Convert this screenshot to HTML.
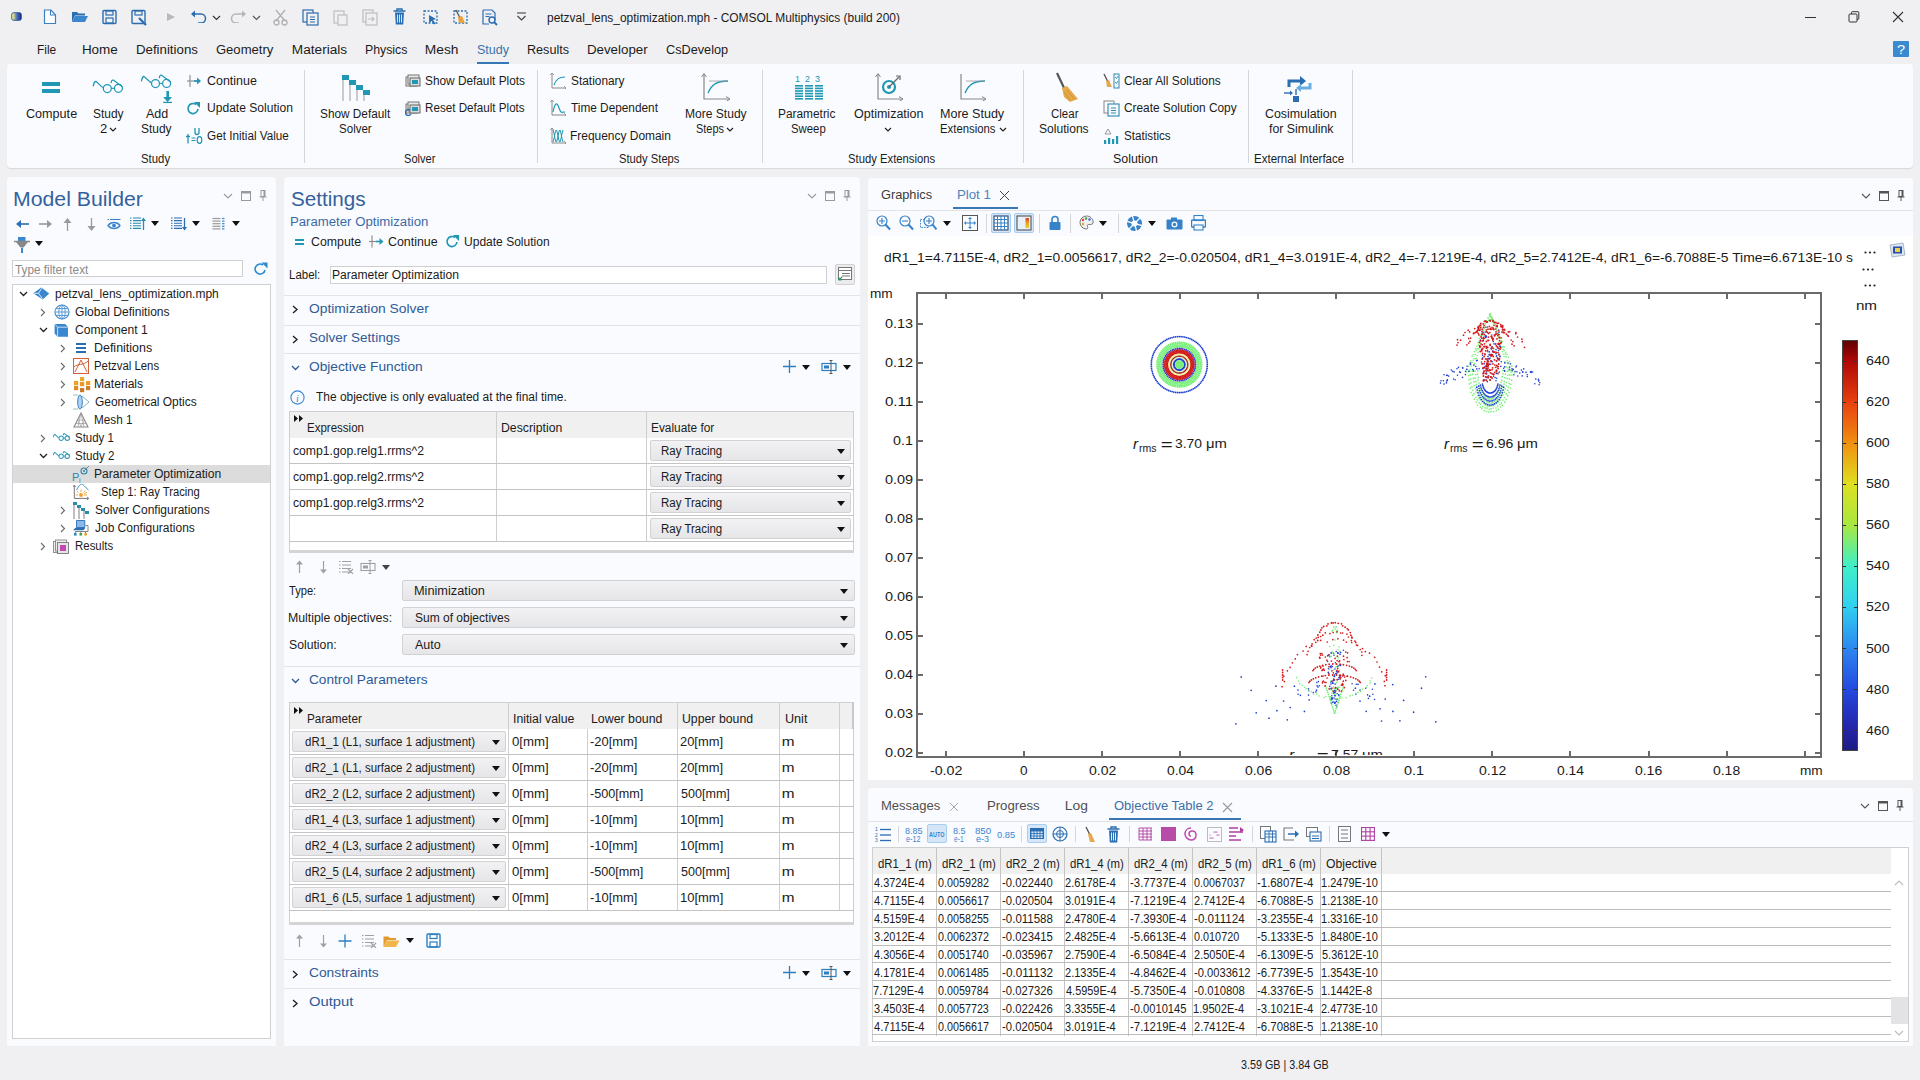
<!DOCTYPE html>
<html><head><meta charset="utf-8"><title>COMSOL</title>
<style>
html,body{margin:0;padding:0;width:1920px;height:1080px;overflow:hidden;background:#f0f0f2;font-family:"Liberation Sans",sans-serif;}
body>div,body>svg{position:absolute;}
.t{position:absolute;white-space:pre;}
</style></head><body>
<svg style="left:11px;top:12px;" width="11" height="9" viewBox="0 0 11 9"><defs><linearGradient id="appg" x1="0" y1="0" x2="1" y2="0"><stop offset="0.1" stop-color="#f4f080"/><stop offset="0.55" stop-color="#4a70c0"/><stop offset="1" stop-color="#142c80"/></linearGradient></defs><rect x="0.7" y="0.7" width="9.6" height="7.6" rx="1.8" fill="url(#appg)" stroke="#1c3a8a" stroke-width="0.8"/></svg>
<svg style="left:43px;top:9px;" width="14" height="16" viewBox="0 0 14 16"><path d="M1.5 1h6.5l4.5 5v8.5h-11z" fill="#fbfdff" stroke="#3a80c2" stroke-width="1.2"/><path d="M7.5 1v5h5" fill="none" stroke="#3a80c2" stroke-width="1.1"/></svg>
<svg style="left:71px;top:10px;" width="18" height="13" viewBox="0 0 18 13"><path d="M1 2h5l1.5 1.5H14v2H4L1 12z" fill="#2a6db0"/><path d="M4 6h13l-3 6H1z" fill="#3b86cc"/></svg>
<svg style="left:102px;top:9px;" width="15" height="16" viewBox="0 0 15 16"><rect x="1" y="1.5" width="13" height="13" rx="1" fill="none" stroke="#2a6db0" stroke-width="1.4"/><rect x="4" y="2" width="7" height="4" fill="none" stroke="#2a6db0" stroke-width="1.2"/><rect x="4" y="9" width="7" height="5" fill="none" stroke="#2a6db0" stroke-width="1.2"/></svg>
<svg style="left:131px;top:9px;" width="18" height="17" viewBox="0 0 18 17"><rect x="1" y="1.5" width="13" height="13" rx="1" fill="none" stroke="#2a6db0" stroke-width="1.4"/><rect x="4" y="2" width="7" height="4" fill="none" stroke="#2a6db0" stroke-width="1.2"/><path d="M8 9l7 7" stroke="#2a6db0" stroke-width="2.2"/></svg>
<svg style="left:166px;top:12px;" width="10" height="10" viewBox="0 0 10 10"><path d="M1 1l8 4-8 4z" fill="#b9b9b9"/></svg>
<svg style="left:190px;top:10px;" width="17" height="13" viewBox="0 0 17 13"><path d="M4 4h7a4.5 4.5 0 0 1 0 9H8" fill="none" stroke="#2a6db0" stroke-width="1.5"/><path d="M1 4l4-3.5v7z" fill="#2a6db0"/></svg>
<svg style="left:212px;top:15px;" width="9" height="6" viewBox="0 0 9 6"><path d="M1 1l3.5 3.5L8 1" fill="none" stroke="#333" stroke-width="1.2"/></svg>
<svg style="left:230px;top:10px;" width="17" height="13" viewBox="0 0 17 13"><path d="M13 4H6a4.5 4.5 0 0 0 0 9h3" fill="none" stroke="#b5b5b5" stroke-width="1.5"/><path d="M16 4l-4-3.5v7z" fill="#b5b5b5"/></svg>
<svg style="left:252px;top:15px;" width="9" height="6" viewBox="0 0 9 6"><path d="M1 1l3.5 3.5L8 1" fill="none" stroke="#555" stroke-width="1.2"/></svg>
<svg style="left:273px;top:9px;" width="15" height="17" viewBox="0 0 15 17"><path d="M3 1l9 11M12 1L3 12" stroke="#b0b0b0" stroke-width="1.3"/><circle cx="3.5" cy="13.5" r="2.5" fill="none" stroke="#b0b0b0" stroke-width="1.3"/><circle cx="11.5" cy="13.5" r="2.5" fill="none" stroke="#b0b0b0" stroke-width="1.3"/></svg>
<svg style="left:302px;top:9px;" width="17" height="17" viewBox="0 0 17 17"><rect x="1" y="1" width="10" height="12" fill="none" stroke="#2a6db0" stroke-width="1.2"/><rect x="5" y="4" width="11" height="12" fill="#f0f0f2" stroke="#2a6db0" stroke-width="1.2"/><path d="M8 8h5M8 10.5h5M8 13h5" stroke="#2a6db0" stroke-width="1"/></svg>
<svg style="left:333px;top:9px;" width="15" height="17" viewBox="0 0 15 17"><rect x="1" y="2" width="10" height="12" fill="none" stroke="#bdbdbd" stroke-width="1.2"/><rect x="5" y="6" width="9" height="10" fill="#f0f0f2" stroke="#bdbdbd" stroke-width="1.2"/></svg>
<svg style="left:362px;top:9px;" width="16" height="17" viewBox="0 0 16 17"><rect x="1" y="1" width="10" height="12" fill="none" stroke="#bdbdbd" stroke-width="1.2"/><rect x="4" y="4" width="11" height="12" fill="#f0f0f2" stroke="#bdbdbd" stroke-width="1.2"/><path d="M6 10h6M10 8l2 2-2 2" fill="none" stroke="#bdbdbd" stroke-width="1.1"/></svg>
<svg style="left:393px;top:8px;" width="13" height="18" viewBox="0 0 13 18"><path d="M0.5 3h12M4 3V1h5v2" fill="none" stroke="#2a6db0" stroke-width="1.4"/><path d="M2 4.5h9l-0.8 12H2.8z" fill="#2a6db0"/><path d="M4.5 6.5v8M6.5 6.5v8M8.5 6.5v8" stroke="#f0f0f2" stroke-width="0.9"/></svg>
<svg style="left:423px;top:10px;" width="15" height="15" viewBox="0 0 15 15"><rect x="1" y="1" width="13" height="12" fill="none" stroke="#2a6db0" stroke-width="1.3" stroke-dasharray="2 1.5"/><path d="M6 5l7 4-3 1 2.5 3.5-1.3 1-2.5-3.5-2.5 2z" fill="#2a6db0"/></svg>
<svg style="left:453px;top:9px;" width="15" height="16" viewBox="0 0 15 16"><rect x="1" y="2" width="13" height="12" fill="none" stroke="#2a6db0" stroke-width="1.3" stroke-dasharray="2 1.5"/><path d="M3 1l4 8" stroke="#555" stroke-width="1.2"/><path d="M5 8l4-1 3 7H6z" fill="#e6a23c"/></svg>
<svg style="left:482px;top:9px;" width="16" height="17" viewBox="0 0 16 17"><path d="M1 1h9l3 3v7" fill="none" stroke="#2a6db0" stroke-width="1.2"/><path d="M1 1v14h6" fill="none" stroke="#2a6db0" stroke-width="1.2"/><path d="M3.5 5h6M3.5 7.5h4" stroke="#2a6db0" stroke-width="1"/><circle cx="10" cy="11" r="3" fill="none" stroke="#2a6db0" stroke-width="1.4"/><path d="M12 13l3 3" stroke="#2a6db0" stroke-width="1.8"/></svg>
<svg style="left:516px;top:12px;" width="11" height="10" viewBox="0 0 11 10"><path d="M1 1h9" stroke="#444" stroke-width="1.1"/><path d="M1.5 4l4 4 4-4" fill="none" stroke="#444" stroke-width="1.2"/></svg>
<div class="t" style="left:547.28px;top:11.84px;font-size:12px;line-height:12px;color:#1b1b1b;transform:scaleX(0.9939);transform-origin:0.72px 0;">petzval_lens_optimization.mph - COMSOL Multiphysics (build 200)</div>
<div style="left:1805px;top:17px;width:11px;height:1px;background:#333"></div>
<svg style="left:1848px;top:11px;" width="12" height="12" viewBox="0 0 12 12"><rect x="1" y="3" width="8" height="8" rx="1" fill="none" stroke="#333" stroke-width="1"/><path d="M3.5 3V1.5a0.8 0.8 0 0 1 0.8-.8H10a0.8 0.8 0 0 1 .8.8V7.5a.8.8 0 0 1-.8.8H9" fill="none" stroke="#333" stroke-width="1"/></svg>
<svg style="left:1892px;top:11px;" width="12" height="12" viewBox="0 0 12 12"><path d="M1 1l10 10M11 1L1 11" stroke="#333" stroke-width="1.1"/></svg>
<div class="t" style="left:36.54px;top:43.84px;font-size:12px;line-height:12px;color:#1b1b1b;transform:scaleX(0.9955);transform-origin:0.96px 0;">File</div>
<div class="t" style="left:82.24px;top:43.84px;font-size:12px;line-height:12px;color:#1b1b1b;transform:scaleX(1.1231);transform-origin:0.96px 0;">Home</div>
<div class="t" style="left:136.04px;top:43.84px;font-size:12px;line-height:12px;color:#1b1b1b;transform:scaleX(1.1068);transform-origin:0.96px 0;">Definitions</div>
<div class="t" style="left:216.40px;top:43.84px;font-size:12px;line-height:12px;color:#1b1b1b;transform:scaleX(1.0887);transform-origin:0.60px 0;">Geometry</div>
<div class="t" style="left:292.04px;top:43.84px;font-size:12px;line-height:12px;color:#1b1b1b;transform:scaleX(1.1358);transform-origin:0.96px 0;">Materials</div>
<div class="t" style="left:364.84px;top:43.84px;font-size:12px;line-height:12px;color:#1b1b1b;transform:scaleX(1.0260);transform-origin:0.96px 0;">Physics</div>
<div class="t" style="left:424.84px;top:43.84px;font-size:12px;line-height:12px;color:#1b1b1b;transform:scaleX(1.1461);transform-origin:0.96px 0;">Mesh</div>
<div class="t" style="left:477.06px;top:43.84px;font-size:12px;line-height:12px;color:#3a72a8;transform:scaleX(1.0425);transform-origin:0.54px 0;">Study</div>
<div class="t" style="left:527.04px;top:43.84px;font-size:12px;line-height:12px;color:#1b1b1b;transform:scaleX(1.0533);transform-origin:0.96px 0;">Results</div>
<div class="t" style="left:587.04px;top:43.84px;font-size:12px;line-height:12px;color:#1b1b1b;transform:scaleX(1.1105);transform-origin:0.96px 0;">Developer</div>
<div class="t" style="left:666.40px;top:43.84px;font-size:12px;line-height:12px;color:#1b1b1b;transform:scaleX(1.0590);transform-origin:0.60px 0;">CsDevelop</div>
<div style="left:477px;top:62px;width:32px;height:2px;background:#3578b5"></div>
<div style="left:1893px;top:41px;width:16px;height:16px;background:#3a8ad0;border-radius:1px"></div>
<div class="t" style="left:1896.98px;top:43.00px;font-size:13px;line-height:13px;color:#fff;transform:scaleX(1.1218);transform-origin:0.52px 0;">?</div>
<div style="left:7px;top:64px;width:1906px;height:104px;background:#fafbfe;border-radius:4px;box-shadow:0 1px 1px rgba(0,0,0,0.10)"></div>
<div style="left:304px;top:70px;width:1px;height:93px;background:#d6d6d8"></div>
<div style="left:537px;top:70px;width:1px;height:93px;background:#d6d6d8"></div>
<div style="left:762px;top:70px;width:1px;height:93px;background:#d6d6d8"></div>
<div style="left:1023px;top:70px;width:1px;height:93px;background:#d6d6d8"></div>
<div style="left:1248px;top:70px;width:1px;height:93px;background:#d6d6d8"></div>
<div style="left:1352px;top:70px;width:1px;height:93px;background:#d6d6d8"></div>
<div class="t" style="left:140.96px;top:152.84px;font-size:12px;line-height:12px;color:#1b1b1b;transform:scaleX(0.9462);transform-origin:0.54px 0;">Study</div>
<div class="t" style="left:403.76px;top:152.84px;font-size:12px;line-height:12px;color:#1b1b1b;transform:scaleX(0.9219);transform-origin:0.54px 0;">Solver</div>
<div class="t" style="left:618.76px;top:152.84px;font-size:12px;line-height:12px;color:#1b1b1b;transform:scaleX(0.9338);transform-origin:0.54px 0;">Study Steps</div>
<div class="t" style="left:847.76px;top:152.84px;font-size:12px;line-height:12px;color:#1b1b1b;transform:scaleX(0.9396);transform-origin:0.54px 0;">Study Extensions</div>
<div class="t" style="left:1112.76px;top:152.84px;font-size:12px;line-height:12px;color:#1b1b1b;transform:scaleX(1.0328);transform-origin:0.54px 0;">Solution</div>
<div class="t" style="left:1254.04px;top:152.84px;font-size:12px;line-height:12px;color:#1b1b1b;transform:scaleX(0.9581);transform-origin:0.96px 0;">External Interface</div>
<div class="t" style="left:25.70px;top:107.84px;font-size:12px;line-height:12px;color:#1b1b1b;transform:scaleX(1.0509);transform-origin:0.60px 0;">Compute</div>
<div class="t" style="left:93.46px;top:107.84px;font-size:12px;line-height:12px;color:#1b1b1b;transform:scaleX(0.9960);transform-origin:0.54px 0;">Study</div>
<div class="t" style="left:146.00px;top:107.84px;font-size:12px;line-height:12px;color:#1b1b1b;transform:scaleX(1.0417);transform-origin:0.00px 0;">Add</div>
<div class="t" style="left:141.46px;top:122.84px;font-size:12px;line-height:12px;color:#1b1b1b;transform:scaleX(0.9960);transform-origin:0.54px 0;">Study</div>
<div class="t" style="left:320.46px;top:107.84px;font-size:12px;line-height:12px;color:#1b1b1b;transform:scaleX(0.9845);transform-origin:0.54px 0;">Show Default</div>
<div class="t" style="left:339.46px;top:122.84px;font-size:12px;line-height:12px;color:#1b1b1b;transform:scaleX(0.9610);transform-origin:0.54px 0;">Solver</div>
<div class="t" style="left:684.54px;top:107.84px;font-size:12px;line-height:12px;color:#1b1b1b;transform:scaleX(1.0046);transform-origin:0.96px 0;">More Study</div>
<div class="t" style="left:696.46px;top:122.84px;font-size:12px;line-height:12px;color:#1b1b1b;transform:scaleX(0.9091);transform-origin:0.54px 0;">Steps</div>
<div class="t" style="left:778.34px;top:107.84px;font-size:12px;line-height:12px;color:#1b1b1b;transform:scaleX(0.9901);transform-origin:0.96px 0;">Parametric</div>
<div class="t" style="left:790.76px;top:122.84px;font-size:12px;line-height:12px;color:#1b1b1b;transform:scaleX(0.9456);transform-origin:0.54px 0;">Sweep</div>
<div class="t" style="left:853.76px;top:107.84px;font-size:12px;line-height:12px;color:#1b1b1b;transform:scaleX(1.0428);transform-origin:0.54px 0;">Optimization</div>
<div class="t" style="left:940.04px;top:107.84px;font-size:12px;line-height:12px;color:#1b1b1b;transform:scaleX(1.0460);transform-origin:0.96px 0;">More Study</div>
<div class="t" style="left:939.54px;top:122.84px;font-size:12px;line-height:12px;color:#1b1b1b;transform:scaleX(0.9424);transform-origin:0.96px 0;">Extensions</div>
<div class="t" style="left:1050.70px;top:107.84px;font-size:12px;line-height:12px;color:#1b1b1b;transform:scaleX(0.9570);transform-origin:0.60px 0;">Clear</div>
<div class="t" style="left:1039.46px;top:122.84px;font-size:12px;line-height:12px;color:#1b1b1b;transform:scaleX(1.0058);transform-origin:0.54px 0;">Solutions</div>
<div class="t" style="left:1264.90px;top:107.84px;font-size:12px;line-height:12px;color:#1b1b1b;transform:scaleX(1.0317);transform-origin:0.60px 0;">Cosimulation</div>
<div class="t" style="left:1268.68px;top:122.84px;font-size:12px;line-height:12px;color:#1b1b1b;transform:scaleX(1.0297);transform-origin:0.12px 0;">for Simulink</div>
<div class="t" style="left:100.20px;top:122.84px;font-size:12px;line-height:12px;color:#1b1b1b;transform:scaleX(1.0870);transform-origin:0.60px 0;">2</div>
<svg style="left:109px;top:127px;" width="8" height="6" viewBox="0 0 8 6"><path d="M1 1l3 3 3-3" fill="none" stroke="#222" stroke-width="1.2"/></svg>
<svg style="left:726px;top:127px;" width="8" height="6" viewBox="0 0 8 6"><path d="M1 1l3 3 3-3" fill="none" stroke="#222" stroke-width="1.2"/></svg>
<svg style="left:884px;top:127px;" width="8" height="6" viewBox="0 0 8 6"><path d="M1 1l3 3 3-3" fill="none" stroke="#222" stroke-width="1.2"/></svg>
<svg style="left:999px;top:127px;" width="8" height="6" viewBox="0 0 8 6"><path d="M1 1l3 3 3-3" fill="none" stroke="#222" stroke-width="1.2"/></svg>
<div class="t" style="left:206.90px;top:74.84px;font-size:12px;line-height:12px;color:#1b1b1b;transform:scaleX(1.0379);transform-origin:0.60px 0;">Continue</div>
<div class="t" style="left:206.60px;top:102.34px;font-size:12px;line-height:12px;color:#1b1b1b;transform:scaleX(1.0064);transform-origin:0.90px 0;">Update Solution</div>
<div class="t" style="left:206.90px;top:130.34px;font-size:12px;line-height:12px;color:#1b1b1b;transform:scaleX(0.9766);transform-origin:0.60px 0;">Get Initial Value</div>
<div class="t" style="left:425.46px;top:74.84px;font-size:12px;line-height:12px;color:#1b1b1b;transform:scaleX(0.9857);transform-origin:0.54px 0;">Show Default Plots</div>
<div class="t" style="left:425.04px;top:102.34px;font-size:12px;line-height:12px;color:#1b1b1b;transform:scaleX(0.9700);transform-origin:0.96px 0;">Reset Default Plots</div>
<div class="t" style="left:570.76px;top:74.84px;font-size:12px;line-height:12px;color:#1b1b1b;transform:scaleX(0.9903);transform-origin:0.54px 0;">Stationary</div>
<div class="t" style="left:571.06px;top:102.34px;font-size:12px;line-height:12px;color:#1b1b1b;transform:scaleX(0.9850);transform-origin:0.24px 0;">Time Dependent</div>
<div class="t" style="left:570.34px;top:130.34px;font-size:12px;line-height:12px;color:#1b1b1b;transform:scaleX(0.9954);transform-origin:0.96px 0;">Frequency Domain</div>
<div class="t" style="left:1123.70px;top:74.84px;font-size:12px;line-height:12px;color:#1b1b1b;transform:scaleX(0.9932);transform-origin:0.60px 0;">Clear All Solutions</div>
<div class="t" style="left:1123.70px;top:102.34px;font-size:12px;line-height:12px;color:#1b1b1b;transform:scaleX(0.9871);transform-origin:0.60px 0;">Create Solution Copy</div>
<div class="t" style="left:1123.76px;top:130.34px;font-size:12px;line-height:12px;color:#1b1b1b;transform:scaleX(0.9715);transform-origin:0.54px 0;">Statistics</div>
<div style="left:42px;top:82px;width:18px;height:4px;background:#2098b4"></div>
<div style="left:42px;top:89px;width:18px;height:4px;background:#2098b4"></div>
<svg style="left:85px;top:68px;" width="95" height="40" viewBox="0 0 95 40"><path d="M8.2 18.3c0.5-3 2-5 2.7-4.9L17.799999999999997 19.6" fill="none" stroke="#2098b4" stroke-width="1.25"/><circle cx="22.299999999999997" cy="20.5" r="4" fill="none" stroke="#2098b4" stroke-width="1.25"/><path d="M26.3 20.3h3" stroke="#2098b4" stroke-width="1.1"/><circle cx="33.4" cy="20.3" r="4" fill="none" stroke="#2098b4" stroke-width="1.25"/><path d="M37.4 18.8L28.4 12.100000000000001c-1.2-0.4-2.2 0.6-2.2 3" fill="none" stroke="#2098b4" stroke-width="1.25"/><path d="M56.4 13.4c0.5-3 2-5 2.7-4.9L66.0 14.700000000000001" fill="none" stroke="#2098b4" stroke-width="1.25"/><circle cx="70.5" cy="15.600000000000001" r="4" fill="none" stroke="#2098b4" stroke-width="1.25"/><path d="M74.5 15.4h3" stroke="#2098b4" stroke-width="1.1"/><circle cx="81.6" cy="15.4" r="4" fill="none" stroke="#2098b4" stroke-width="1.25"/><path d="M85.6 13.9L76.6 7.2c-1.2-0.4-2.2 0.6-2.2 3" fill="none" stroke="#2098b4" stroke-width="1.25"/><path d="M82.7 23v6" stroke="#2098b4" stroke-width="2.6"/><path d="M78.2 29h8.8l-4.4 5z" fill="#2098b4"/><path d="M78.2 34.4h8.8" stroke="#2098b4" stroke-width="1.3"/></svg>
<svg style="left:186px;top:74px;" width="17" height="14" viewBox="0 0 17 14"><path d="M4 1v12" stroke="#888" stroke-width="1.1"/><path d="M1 7h11" stroke="#888" stroke-width="1.1"/><path d="M8 7h6" stroke="#2098b4" stroke-width="1.6"/><path d="M11 3.5l4 3.5-4 3.5z" fill="#2098b4"/></svg>
<svg style="left:186px;top:101px;" width="15" height="15" viewBox="0 0 15 15"><path d="M12 8a5 5 0 1 1-2-4.5" fill="none" stroke="#2098b4" stroke-width="1.7"/><path d="M8 1h6v6z" fill="#2098b4"/></svg>
<svg style="left:185px;top:127px;" width="18" height="18" viewBox="0 0 18 18"><path d="M10 1v4.5a2 2 0 0 0 4 0V1" fill="none" stroke="#2098b4" stroke-width="1.3"/><path d="M3 7v9.5M1 9.5h4" stroke="#2098b4" stroke-width="1.3"/><path d="M6.5 11h4M6.5 13.5h4" stroke="#2098b4" stroke-width="1.1"/><ellipse cx="14.5" cy="13" rx="2.3" ry="3.3" fill="none" stroke="#2098b4" stroke-width="1.2"/></svg>
<svg style="left:341px;top:74px;" width="30" height="27" viewBox="0 0 30 27"><path d="M2 3v24M9 8v19M16 13v14M23 18v9" stroke="#999" stroke-width="1"/><rect x="1" y="1" width="7" height="5" fill="#2098b4"/><rect x="8" y="6" width="7" height="5" fill="#2098b4"/><rect x="15" y="11" width="7" height="5" fill="#2098b4"/><rect x="22" y="16" width="7" height="5" fill="#2098b4"/></svg>
<svg style="left:405px;top:73px;" width="17" height="15" viewBox="0 0 17 15"><rect x="1" y="4" width="11" height="9" fill="#e8e8e8" stroke="#777" stroke-width="1"/><rect x="3" y="2" width="11" height="9" fill="#e8e8e8" stroke="#777" stroke-width="1"/><rect x="5" y="5" width="10" height="8" fill="#dcdcdc" stroke="#666" stroke-width="1"/><rect x="7" y="7" width="6" height="4" fill="#2098b4"/></svg>
<svg style="left:405px;top:100px;" width="17" height="16" viewBox="0 0 17 16"><rect x="1" y="4" width="11" height="9" fill="#e8e8e8" stroke="#777" stroke-width="1"/><rect x="3" y="2" width="11" height="9" fill="#e8e8e8" stroke="#777" stroke-width="1"/><rect x="5" y="5" width="10" height="8" fill="#dcdcdc" stroke="#666" stroke-width="1"/><rect x="7" y="7" width="6" height="4" fill="#2098b4"/><path d="M6 14a3 3 0 1 1-1-4" fill="none" stroke="#2a6db0" stroke-width="1.4"/></svg>
<svg style="left:550px;top:73px;" width="17" height="16" viewBox="0 0 17 16"><path d="M2 0v15h14" fill="none" stroke="#888" stroke-width="1"/><path d="M0 2l2-2 2 2M14 13l2 2-2 2" fill="none" stroke="#888" stroke-width="0.8"/><path d="M4 12c2-6 5-8 11-8" fill="none" stroke="#2098b4" stroke-width="1.2"/></svg>
<svg style="left:550px;top:100px;" width="17" height="16" viewBox="0 0 17 16"><path d="M2 0v15h14" fill="none" stroke="#888" stroke-width="1"/><path d="M0 2l2-2 2 2M14 13l2 2-2 2" fill="none" stroke="#888" stroke-width="0.8"/><path d="M3 12c2-10 4-10 6-4s3 4 6 4" fill="none" stroke="#2098b4" stroke-width="1.2"/></svg>
<svg style="left:550px;top:128px;" width="17" height="16" viewBox="0 0 17 16"><path d="M2 0v15h14" fill="none" stroke="#888" stroke-width="1"/><path d="M0 2l2-2 2 2M14 13l2 2-2 2" fill="none" stroke="#888" stroke-width="0.8"/><path d="M3.0 2c1.5 4 1.5 8 3 12M3.0 14c1.5-4 1.5-8 3-12" fill="none" stroke="#2098b4" stroke-width="1"/><path d="M6.5 2c1.5 4 1.5 8 3 12M6.5 14c1.5-4 1.5-8 3-12" fill="none" stroke="#2098b4" stroke-width="1"/><path d="M10.0 2c1.5 4 1.5 8 3 12M10.0 14c1.5-4 1.5-8 3-12" fill="none" stroke="#2098b4" stroke-width="1"/></svg>
<svg style="left:701px;top:73px;" width="30" height="28" viewBox="0 0 30 28"><path d="M3 1v25h26" fill="none" stroke="#888" stroke-width="1.2"/><path d="M0.5 4L3 0.5 5.5 4M25 23.5l4 2.5-4 2.5" fill="none" stroke="#888" stroke-width="1"/><path d="M7 20c4-9 9-12 20-12" fill="none" stroke="#2098b4" stroke-width="1.4"/><path d="M8 8h19" stroke="#999" stroke-width="0.8"/></svg>
<svg style="left:795px;top:74px;" width="29" height="27" viewBox="0 0 29 27"><text x="0" y="8" font-size="9" fill="#2098b4" font-family="Liberation Sans">1</text><text x="10" y="8" font-size="9" fill="#2098b4" font-family="Liberation Sans">2</text><text x="20" y="8" font-size="9" fill="#2098b4" font-family="Liberation Sans">3</text><rect x="0" y="11.0" width="8" height="1.6" fill="#2098b4"/><rect x="0" y="13.6" width="8" height="1.6" fill="#2098b4"/><rect x="0" y="16.2" width="8" height="1.6" fill="#2098b4"/><rect x="0" y="18.8" width="8" height="1.6" fill="#2098b4"/><rect x="0" y="21.4" width="8" height="1.6" fill="#2098b4"/><rect x="0" y="24.0" width="8" height="1.6" fill="#2098b4"/><rect x="10" y="11.0" width="8" height="1.6" fill="#2098b4"/><rect x="10" y="13.6" width="8" height="1.6" fill="#2098b4"/><rect x="10" y="16.2" width="8" height="1.6" fill="#2098b4"/><rect x="10" y="18.8" width="8" height="1.6" fill="#2098b4"/><rect x="10" y="21.4" width="8" height="1.6" fill="#2098b4"/><rect x="10" y="24.0" width="8" height="1.6" fill="#2098b4"/><rect x="20" y="11.0" width="8" height="1.6" fill="#2098b4"/><rect x="20" y="13.6" width="8" height="1.6" fill="#2098b4"/><rect x="20" y="16.2" width="8" height="1.6" fill="#2098b4"/><rect x="20" y="18.8" width="8" height="1.6" fill="#2098b4"/><rect x="20" y="21.4" width="8" height="1.6" fill="#2098b4"/><rect x="20" y="24.0" width="8" height="1.6" fill="#2098b4"/></svg>
<svg style="left:875px;top:73px;" width="29" height="28" viewBox="0 0 29 28"><path d="M3 1v25h25" fill="none" stroke="#888" stroke-width="1.2"/><path d="M0.5 4L3 0.5 5.5 4M24 23.5l4 2.5-4 2.5" fill="none" stroke="#888" stroke-width="1"/><circle cx="14" cy="14" r="6" fill="none" stroke="#2098b4" stroke-width="2.2"/><circle cx="14" cy="14" r="2" fill="#2098b4"/><path d="M14 14l10-10" stroke="#666" stroke-width="1.2"/><path d="M21 3l4 0 0 4" fill="none" stroke="#666" stroke-width="1.2"/></svg>
<svg style="left:959px;top:73px;" width="29" height="28" viewBox="0 0 29 28"><path d="M2 1v25h25" fill="none" stroke="#888" stroke-width="1.2"/><path d="M23 23.5l4 2.5-4 2.5" fill="none" stroke="#888" stroke-width="1"/><path d="M6 20c4-9 9-12 20-12" fill="none" stroke="#2098b4" stroke-width="1.4"/><path d="M7 8h19" stroke="#999" stroke-width="0.8"/></svg>
<svg style="left:1055px;top:72px;" width="24" height="31" viewBox="0 0 24 31"><path d="M2 1l8 17" stroke="#555" stroke-width="2.2"/><path d="M7 16l5-2 11 13-8 3-6-5z" fill="#e6a84a"/><path d="M9 20l6 8M12 18l7 9" stroke="#c88a2a" stroke-width="0.8"/></svg>
<svg style="left:1103px;top:73px;" width="17" height="16" viewBox="0 0 17 16"><path d="M1 1l4 8" stroke="#555" stroke-width="1.4"/><path d="M3 8l3-1 3 7H4z" fill="#e6a84a"/><rect x="11" y="1" width="5" height="14" fill="none" stroke="#2a8ab0" stroke-width="1"/><path d="M12 4l1.5 1.5L15 3M12 9l1.5 1.5L15 8" fill="none" stroke="#2a8ab0" stroke-width="0.9"/></svg>
<svg style="left:1103px;top:100px;" width="17" height="17" viewBox="0 0 17 17"><rect x="1" y="1" width="10" height="12" fill="none" stroke="#888" stroke-width="1"/><rect x="5" y="4" width="11" height="12" fill="#f9fafd" stroke="#2a8ab0" stroke-width="1.1"/><path d="M8 8h5M8 10.5h5M8 13h5" stroke="#2a8ab0" stroke-width="1"/></svg>
<svg style="left:1103px;top:128px;" width="17" height="17" viewBox="0 0 17 17"><path d="M5 1l3 5H2z" fill="none" stroke="#999" stroke-width="1"/><rect x="1" y="12" width="2.2" height="4" fill="#2098b4"/><rect x="5" y="10" width="2.2" height="6" fill="#2098b4"/><rect x="9" y="11" width="2.2" height="5" fill="#2098b4"/><rect x="13" y="8" width="2.2" height="8" fill="#2098b4"/></svg>
<svg style="left:1283px;top:75px;" width="30" height="28" viewBox="0 0 30 28"><path d="M6 12V6h12" fill="none" stroke="#2a6db0" stroke-width="3"/><path d="M17 1l6 5-6 5z" fill="#2a6db0"/><path d="M27 8v5H17" fill="none" stroke="#6aaee0" stroke-width="3"/><path d="M18 9l-5 4 5 4z" fill="#6aaee0"/><path d="M1 18h8" stroke="#2a6db0" stroke-width="1.4"/><path d="M7 15.5l3 2.5-3 2.5z" fill="#2a6db0"/><path d="M13 14v6" stroke="#2a6db0" stroke-width="1.4"/><rect x="10" y="21" width="6" height="6" fill="#2a6db0"/></svg>
<div style="left:7px;top:177px;width:269px;height:869px;background:#fafbfe;border-radius:4px 4px 0 0"></div>
<div class="t" style="left:13.36px;top:188.65px;font-size:20.5px;line-height:20.5px;color:#34619c;transform:scaleX(1.0372);transform-origin:1.64px 0;">Model Builder</div>
<svg style="left:223px;top:193px;" width="10" height="6" viewBox="0 0 10 6"><path d="M1 1l4 4 4-4" fill="none" stroke="#9a9a9a" stroke-width="1.1"/></svg>
<svg style="left:241px;top:191px;" width="10" height="10" viewBox="0 0 10 10"><rect x="0.5" y="0.5" width="9" height="9" fill="none" stroke="#9a9a9a" stroke-width="1"/><rect x="0.5" y="0.5" width="9" height="2" fill="#9a9a9a"/></svg>
<svg style="left:259px;top:190px;" width="8" height="11" viewBox="0 0 8 11"><rect x="2" y="0.5" width="4" height="6" fill="none" stroke="#9a9a9a" stroke-width="1"/><rect x="4.5" y="0.5" width="1.5" height="6" fill="#9a9a9a"/><path d="M0.5 7h7M4 7v4" stroke="#9a9a9a" stroke-width="1"/></svg>
<svg style="left:15px;top:218px;" width="15" height="12" viewBox="0 0 15 12"><path d="M14 6H3" stroke="#2a6db0" stroke-width="1.6"/><path d="M1 6l5-4v8z" fill="#2a6db0"/></svg>
<svg style="left:38px;top:218px;" width="15" height="12" viewBox="0 0 15 12"><path d="M1 6h11" stroke="#9a9a9a" stroke-width="1.6"/><path d="M14 6l-5-4v8z" fill="#9a9a9a"/></svg>
<svg style="left:63px;top:217px;" width="9" height="15" viewBox="0 0 9 15"><path d="M4.5 14V3" stroke="#9a9a9a" stroke-width="1.3"/><path d="M4.5 1l-4 5h8z" fill="#9a9a9a"/></svg>
<svg style="left:87px;top:217px;" width="9" height="15" viewBox="0 0 9 15"><path d="M4.5 1v11" stroke="#9a9a9a" stroke-width="1.3"/><path d="M4.5 14l-4-5h8z" fill="#9a9a9a"/></svg>
<svg style="left:107px;top:218px;" width="14" height="12" viewBox="0 0 14 12"><path d="M0.5 1.5h1.5M3 1.5h10.5" stroke="#3a7fc0" stroke-width="1.2"/><path d="M1 7.5c3-4 9-4 12 0-3 4-9 4-12 0z" fill="none" stroke="#3a86cf" stroke-width="1.3"/><ellipse cx="7" cy="7.5" rx="2" ry="1.8" fill="#3a86cf"/></svg>
<svg style="left:129px;top:217px;" width="17" height="14" viewBox="0 0 17 14"><path d="M1 1.0h1.5M4 1.0h8" stroke="#2a8ab0" stroke-width="1.1"/><path d="M1 3.6h1.5M4 3.6h8" stroke="#2a8ab0" stroke-width="1.1"/><path d="M1 6.2h1.5M4 6.2h8" stroke="#2a8ab0" stroke-width="1.1"/><path d="M1 8.8h1.5M4 8.8h8" stroke="#2a8ab0" stroke-width="1.1"/><path d="M1 11.4h1.5M4 11.4h8" stroke="#2a8ab0" stroke-width="1.1"/><path d="M14.5 13V3" stroke="#2a8ab0" stroke-width="1.3"/><path d="M14.5 0.5l-2.5 3.5h5z" fill="#2a8ab0"/></svg>
<svg style="left:151px;top:221px;" width="8" height="5" viewBox="0 0 8 5"><path d="M0 0h8l-4 5z" fill="#111"/></svg>
<svg style="left:170px;top:217px;" width="17" height="14" viewBox="0 0 17 14"><path d="M1 1.0h1.5M4 1.0h8" stroke="#2a6db0" stroke-width="1.1"/><path d="M1 3.6h1.5M4 3.6h8" stroke="#2a6db0" stroke-width="1.1"/><path d="M1 6.2h1.5M4 6.2h8" stroke="#2a6db0" stroke-width="1.1"/><path d="M1 8.8h1.5M4 8.8h8" stroke="#2a6db0" stroke-width="1.1"/><path d="M1 11.4h1.5M4 11.4h8" stroke="#2a6db0" stroke-width="1.1"/><path d="M14.5 1v10" stroke="#2a6db0" stroke-width="1.3"/><path d="M14.5 13.5l-2.5-3.5h5z" fill="#2a6db0"/></svg>
<svg style="left:192px;top:221px;" width="8" height="5" viewBox="0 0 8 5"><path d="M0 0h8l-4 5z" fill="#111"/></svg>
<svg style="left:212px;top:217px;" width="13" height="14" viewBox="0 0 13 14"><path d="M0.5 1.5h8" stroke="#999" stroke-width="1.2"/><path d="M10 1.5h2.5" stroke="#3a86cf" stroke-width="1.2"/><path d="M0.5 4.1h8" stroke="#999" stroke-width="1.2"/><path d="M10 4.1h2.5" stroke="#3a86cf" stroke-width="1.2"/><path d="M0.5 6.7h8" stroke="#999" stroke-width="1.2"/><path d="M10 6.7h2.5" stroke="#3a86cf" stroke-width="1.2"/><path d="M0.5 9.3h8" stroke="#999" stroke-width="1.2"/><path d="M10 9.3h2.5" stroke="#3a86cf" stroke-width="1.2"/><path d="M0.5 11.9h8" stroke="#999" stroke-width="1.2"/><path d="M10 11.9h2.5" stroke="#3a86cf" stroke-width="1.2"/></svg>
<svg style="left:232px;top:221px;" width="8" height="5" viewBox="0 0 8 5"><path d="M0 0h8l-4 5z" fill="#111"/></svg>
<svg style="left:13px;top:236px;" width="18" height="18" viewBox="0 0 18 18"><rect x="5" y="1" width="7.5" height="4.5" fill="#3a86cf"/><path d="M1 5.5h16" stroke="#888" stroke-width="1.5"/><path d="M3 6h12l-4.5 5.5h-3z" fill="#888"/><rect x="8" y="12" width="2" height="5" fill="#3a86cf"/></svg>
<svg style="left:35px;top:241px;" width="8" height="5" viewBox="0 0 8 5"><path d="M0 0h8l-4 5z" fill="#111"/></svg>
<div style="left:12px;top:260px;width:231px;height:17px;background:#fff;border:1px solid #cfcfcf;box-sizing:border-box"></div>
<div class="t" style="left:14.76px;top:263.84px;font-size:12px;line-height:12px;color:#8a8a8a;transform:scaleX(0.9812);transform-origin:0.24px 0;">Type filter text</div>
<svg style="left:253px;top:262px;" width="15" height="14" viewBox="0 0 15 14"><path d="M12 8a5 5 0 1 1-2-5" fill="none" stroke="#2a8ad0" stroke-width="1.6"/><path d="M8.5 0.5h6v6z" fill="#2a8ad0"/></svg>
<div style="left:12px;top:284px;width:259px;height:755px;background:#fff;border:1px solid #d0d0d0;box-sizing:border-box"></div>
<div style="left:13px;top:465px;width:257px;height:18px;background:#dcdcdc"></div>
<svg style="left:19px;top:290.8px;" width="9" height="6" viewBox="0 0 9 6"><path d="M1 1l3.5 3.5L8 1" fill="none" stroke="#222" stroke-width="1.3"/></svg>
<svg style="left:33px;top:286px;" width="18" height="16" viewBox="0 0 18 16"><path d="M0.2 7.3L8.2 1.6L16.2 7.4L9.8 13.6z" fill="#3a86cf"/><path d="M1.0 7.3H5.6L8.6 2.3M5.6 7.3L9.6 13.0" fill="none" stroke="#e8f2fb" stroke-width="0.9"/></svg>
<div class="t" style="left:54.78px;top:287.64px;font-size:12px;line-height:12px;color:#1b1b1b;transform:scaleX(0.9978);transform-origin:0.72px 0;">petzval_lens_optimization.mph</div>
<svg style="left:40px;top:307.8px;" width="6" height="9" viewBox="0 0 6 9"><path d="M1 1l3.5 3.5L1 8" fill="none" stroke="#6a6a6a" stroke-width="1.1"/></svg>
<svg style="left:54px;top:304px;" width="16" height="16" viewBox="0 0 16 16"><circle cx="8" cy="8" r="7" fill="none" stroke="#4a8fd2" stroke-width="1.2"/><ellipse cx="8" cy="8" rx="3.2" ry="7" fill="none" stroke="#4a8fd2" stroke-width="0.9"/><path d="M1.5 8h13M2.3 4.6h11.4M2.3 11.4h11.4M8 1v14" stroke="#4a8fd2" stroke-width="0.9"/></svg>
<div class="t" style="left:74.80px;top:305.64px;font-size:12px;line-height:12px;color:#1b1b1b;transform:scaleX(1.0058);transform-origin:0.60px 0;">Global Definitions</div>
<svg style="left:39px;top:326.8px;" width="9" height="6" viewBox="0 0 9 6"><path d="M1 1l3.5 3.5L8 1" fill="none" stroke="#222" stroke-width="1.3"/></svg>
<svg style="left:54px;top:322px;" width="16" height="16" viewBox="0 0 16 16"><path d="M0.6 2.0L11.2 2.0L14.0 5.0L14.0 14.8L3.6 14.8L0.6 11.6z" fill="#3a86cf"/><path d="M0.9 2.3L3.6 5.2L13.8 5.2M3.6 5.2L3.6 14.6" fill="none" stroke="#d8e8f8" stroke-width="0.9"/></svg>
<div class="t" style="left:74.80px;top:323.64px;font-size:12px;line-height:12px;color:#1b1b1b;transform:scaleX(1.0096);transform-origin:0.60px 0;">Component 1</div>
<svg style="left:60px;top:343.8px;" width="6" height="9" viewBox="0 0 6 9"><path d="M1 1l3.5 3.5L1 8" fill="none" stroke="#6a6a6a" stroke-width="1.1"/></svg>
<svg style="left:76px;top:342px;" width="11" height="11" viewBox="0 0 11 11"><rect x="0" y="1" width="10" height="2" fill="#2a6db0"/><rect x="0" y="5" width="10" height="2" fill="#2a6db0"/><rect x="0" y="9" width="10" height="2" fill="#2a6db0"/></svg>
<div class="t" style="left:94.04px;top:341.64px;font-size:12px;line-height:12px;color:#1b1b1b;transform:scaleX(1.0392);transform-origin:0.96px 0;">Definitions</div>
<svg style="left:60px;top:361.8px;" width="6" height="9" viewBox="0 0 6 9"><path d="M1 1l3.5 3.5L1 8" fill="none" stroke="#6a6a6a" stroke-width="1.1"/></svg>
<svg style="left:73px;top:358px;" width="16" height="16" viewBox="0 0 16 16"><rect x="0.5" y="0.5" width="15" height="15" fill="none" stroke="#d2623a" stroke-width="1.1"/><path d="M2 14L8 2l6 12M1 9c4-4 9-1 14-6" fill="none" stroke="#d2623a" stroke-width="1"/></svg>
<div class="t" style="left:94.34px;top:359.64px;font-size:12px;line-height:12px;color:#1b1b1b;transform:scaleX(0.9462);transform-origin:0.96px 0;">Petzval Lens</div>
<svg style="left:60px;top:379.8px;" width="6" height="9" viewBox="0 0 6 9"><path d="M1 1l3.5 3.5L1 8" fill="none" stroke="#6a6a6a" stroke-width="1.1"/></svg>
<svg style="left:74px;top:376px;" width="17" height="17" viewBox="0 0 17 17"><rect x="6" y="1" width="4.2" height="4.2" fill="#e8a830"/><rect x="0" y="5" width="4.2" height="4.2" fill="#f0a020"/><rect x="6" y="6" width="4.2" height="4.2" fill="#e89828"/><rect x="12" y="5" width="4.2" height="4.2" fill="#f09a20"/><rect x="0" y="10" width="4.2" height="4.2" fill="#e08a28"/><rect x="12" y="10" width="4.2" height="4.2" fill="#d08028"/><rect x="6" y="12" width="4.2" height="4.2" fill="#c87a28"/></svg>
<div class="t" style="left:94.34px;top:377.64px;font-size:12px;line-height:12px;color:#1b1b1b;transform:scaleX(1.0089);transform-origin:0.96px 0;">Materials</div>
<svg style="left:60px;top:397.8px;" width="6" height="9" viewBox="0 0 6 9"><path d="M1 1l3.5 3.5L1 8" fill="none" stroke="#6a6a6a" stroke-width="1.1"/></svg>
<svg style="left:73px;top:394px;" width="17" height="16" viewBox="0 0 17 16"><path d="M0 1h5M0 15h5" stroke="#8aa" stroke-width="0.8"/><ellipse cx="7" cy="8" rx="2.3" ry="7" fill="#b0d4f2" stroke="#3a7fc0" stroke-width="1"/><path d="M9 2l7 6-7 6" fill="none" stroke="#7ab" stroke-width="0.9"/></svg>
<div class="t" style="left:94.70px;top:395.64px;font-size:12px;line-height:12px;color:#1b1b1b;transform:scaleX(0.9966);transform-origin:0.60px 0;">Geometrical Optics</div>
<svg style="left:73px;top:412px;" width="16" height="16" viewBox="0 0 16 16"><path d="M8 1L1 15h14z" fill="none" stroke="#888" stroke-width="1.1"/><path d="M4.5 8h7M3 11.5h10M8 1l-3 14M8 1l3 14M4.5 8l4 7M11.5 8l-4 7" stroke="#999" stroke-width="0.7"/></svg>
<div class="t" style="left:94.34px;top:413.64px;font-size:12px;line-height:12px;color:#1b1b1b;transform:scaleX(0.9773);transform-origin:0.96px 0;">Mesh 1</div>
<svg style="left:40px;top:433.8px;" width="6" height="9" viewBox="0 0 6 9"><path d="M1 1l3.5 3.5L1 8" fill="none" stroke="#6a6a6a" stroke-width="1.1"/></svg>
<svg style="left:53px;top:433px;" width="18" height="10" viewBox="0 0 18 10"><g transform="translate(0.4 0.6) scale(0.55)"><path d="M0 6.3c0.5-3 2-5 2.7-4.9L9.6 7.6" fill="none" stroke="#2a9ab8" stroke-width="1.9"/><circle cx="14.1" cy="8.5" r="4" fill="none" stroke="#2a9ab8" stroke-width="1.9"/><path d="M18.1 8.3h3" stroke="#2a9ab8" stroke-width="1.6"/><circle cx="25.2" cy="8.3" r="4" fill="none" stroke="#2a9ab8" stroke-width="1.9"/><path d="M29.2 6.8L20.2 0.1c-1.2-0.4-2.2 0.6-2.2 3" fill="none" stroke="#2a9ab8" stroke-width="1.9"/></g></svg>
<div class="t" style="left:74.96px;top:431.64px;font-size:12px;line-height:12px;color:#1b1b1b;transform:scaleX(0.9520);transform-origin:0.54px 0;">Study 1</div>
<svg style="left:39px;top:452.8px;" width="9" height="6" viewBox="0 0 9 6"><path d="M1 1l3.5 3.5L8 1" fill="none" stroke="#222" stroke-width="1.3"/></svg>
<svg style="left:53px;top:451px;" width="18" height="10" viewBox="0 0 18 10"><g transform="translate(0.4 0.6) scale(0.55)"><path d="M0 6.3c0.5-3 2-5 2.7-4.9L9.6 7.6" fill="none" stroke="#2a9ab8" stroke-width="1.9"/><circle cx="14.1" cy="8.5" r="4" fill="none" stroke="#2a9ab8" stroke-width="1.9"/><path d="M18.1 8.3h3" stroke="#2a9ab8" stroke-width="1.6"/><circle cx="25.2" cy="8.3" r="4" fill="none" stroke="#2a9ab8" stroke-width="1.9"/><path d="M29.2 6.8L20.2 0.1c-1.2-0.4-2.2 0.6-2.2 3" fill="none" stroke="#2a9ab8" stroke-width="1.9"/></g></svg>
<div class="t" style="left:74.96px;top:449.64px;font-size:12px;line-height:12px;color:#1b1b1b;transform:scaleX(0.9672);transform-origin:0.54px 0;">Study 2</div>
<svg style="left:72px;top:466px;" width="18" height="17" viewBox="0 0 18 17"><text x="0" y="15" font-size="11" fill="#2a8ab0" font-family="Liberation Sans">P</text><text x="7" y="17" font-size="7" fill="#2a8ab0" font-family="Liberation Sans">i</text><circle cx="12" cy="5" r="3" fill="none" stroke="#2a8ab0" stroke-width="1.1"/><circle cx="12" cy="5" r="1" fill="#2a8ab0"/><path d="M12 5l5-5" stroke="#777" stroke-width="0.9"/></svg>
<div class="t" style="left:94.34px;top:467.64px;font-size:12px;line-height:12px;color:#1b1b1b;transform:scaleX(1.0090);transform-origin:0.96px 0;">Parameter Optimization</div>
<svg style="left:73px;top:484px;" width="18" height="18" viewBox="0 0 18 18"><path d="M1.3 1.5L1.3 14.4L15.5 14.4" fill="none" stroke="#777" stroke-width="1"/><path d="M-0.2 3.0L1.3 1.0L2.8 3.0M14.0 12.9L15.8 14.4L14.0 15.9" fill="none" stroke="#777" stroke-width="0.9"/><path d="M3.5 6.0C6.0 2.0 7.0 0.0 8.5 0.0S12.0 3.0 15.5 6.0" fill="none" stroke="#2a8ab8" stroke-width="1"/><circle cx="8" cy="11" r="1.9" fill="#f0a030"/><path d="M8.0 8.0L8.0 5.5M5.5 8.5L3.8 6.8M10.5 8.5L12.2 6.8M5.0 11.0L2.8 11.0M11.0 11.0L14.0 11.0M11.0 9.5L14.0 8.5" stroke="#f0a030" stroke-width="0.9"/></svg>
<div class="t" style="left:100.66px;top:485.64px;font-size:12px;line-height:12px;color:#1b1b1b;transform:scaleX(0.9376);transform-origin:0.54px 0;">Step 1: Ray Tracing</div>
<svg style="left:60px;top:505.79999999999995px;" width="6" height="9" viewBox="0 0 6 9"><path d="M1 1l3.5 3.5L1 8" fill="none" stroke="#6a6a6a" stroke-width="1.1"/></svg>
<svg style="left:73px;top:502px;" width="17" height="17" viewBox="0 0 17 17"><path d="M1 2v15M6 5v12M11 8v9" stroke="#808080" stroke-width="1"/><rect x="0" y="0" width="4" height="3" fill="#2a8ab0"/><rect x="4" y="3" width="4" height="3" fill="#2a8ab0"/><rect x="8" y="6" width="4" height="3" fill="#2a8ab0"/><rect x="12" y="9" width="4" height="3" fill="#2a8ab0"/></svg>
<div class="t" style="left:94.76px;top:503.64px;font-size:12px;line-height:12px;color:#1b1b1b;transform:scaleX(0.9995);transform-origin:0.54px 0;">Solver Configurations</div>
<svg style="left:60px;top:523.8px;" width="6" height="9" viewBox="0 0 6 9"><path d="M1 1l3.5 3.5L1 8" fill="none" stroke="#6a6a6a" stroke-width="1.1"/></svg>
<svg style="left:73px;top:520px;" width="18" height="18" viewBox="0 0 18 18"><path d="M3.5 0.5L11.8 0.5L11.8 7.5L3.5 7.5z" fill="#8ab8ea" stroke="#2a6db0" stroke-width="0.9"/><path d="M2.5 7.8L12.5 7.8L10.5 10.3L0.0 10.3z" fill="#2a6db0"/><path d="M12.5 5.5L15.0 5.5L15.0 11.5L2.3 11.5L2.3 13.0M7.8 11.5L7.8 13.0M12.5 11.5L12.5 13.0" fill="none" stroke="#777" stroke-width="0.9"/><rect x="1" y="13" width="2.6" height="2.6" fill="#2a8ab8"/><rect x="6.5" y="13" width="2.6" height="2.6" fill="#4aa04a"/><rect x="11.299999999999997" y="13" width="2.6" height="2.6" fill="#f0a030"/></svg>
<div class="t" style="left:95.12px;top:521.64px;font-size:12px;line-height:12px;color:#1b1b1b;transform:scaleX(0.9972);transform-origin:0.18px 0;">Job Configurations</div>
<svg style="left:40px;top:541.8px;" width="6" height="9" viewBox="0 0 6 9"><path d="M1 1l3.5 3.5L1 8" fill="none" stroke="#6a6a6a" stroke-width="1.1"/></svg>
<svg style="left:53px;top:538px;" width="16" height="16" viewBox="0 0 16 16"><rect x="0.5" y="3.5" width="11" height="11" fill="#eee" stroke="#888" stroke-width="0.9"/><rect x="2.5" y="2" width="11" height="11" fill="#eee" stroke="#888" stroke-width="0.9"/><rect x="4.5" y="4.5" width="11" height="11" fill="#e6e6e6" stroke="#777" stroke-width="0.9"/><rect x="7" y="7" width="6" height="6" fill="#c04ab0"/></svg>
<div class="t" style="left:74.54px;top:539.64px;font-size:12px;line-height:12px;color:#1b1b1b;transform:scaleX(0.9524);transform-origin:0.96px 0;">Results</div>
<div style="left:284px;top:177px;width:576px;height:869px;background:#fafbfe;border-radius:4px 4px 0 0"></div>
<div class="t" style="left:290.60px;top:188.57px;font-size:20px;line-height:20px;color:#34619c;transform:scaleX(1.0325);transform-origin:0.90px 0;">Settings</div>
<svg style="left:807px;top:193px;" width="10" height="6" viewBox="0 0 10 6"><path d="M1 1l4 4 4-4" fill="none" stroke="#9a9a9a" stroke-width="1.1"/></svg>
<svg style="left:825px;top:191px;" width="10" height="10" viewBox="0 0 10 10"><rect x="0.5" y="0.5" width="9" height="9" fill="none" stroke="#9a9a9a" stroke-width="1"/><rect x="0.5" y="0.5" width="9" height="2" fill="#9a9a9a"/></svg>
<svg style="left:843px;top:190px;" width="8" height="11" viewBox="0 0 8 11"><rect x="2" y="0.5" width="4" height="6" fill="none" stroke="#9a9a9a" stroke-width="1"/><rect x="4.5" y="0.5" width="1.5" height="6" fill="#9a9a9a"/><path d="M0.5 7h7M4 7v4" stroke="#9a9a9a" stroke-width="1"/></svg>
<div class="t" style="left:289.84px;top:215.54px;font-size:12px;line-height:12px;color:#3a6aa6;transform:scaleX(1.0991);transform-origin:0.96px 0;">Parameter Optimization</div>
<div style="left:295px;top:238.5px;width:9px;height:2.5px;background:#2098b4"></div>
<div style="left:295px;top:242.5px;width:9px;height:2.5px;background:#2098b4"></div>
<div class="t" style="left:311.10px;top:235.54px;font-size:12px;line-height:12px;color:#1b1b1b;transform:scaleX(1.0298);transform-origin:0.60px 0;">Compute</div>
<svg style="left:368px;top:235px;" width="17" height="13" viewBox="0 0 17 13"><path d="M4 0.5v12" stroke="#888" stroke-width="1.1"/><path d="M1 6.5h11" stroke="#888" stroke-width="1.1"/><path d="M8 6.5h5" stroke="#2098b4" stroke-width="1.6"/><path d="M11.5 3l4 3.5-4 3.5z" fill="#2098b4"/></svg>
<div class="t" style="left:387.90px;top:235.54px;font-size:12px;line-height:12px;color:#1b1b1b;transform:scaleX(1.0337);transform-origin:0.60px 0;">Continue</div>
<svg style="left:445px;top:234px;" width="15" height="15" viewBox="0 0 15 15"><path d="M12 8a5 5 0 1 1-2-4.5" fill="none" stroke="#2098b4" stroke-width="1.7"/><path d="M8 1h6v6z" fill="#2098b4"/></svg>
<div class="t" style="left:463.50px;top:235.54px;font-size:12px;line-height:12px;color:#1b1b1b;transform:scaleX(1.0029);transform-origin:0.90px 0;">Update Solution</div>
<div class="t" style="left:289.24px;top:268.74px;font-size:12px;line-height:12px;color:#1b1b1b;transform:scaleX(0.9556);transform-origin:0.96px 0;">Label:</div>
<div style="left:330px;top:266px;width:497px;height:18px;background:#fff;border:1px solid #d0d0d0;box-sizing:border-box"></div>
<div class="t" style="left:332.04px;top:268.74px;font-size:12px;line-height:12px;color:#1b1b1b;transform:scaleX(1.0066);transform-origin:0.96px 0;">Parameter Optimization</div>
<div style="left:835px;top:264px;width:20px;height:21px;background:#ececee;border:1px solid #d2d2d2;border-radius:2px;box-sizing:border-box"></div>
<svg style="left:838px;top:267px;" width="15" height="15" viewBox="0 0 15 15"><rect x="0.5" y="0.5" width="13" height="12" fill="#fff" stroke="#777" stroke-width="1"/><path d="M0.5 3.5h13M4 6.5h8M4 9h8" stroke="#777" stroke-width="1"/><path d="M1 13l3-3M1 10.5V13h2.5" fill="none" stroke="#2a9a6a" stroke-width="1.2"/></svg>
<div style="left:284px;top:295px;width:576px;height:1px;background:#e3e4e8"></div>
<svg style="left:292px;top:305px;" width="7" height="9" viewBox="0 0 7 9"><path d="M1 1l4 3.5L1 8" fill="none" stroke="#222" stroke-width="1.4"/></svg>
<div class="t" style="left:309.42px;top:303.06px;font-size:12.8px;line-height:12.8px;color:#2d5a96;transform:scaleX(1.0798);transform-origin:0.58px 0;">Optimization Solver</div>
<div style="left:284px;top:325px;width:576px;height:1px;background:#e3e4e8"></div>
<svg style="left:292px;top:334.5px;" width="7" height="9" viewBox="0 0 7 9"><path d="M1 1l4 3.5L1 8" fill="none" stroke="#222" stroke-width="1.4"/></svg>
<div class="t" style="left:309.42px;top:332.26px;font-size:12.8px;line-height:12.8px;color:#2d5a96;transform:scaleX(1.0570);transform-origin:0.58px 0;">Solver Settings</div>
<div style="left:284px;top:353px;width:576px;height:1px;background:#e3e4e8"></div>
<svg style="left:291px;top:364.5px;" width="9" height="6" viewBox="0 0 9 6"><path d="M1 1l3.5 3.5L8 1" fill="none" stroke="#2d5a96" stroke-width="1.3"/></svg>
<div class="t" style="left:309.42px;top:361.16px;font-size:12.8px;line-height:12.8px;color:#2d5a96;transform:scaleX(1.0732);transform-origin:0.58px 0;">Objective Function</div>
<svg style="left:783px;top:360px;" width="13" height="13" viewBox="0 0 13 13"><path d="M6.5 0v13M0 6.5h13" stroke="#2a7fc0" stroke-width="1.3"/></svg>
<svg style="left:802px;top:365px;" width="8" height="5" viewBox="0 0 8 5"><path d="M0 0h8l-4 5z" fill="#111"/></svg>
<svg style="left:821px;top:360px;" width="17" height="14" viewBox="0 0 17 14"><rect x="1" y="3.5" width="14" height="7" fill="none" stroke="#2a7fc0" stroke-width="1.2"/><rect x="3" y="5.5" width="5" height="3" fill="#2a7fc0"/><path d="M10 0.5v13M8.5 0.5h3M8.5 13.5h3" stroke="#555" stroke-width="1"/></svg>
<svg style="left:843px;top:365px;" width="8" height="5" viewBox="0 0 8 5"><path d="M0 0h8l-4 5z" fill="#111"/></svg>
<svg style="left:290px;top:390px;" width="15" height="15" viewBox="0 0 15 15"><circle cx="7.5" cy="7.5" r="6.6" fill="none" stroke="#3a86cf" stroke-width="1.1"/><text x="6" y="12" font-size="10" font-style="italic" fill="#3a86cf" font-family="Liberation Serif">i</text></svg>
<div class="t" style="left:316.06px;top:391.34px;font-size:12px;line-height:12px;color:#1b1b1b;transform:scaleX(0.9946);transform-origin:0.24px 0;">The objective is only evaluated at the final time.</div>
<div style="left:289px;top:411px;width:565px;height:140px;background:#fff;border:1px solid #cfcfcf;box-sizing:border-box"></div>
<div style="left:290px;top:412px;width:563px;height:26px;background:#f0f0f0"></div>
<svg style="left:294px;top:415px;" width="10" height="7" viewBox="0 0 10 7"><path d="M0 0l4 3.5L0 7zM5 0l4 3.5L5 7z" fill="#111"/></svg>
<div class="t" style="left:307.34px;top:421.84px;font-size:12px;line-height:12px;color:#1b1b1b;transform:scaleX(0.9591);transform-origin:0.96px 0;">Expression</div>
<div class="t" style="left:501.24px;top:421.84px;font-size:12px;line-height:12px;color:#1b1b1b;transform:scaleX(1.0219);transform-origin:0.96px 0;">Description</div>
<div class="t" style="left:650.84px;top:421.84px;font-size:12px;line-height:12px;color:#1b1b1b;transform:scaleX(0.9882);transform-origin:0.96px 0;">Evaluate for</div>
<div style="left:496px;top:412px;width:1px;height:129px;background:#cfcfcf"></div>
<div style="left:646px;top:412px;width:1px;height:129px;background:#cfcfcf"></div>
<div style="left:289px;top:463px;width:565px;height:1px;background:#c4c4c4"></div>
<div style="left:289px;top:489px;width:565px;height:1px;background:#c4c4c4"></div>
<div style="left:289px;top:515px;width:565px;height:1px;background:#c4c4c4"></div>
<div style="left:289px;top:541px;width:565px;height:1px;background:#c4c4c4"></div>
<div class="t" style="left:293.32px;top:444.64px;font-size:12px;line-height:12px;color:#1b1b1b;transform:scaleX(1.0158);transform-origin:0.48px 0;">comp1.gop.relg1.rrms^2</div>
<div style="left:650px;top:440px;width:201px;height:21px;background:linear-gradient(#f2f1f4,#ebebed 55%,#e6e6e8);border:1px solid #d2d2d4;border-radius:2px;box-sizing:border-box"></div>
<div class="t" style="left:661.04px;top:444.64px;font-size:12px;line-height:12px;color:#1b1b1b;transform:scaleX(0.9560);transform-origin:0.96px 0;">Ray Tracing</div>
<svg style="left:837px;top:448.8px;" width="8" height="5" viewBox="0 0 8 5"><path d="M0 0h8l-4 5z" fill="#111"/></svg>
<div class="t" style="left:293.32px;top:470.64px;font-size:12px;line-height:12px;color:#1b1b1b;transform:scaleX(1.0158);transform-origin:0.48px 0;">comp1.gop.relg2.rrms^2</div>
<div style="left:650px;top:466px;width:201px;height:21px;background:linear-gradient(#f2f1f4,#ebebed 55%,#e6e6e8);border:1px solid #d2d2d4;border-radius:2px;box-sizing:border-box"></div>
<div class="t" style="left:661.04px;top:470.64px;font-size:12px;line-height:12px;color:#1b1b1b;transform:scaleX(0.9560);transform-origin:0.96px 0;">Ray Tracing</div>
<svg style="left:837px;top:474.8px;" width="8" height="5" viewBox="0 0 8 5"><path d="M0 0h8l-4 5z" fill="#111"/></svg>
<div class="t" style="left:293.32px;top:496.64px;font-size:12px;line-height:12px;color:#1b1b1b;transform:scaleX(1.0158);transform-origin:0.48px 0;">comp1.gop.relg3.rrms^2</div>
<div style="left:650px;top:492px;width:201px;height:21px;background:linear-gradient(#f2f1f4,#ebebed 55%,#e6e6e8);border:1px solid #d2d2d4;border-radius:2px;box-sizing:border-box"></div>
<div class="t" style="left:661.04px;top:496.64px;font-size:12px;line-height:12px;color:#1b1b1b;transform:scaleX(0.9560);transform-origin:0.96px 0;">Ray Tracing</div>
<svg style="left:837px;top:500.8px;" width="8" height="5" viewBox="0 0 8 5"><path d="M0 0h8l-4 5z" fill="#111"/></svg>
<div style="left:650px;top:518px;width:201px;height:21px;background:linear-gradient(#f2f1f4,#ebebed 55%,#e6e6e8);border:1px solid #d2d2d4;border-radius:2px;box-sizing:border-box"></div>
<div class="t" style="left:661.04px;top:522.64px;font-size:12px;line-height:12px;color:#1b1b1b;transform:scaleX(0.9560);transform-origin:0.96px 0;">Ray Tracing</div>
<svg style="left:837px;top:526.8px;" width="8" height="5" viewBox="0 0 8 5"><path d="M0 0h8l-4 5z" fill="#111"/></svg>
<div style="left:289px;top:550px;width:565px;height:3px;background:#d4d4d6"></div>
<svg style="left:295px;top:560px;" width="9" height="14" viewBox="0 0 9 14"><path d="M4.5 13V3" stroke="#a0a0a0" stroke-width="1.2"/><path d="M4.5 0.5l-3.5 4h7z" fill="#a0a0a0"/></svg>
<svg style="left:319px;top:560px;" width="9" height="14" viewBox="0 0 9 14"><path d="M4.5 1v10" stroke="#a0a0a0" stroke-width="1.2"/><path d="M4.5 13.5l-3.5-4h7z" fill="#a0a0a0"/></svg>
<svg style="left:338px;top:560px;" width="16" height="14" viewBox="0 0 16 14"><path d="M1 1.5h1.5M4 1.5h9" stroke="#a0a0a0" stroke-width="1.1"/><path d="M1 5.0h1.5M4 5.0h9" stroke="#a0a0a0" stroke-width="1.1"/><path d="M1 8.5h1.5M4 8.5h9" stroke="#a0a0a0" stroke-width="1.1"/><path d="M1 12.0h1.5M4 12.0h9" stroke="#a0a0a0" stroke-width="1.1"/><path d="M10 9l5 5M15 9l-5 5" stroke="#a0a0a0" stroke-width="1.1"/></svg>
<svg style="left:360px;top:560px;" width="17" height="14" viewBox="0 0 17 14"><rect x="1" y="3.5" width="14" height="7" fill="none" stroke="#a0a0a0" stroke-width="1.1"/><rect x="3" y="5.5" width="5" height="3" fill="#a0a0a0"/><path d="M10 0.5v13M8.5 0.5h3M8.5 13.5h3" stroke="#a0a0a0" stroke-width="1"/></svg>
<svg style="left:382px;top:565px;" width="8" height="5" viewBox="0 0 8 5"><path d="M0 0h8l-4 5z" fill="#444"/></svg>
<div class="t" style="left:288.96px;top:584.84px;font-size:12px;line-height:12px;color:#1b1b1b;transform:scaleX(0.9259);transform-origin:0.24px 0;">Type:</div>
<div style="left:402px;top:580px;width:453px;height:21px;background:linear-gradient(#f2f1f4,#ebebed 55%,#e6e6e8);border:1px solid #d2d2d4;border-radius:2px;box-sizing:border-box"></div>
<div class="t" style="left:414.24px;top:584.84px;font-size:12px;line-height:12px;color:#1b1b1b;transform:scaleX(1.0649);transform-origin:0.96px 0;">Minimization</div>
<svg style="left:840px;top:589px;" width="8" height="5" viewBox="0 0 8 5"><path d="M0 0h8l-4 5z" fill="#111"/></svg>
<div class="t" style="left:288.24px;top:611.84px;font-size:12px;line-height:12px;color:#1b1b1b;transform:scaleX(1.0266);transform-origin:0.96px 0;">Multiple objectives:</div>
<div style="left:402px;top:607px;width:453px;height:21px;background:linear-gradient(#f2f1f4,#ebebed 55%,#e6e6e8);border:1px solid #d2d2d4;border-radius:2px;box-sizing:border-box"></div>
<div class="t" style="left:414.66px;top:611.84px;font-size:12px;line-height:12px;color:#1b1b1b;transform:scaleX(1.0002);transform-origin:0.54px 0;">Sum of objectives</div>
<svg style="left:840px;top:616px;" width="8" height="5" viewBox="0 0 8 5"><path d="M0 0h8l-4 5z" fill="#111"/></svg>
<div class="t" style="left:288.66px;top:638.84px;font-size:12px;line-height:12px;color:#1b1b1b;transform:scaleX(1.0195);transform-origin:0.54px 0;">Solution:</div>
<div style="left:402px;top:634px;width:453px;height:21px;background:linear-gradient(#f2f1f4,#ebebed 55%,#e6e6e8);border:1px solid #d2d2d4;border-radius:2px;box-sizing:border-box"></div>
<div class="t" style="left:415.20px;top:638.84px;font-size:12px;line-height:12px;color:#1b1b1b;transform:scaleX(1.0422);transform-origin:0.00px 0;">Auto</div>
<svg style="left:840px;top:643px;" width="8" height="5" viewBox="0 0 8 5"><path d="M0 0h8l-4 5z" fill="#111"/></svg>
<div style="left:284px;top:666px;width:576px;height:1px;background:#e3e4e8"></div>
<svg style="left:291px;top:677.5px;" width="9" height="6" viewBox="0 0 9 6"><path d="M1 1l3.5 3.5L8 1" fill="none" stroke="#2d5a96" stroke-width="1.3"/></svg>
<div class="t" style="left:309.36px;top:674.46px;font-size:12.8px;line-height:12.8px;color:#2d5a96;transform:scaleX(1.0693);transform-origin:0.64px 0;">Control Parameters</div>
<div style="left:289px;top:702px;width:565px;height:223px;background:#fff;border:1px solid #cfcfcf;box-sizing:border-box"></div>
<div style="left:290px;top:703px;width:549px;height:26px;background:#f0f0f0"></div>
<div style="left:840px;top:703px;width:13px;height:26px;background:#f0f0f0"></div>
<svg style="left:294px;top:707px;" width="10" height="7" viewBox="0 0 10 7"><path d="M0 0l4 3.5L0 7zM5 0l4 3.5L5 7z" fill="#111"/></svg>
<div class="t" style="left:307.34px;top:712.54px;font-size:12px;line-height:12px;color:#1b1b1b;transform:scaleX(0.9781);transform-origin:0.96px 0;">Parameter</div>
<div class="t" style="left:513.12px;top:712.54px;font-size:12px;line-height:12px;color:#1b1b1b;transform:scaleX(1.0233);transform-origin:1.08px 0;">Initial value</div>
<div class="t" style="left:591.04px;top:712.54px;font-size:12px;line-height:12px;color:#1b1b1b;transform:scaleX(1.0298);transform-origin:0.96px 0;">Lower bound</div>
<div class="t" style="left:682.30px;top:712.54px;font-size:12px;line-height:12px;color:#1b1b1b;transform:scaleX(1.0245);transform-origin:0.90px 0;">Upper bound</div>
<div class="t" style="left:784.60px;top:712.54px;font-size:12px;line-height:12px;color:#1b1b1b;transform:scaleX(1.0539);transform-origin:0.90px 0;">Unit</div>
<div style="left:508px;top:703px;width:1px;height:207px;background:#cfcfcf"></div>
<div style="left:677px;top:703px;width:1px;height:207px;background:#cfcfcf"></div>
<div style="left:779px;top:703px;width:1px;height:207px;background:#cfcfcf"></div>
<div style="left:839px;top:703px;width:1px;height:207px;background:#cfcfcf"></div>
<div style="left:587px;top:729px;width:1px;height:181px;background:#cfcfcf"></div>
<div style="left:852px;top:703px;width:2px;height:26px;background:#c8c8c8"></div>
<div style="left:289px;top:754px;width:565px;height:1px;background:#c4c4c4"></div>
<div style="left:292px;top:731px;width:214px;height:21px;background:linear-gradient(#f2f1f4,#ebebed 55%,#e6e6e8);border:1px solid #d2d2d4;border-radius:2px;box-sizing:border-box"></div>
<div class="t" style="left:305.02px;top:735.54px;font-size:12px;line-height:12px;color:#1b1b1b;transform:scaleX(0.9551);transform-origin:0.48px 0;">dR1_1 (L1, surface 1 adjustment)</div>
<svg style="left:492px;top:739.7px;" width="8" height="5" viewBox="0 0 8 5"><path d="M0 0h8l-4 5z" fill="#111"/></svg>
<div class="t" style="left:511.58px;top:735.54px;font-size:12px;line-height:12px;color:#1b1b1b;transform:scaleX(1.1028);transform-origin:0.42px 0;">0[mm]</div>
<div class="t" style="left:589.92px;top:735.54px;font-size:12px;line-height:12px;color:#1b1b1b;transform:scaleX(1.0768);transform-origin:0.48px 0;">-20[mm]</div>
<div class="t" style="left:680.40px;top:735.54px;font-size:12px;line-height:12px;color:#1b1b1b;transform:scaleX(1.0757);transform-origin:0.60px 0;">20[mm]</div>
<div class="t" style="left:782.22px;top:735.54px;font-size:12px;line-height:12px;color:#1b1b1b;transform:scaleX(1.2766);transform-origin:0.78px 0;">m</div>
<div style="left:289px;top:780px;width:565px;height:1px;background:#c4c4c4"></div>
<div style="left:292px;top:757px;width:214px;height:21px;background:linear-gradient(#f2f1f4,#ebebed 55%,#e6e6e8);border:1px solid #d2d2d4;border-radius:2px;box-sizing:border-box"></div>
<div class="t" style="left:305.02px;top:761.54px;font-size:12px;line-height:12px;color:#1b1b1b;transform:scaleX(0.9551);transform-origin:0.48px 0;">dR2_1 (L1, surface 2 adjustment)</div>
<svg style="left:492px;top:765.7px;" width="8" height="5" viewBox="0 0 8 5"><path d="M0 0h8l-4 5z" fill="#111"/></svg>
<div class="t" style="left:511.58px;top:761.54px;font-size:12px;line-height:12px;color:#1b1b1b;transform:scaleX(1.1028);transform-origin:0.42px 0;">0[mm]</div>
<div class="t" style="left:589.92px;top:761.54px;font-size:12px;line-height:12px;color:#1b1b1b;transform:scaleX(1.0768);transform-origin:0.48px 0;">-20[mm]</div>
<div class="t" style="left:680.40px;top:761.54px;font-size:12px;line-height:12px;color:#1b1b1b;transform:scaleX(1.0757);transform-origin:0.60px 0;">20[mm]</div>
<div class="t" style="left:782.22px;top:761.54px;font-size:12px;line-height:12px;color:#1b1b1b;transform:scaleX(1.2766);transform-origin:0.78px 0;">m</div>
<div style="left:289px;top:806px;width:565px;height:1px;background:#c4c4c4"></div>
<div style="left:292px;top:783px;width:214px;height:21px;background:linear-gradient(#f2f1f4,#ebebed 55%,#e6e6e8);border:1px solid #d2d2d4;border-radius:2px;box-sizing:border-box"></div>
<div class="t" style="left:305.02px;top:787.54px;font-size:12px;line-height:12px;color:#1b1b1b;transform:scaleX(0.9551);transform-origin:0.48px 0;">dR2_2 (L2, surface 2 adjustment)</div>
<svg style="left:492px;top:791.7px;" width="8" height="5" viewBox="0 0 8 5"><path d="M0 0h8l-4 5z" fill="#111"/></svg>
<div class="t" style="left:511.58px;top:787.54px;font-size:12px;line-height:12px;color:#1b1b1b;transform:scaleX(1.1028);transform-origin:0.42px 0;">0[mm]</div>
<div class="t" style="left:589.92px;top:787.54px;font-size:12px;line-height:12px;color:#1b1b1b;transform:scaleX(1.0531);transform-origin:0.48px 0;">-500[mm]</div>
<div class="t" style="left:680.52px;top:787.54px;font-size:12px;line-height:12px;color:#1b1b1b;transform:scaleX(1.0472);transform-origin:0.48px 0;">500[mm]</div>
<div class="t" style="left:782.22px;top:787.54px;font-size:12px;line-height:12px;color:#1b1b1b;transform:scaleX(1.2766);transform-origin:0.78px 0;">m</div>
<div style="left:289px;top:832px;width:565px;height:1px;background:#c4c4c4"></div>
<div style="left:292px;top:809px;width:214px;height:21px;background:linear-gradient(#f2f1f4,#ebebed 55%,#e6e6e8);border:1px solid #d2d2d4;border-radius:2px;box-sizing:border-box"></div>
<div class="t" style="left:305.02px;top:813.54px;font-size:12px;line-height:12px;color:#1b1b1b;transform:scaleX(0.9551);transform-origin:0.48px 0;">dR1_4 (L3, surface 1 adjustment)</div>
<svg style="left:492px;top:817.7px;" width="8" height="5" viewBox="0 0 8 5"><path d="M0 0h8l-4 5z" fill="#111"/></svg>
<div class="t" style="left:511.58px;top:813.54px;font-size:12px;line-height:12px;color:#1b1b1b;transform:scaleX(1.1028);transform-origin:0.42px 0;">0[mm]</div>
<div class="t" style="left:589.92px;top:813.54px;font-size:12px;line-height:12px;color:#1b1b1b;transform:scaleX(1.0768);transform-origin:0.48px 0;">-10[mm]</div>
<div class="t" style="left:680.10px;top:813.54px;font-size:12px;line-height:12px;color:#1b1b1b;transform:scaleX(1.0841);transform-origin:0.90px 0;">10[mm]</div>
<div class="t" style="left:782.22px;top:813.54px;font-size:12px;line-height:12px;color:#1b1b1b;transform:scaleX(1.2766);transform-origin:0.78px 0;">m</div>
<div style="left:289px;top:858px;width:565px;height:1px;background:#c4c4c4"></div>
<div style="left:292px;top:835px;width:214px;height:21px;background:linear-gradient(#f2f1f4,#ebebed 55%,#e6e6e8);border:1px solid #d2d2d4;border-radius:2px;box-sizing:border-box"></div>
<div class="t" style="left:305.02px;top:839.54px;font-size:12px;line-height:12px;color:#1b1b1b;transform:scaleX(0.9551);transform-origin:0.48px 0;">dR2_4 (L3, surface 2 adjustment)</div>
<svg style="left:492px;top:843.7px;" width="8" height="5" viewBox="0 0 8 5"><path d="M0 0h8l-4 5z" fill="#111"/></svg>
<div class="t" style="left:511.58px;top:839.54px;font-size:12px;line-height:12px;color:#1b1b1b;transform:scaleX(1.1028);transform-origin:0.42px 0;">0[mm]</div>
<div class="t" style="left:589.92px;top:839.54px;font-size:12px;line-height:12px;color:#1b1b1b;transform:scaleX(1.0768);transform-origin:0.48px 0;">-10[mm]</div>
<div class="t" style="left:680.10px;top:839.54px;font-size:12px;line-height:12px;color:#1b1b1b;transform:scaleX(1.0841);transform-origin:0.90px 0;">10[mm]</div>
<div class="t" style="left:782.22px;top:839.54px;font-size:12px;line-height:12px;color:#1b1b1b;transform:scaleX(1.2766);transform-origin:0.78px 0;">m</div>
<div style="left:289px;top:884px;width:565px;height:1px;background:#c4c4c4"></div>
<div style="left:292px;top:861px;width:214px;height:21px;background:linear-gradient(#f2f1f4,#ebebed 55%,#e6e6e8);border:1px solid #d2d2d4;border-radius:2px;box-sizing:border-box"></div>
<div class="t" style="left:305.02px;top:865.54px;font-size:12px;line-height:12px;color:#1b1b1b;transform:scaleX(0.9551);transform-origin:0.48px 0;">dR2_5 (L4, surface 2 adjustment)</div>
<svg style="left:492px;top:869.7px;" width="8" height="5" viewBox="0 0 8 5"><path d="M0 0h8l-4 5z" fill="#111"/></svg>
<div class="t" style="left:511.58px;top:865.54px;font-size:12px;line-height:12px;color:#1b1b1b;transform:scaleX(1.1028);transform-origin:0.42px 0;">0[mm]</div>
<div class="t" style="left:589.92px;top:865.54px;font-size:12px;line-height:12px;color:#1b1b1b;transform:scaleX(1.0531);transform-origin:0.48px 0;">-500[mm]</div>
<div class="t" style="left:680.52px;top:865.54px;font-size:12px;line-height:12px;color:#1b1b1b;transform:scaleX(1.0472);transform-origin:0.48px 0;">500[mm]</div>
<div class="t" style="left:782.22px;top:865.54px;font-size:12px;line-height:12px;color:#1b1b1b;transform:scaleX(1.2766);transform-origin:0.78px 0;">m</div>
<div style="left:289px;top:910px;width:565px;height:1px;background:#c4c4c4"></div>
<div style="left:292px;top:887px;width:214px;height:21px;background:linear-gradient(#f2f1f4,#ebebed 55%,#e6e6e8);border:1px solid #d2d2d4;border-radius:2px;box-sizing:border-box"></div>
<div class="t" style="left:305.02px;top:891.54px;font-size:12px;line-height:12px;color:#1b1b1b;transform:scaleX(0.9551);transform-origin:0.48px 0;">dR1_6 (L5, surface 1 adjustment)</div>
<svg style="left:492px;top:895.7px;" width="8" height="5" viewBox="0 0 8 5"><path d="M0 0h8l-4 5z" fill="#111"/></svg>
<div class="t" style="left:511.58px;top:891.54px;font-size:12px;line-height:12px;color:#1b1b1b;transform:scaleX(1.1028);transform-origin:0.42px 0;">0[mm]</div>
<div class="t" style="left:589.92px;top:891.54px;font-size:12px;line-height:12px;color:#1b1b1b;transform:scaleX(1.0768);transform-origin:0.48px 0;">-10[mm]</div>
<div class="t" style="left:680.10px;top:891.54px;font-size:12px;line-height:12px;color:#1b1b1b;transform:scaleX(1.0841);transform-origin:0.90px 0;">10[mm]</div>
<div class="t" style="left:782.22px;top:891.54px;font-size:12px;line-height:12px;color:#1b1b1b;transform:scaleX(1.2766);transform-origin:0.78px 0;">m</div>
<div style="left:289px;top:922px;width:565px;height:3px;background:#d4d4d6"></div>
<svg style="left:295px;top:934px;" width="9" height="14" viewBox="0 0 9 14"><path d="M4.5 13V3" stroke="#a0a0a0" stroke-width="1.2"/><path d="M4.5 0.5l-3.5 4h7z" fill="#a0a0a0"/></svg>
<svg style="left:319px;top:934px;" width="9" height="14" viewBox="0 0 9 14"><path d="M4.5 1v10" stroke="#a0a0a0" stroke-width="1.2"/><path d="M4.5 13.5l-3.5-4h7z" fill="#a0a0a0"/></svg>
<svg style="left:338px;top:934px;" width="15" height="14" viewBox="0 0 15 14"><path d="M7 0.5v13M0.5 7h13" stroke="#2a7fc0" stroke-width="1.3"/></svg>
<svg style="left:361px;top:934px;" width="16" height="14" viewBox="0 0 16 14"><path d="M1 1.5h1.5M4 1.5h9" stroke="#a0a0a0" stroke-width="1.1"/><path d="M1 5.0h1.5M4 5.0h9" stroke="#a0a0a0" stroke-width="1.1"/><path d="M1 8.5h1.5M4 8.5h9" stroke="#a0a0a0" stroke-width="1.1"/><path d="M1 12.0h1.5M4 12.0h9" stroke="#a0a0a0" stroke-width="1.1"/><path d="M10 9l5 5M15 9l-5 5" stroke="#a0a0a0" stroke-width="1.1"/></svg>
<svg style="left:383px;top:935px;" width="17" height="13" viewBox="0 0 17 13"><path d="M0.5 1.5h5l1.5 1.5h6v2H4L0.5 12z" fill="#e09a30"/><path d="M4 5.5h12.5L13 12H0.5z" fill="#f2b54a"/></svg>
<svg style="left:406px;top:938px;" width="8" height="5" viewBox="0 0 8 5"><path d="M0 0h8l-4 5z" fill="#111"/></svg>
<svg style="left:426px;top:933px;" width="15" height="15" viewBox="0 0 15 15"><rect x="1" y="1" width="13" height="13" rx="1" fill="none" stroke="#2a7fc0" stroke-width="1.4"/><rect x="4" y="1.5" width="7" height="4" fill="none" stroke="#2a7fc0" stroke-width="1.2"/><rect x="4" y="9" width="7" height="5" fill="none" stroke="#2a7fc0" stroke-width="1.2"/></svg>
<div style="left:284px;top:959px;width:576px;height:1px;background:#e3e4e8"></div>
<svg style="left:292px;top:969.5px;" width="7" height="9" viewBox="0 0 7 9"><path d="M1 1l4 3.5L1 8" fill="none" stroke="#222" stroke-width="1.4"/></svg>
<div class="t" style="left:309.36px;top:967.16px;font-size:12.8px;line-height:12.8px;color:#2d5a96;transform:scaleX(1.0788);transform-origin:0.64px 0;">Constraints</div>
<svg style="left:783px;top:966px;" width="13" height="13" viewBox="0 0 13 13"><path d="M6.5 0v13M0 6.5h13" stroke="#2a7fc0" stroke-width="1.3"/></svg>
<svg style="left:802px;top:971px;" width="8" height="5" viewBox="0 0 8 5"><path d="M0 0h8l-4 5z" fill="#111"/></svg>
<svg style="left:821px;top:966px;" width="17" height="14" viewBox="0 0 17 14"><rect x="1" y="3.5" width="14" height="7" fill="none" stroke="#2a7fc0" stroke-width="1.2"/><rect x="3" y="5.5" width="5" height="3" fill="#2a7fc0"/><path d="M10 0.5v13M8.5 0.5h3M8.5 13.5h3" stroke="#555" stroke-width="1"/></svg>
<svg style="left:843px;top:971px;" width="8" height="5" viewBox="0 0 8 5"><path d="M0 0h8l-4 5z" fill="#111"/></svg>
<div style="left:284px;top:988px;width:576px;height:1px;background:#e3e4e8"></div>
<svg style="left:292px;top:998.5px;" width="7" height="9" viewBox="0 0 7 9"><path d="M1 1l4 3.5L1 8" fill="none" stroke="#222" stroke-width="1.4"/></svg>
<div class="t" style="left:309.42px;top:996.16px;font-size:12.8px;line-height:12.8px;color:#2d5a96;transform:scaleX(1.1554);transform-origin:0.58px 0;">Output</div>
<div style="left:868px;top:178px;width:1045px;height:602px;background:#fafbfe;border-radius:4px 4px 0 0"></div>
<div style="left:868px;top:236px;width:1045px;height:544px;background:#fff"></div>
<div style="left:868px;top:210px;width:1045px;height:1px;background:#e3e4e8"></div>
<div class="t" style="left:881.10px;top:188.64px;font-size:12px;line-height:12px;color:#3a3a3a;transform:scaleX(1.0643);transform-origin:0.60px 0;">Graphics</div>
<div class="t" style="left:956.94px;top:188.64px;font-size:12px;line-height:12px;color:#4a84c0;transform:scaleX(1.1077);transform-origin:0.96px 0;">Plot 1</div>
<svg style="left:999px;top:190px;" width="11" height="11" viewBox="0 0 11 11"><path d="M1 1l9 9M10 1L1 10" stroke="#444" stroke-width="1"/></svg>
<div style="left:953px;top:207px;width:65px;height:2.4px;background:#3a78b4"></div>
<svg style="left:1861px;top:193px;" width="10" height="6" viewBox="0 0 10 6"><path d="M1 1l4 4 4-4" fill="none" stroke="#555" stroke-width="1.1"/></svg>
<svg style="left:1879px;top:191px;" width="10" height="10" viewBox="0 0 10 10"><rect x="0.5" y="0.5" width="9" height="9" fill="none" stroke="#555" stroke-width="1"/><rect x="0.5" y="0.5" width="9" height="2" fill="#555"/></svg>
<svg style="left:1897px;top:190px;" width="8" height="11" viewBox="0 0 8 11"><rect x="2" y="0.5" width="4" height="6" fill="none" stroke="#555" stroke-width="1"/><rect x="4.5" y="0.5" width="1.5" height="6" fill="#555"/><path d="M0.5 7h7M4 7v4" stroke="#555" stroke-width="1"/></svg>
<svg style="left:876px;top:215px;" width="15" height="16" viewBox="0 0 15 16"><circle cx="6" cy="6" r="5" fill="none" stroke="#3582c8" stroke-width="1.2"/><path d="M3 6h6M6 3v6" stroke="#3582c8" stroke-width="1.1"/><path d="M9.5 9.5l4.5 5" stroke="#3582c8" stroke-width="2"/></svg>
<svg style="left:899px;top:215px;" width="15" height="16" viewBox="0 0 15 16"><circle cx="6" cy="6" r="5" fill="none" stroke="#3582c8" stroke-width="1.2"/><path d="M3 6h6" stroke="#3582c8" stroke-width="1.1"/><path d="M9.5 9.5l4.5 5" stroke="#3582c8" stroke-width="2"/></svg>
<svg style="left:920px;top:215px;" width="17" height="17" viewBox="0 0 17 17"><rect x="0.5" y="4.5" width="8" height="8" fill="none" stroke="#3582c8" stroke-width="1" stroke-dasharray="1.5 1.2"/><circle cx="9" cy="6" r="5" fill="#f9fafd" stroke="#3582c8" stroke-width="1.2"/><path d="M6 6h6M9 3v6" stroke="#3582c8" stroke-width="1.1"/><path d="M12.5 9.5l4 5" stroke="#3582c8" stroke-width="2"/></svg>
<svg style="left:943px;top:221px;" width="8" height="5" viewBox="0 0 8 5"><path d="M0 0h8l-4 5z" fill="#111"/></svg>
<svg style="left:962px;top:215px;" width="16" height="16" viewBox="0 0 16 16"><rect x="0.5" y="0.5" width="15" height="15" fill="none" stroke="#555" stroke-width="1"/><path d="M8 3v10M3 8h10" stroke="#3582c8" stroke-width="1"/><path d="M8 2l-2 2h4zM8 14l-2-2h4zM2 8l2-2v4zM14 8l-2-2v4z" fill="#3582c8"/></svg>
<div style="left:986px;top:214px;width:1px;height:19px;background:#d6d6d8"></div>
<div style="left:991px;top:213px;width:20px;height:20px;background:#d4e6f7;border:1px solid #a8cdee;border-radius:2px;box-sizing:border-box"></div>
<svg style="left:993px;top:215px;" width="16" height="16" viewBox="0 0 16 16"><rect x="1" y="1" width="14" height="14" fill="#fff" stroke="#3a4f7a" stroke-width="1.2"/><path d="M4.5 1v14M1 4.5h14" stroke="#3582c8" stroke-width="1"/><path d="M8.0 1v14M1 8.0h14" stroke="#3582c8" stroke-width="1"/><path d="M11.5 1v14M1 11.5h14" stroke="#3582c8" stroke-width="1"/></svg>
<div style="left:1014px;top:213px;width:20px;height:20px;background:#d4e6f7;border:1px solid #a8cdee;border-radius:2px;box-sizing:border-box"></div>
<svg style="left:1016px;top:215px;" width="16" height="16" viewBox="0 0 16 16"><defs><linearGradient id="cbi" x1="0" y1="0" x2="0" y2="1"><stop offset="0" stop-color="#d04020"/><stop offset="0.5" stop-color="#f0a020"/><stop offset="1" stop-color="#e0d040"/></linearGradient></defs><rect x="1" y="1" width="14" height="14" fill="#e8f0fa" stroke="#555" stroke-width="1.1"/><rect x="9.5" y="3" width="3.5" height="10" fill="url(#cbi)"/></svg>
<div style="left:1039px;top:214px;width:1px;height:19px;background:#d6d6d8"></div>
<svg style="left:1049px;top:215px;" width="12" height="16" viewBox="0 0 12 16"><path d="M3 7V4.5a3 3 0 0 1 6 0V7" fill="none" stroke="#3582c8" stroke-width="1.6"/><rect x="0.5" y="7" width="11" height="8" rx="1" fill="#3582c8"/></svg>
<div style="left:1070px;top:214px;width:1px;height:19px;background:#d6d6d8"></div>
<svg style="left:1079px;top:215px;" width="15" height="16" viewBox="0 0 15 16"><path d="M7.5 1a6.5 6.5 0 1 0 0 13c1.5 0 1.5-1.5 1-2.5-.6-1 0-2 1.2-2h2a2.5 2.5 0 0 0 2.5-2.5C14 3.5 11 1 7.5 1z" fill="#f0f0f0" stroke="#777" stroke-width="1"/><circle cx="4" cy="5" r="1.2" fill="#e04040"/><circle cx="7" cy="3.5" r="1.2" fill="#40a040"/><circle cx="10.5" cy="4.5" r="1.2" fill="#4060e0"/><circle cx="4" cy="9" r="1.2" fill="#e0a030"/></svg>
<svg style="left:1099px;top:221px;" width="8" height="5" viewBox="0 0 8 5"><path d="M0 0h8l-4 5z" fill="#111"/></svg>
<div style="left:1118px;top:214px;width:1px;height:19px;background:#d6d6d8"></div>
<svg style="left:1126px;top:215px;" width="17" height="17" viewBox="0 0 17 17"><circle cx="8.5" cy="8.5" r="7.5" fill="#3582c8"/><circle cx="8.5" cy="8.5" r="3" fill="#fafbfe"/><path d="M8.5 8.5L16.2 10.6" stroke="#fafbfe" stroke-width="1.3"/><path d="M8.5 8.5L10.6 16.2" stroke="#fafbfe" stroke-width="1.3"/><path d="M8.5 8.5L2.8 14.2" stroke="#fafbfe" stroke-width="1.3"/><path d="M8.5 8.5L0.8 6.4" stroke="#fafbfe" stroke-width="1.3"/><path d="M8.5 8.5L6.4 0.8" stroke="#fafbfe" stroke-width="1.3"/><path d="M8.5 8.5L14.2 2.8" stroke="#fafbfe" stroke-width="1.3"/></svg>
<svg style="left:1148px;top:221px;" width="8" height="5" viewBox="0 0 8 5"><path d="M0 0h8l-4 5z" fill="#111"/></svg>
<svg style="left:1166px;top:217px;" width="17" height="13" viewBox="0 0 17 13"><rect x="0.5" y="2.5" width="16" height="10" rx="1" fill="#3582c8"/><rect x="5" y="0.5" width="6" height="3" fill="#3582c8"/><circle cx="8.5" cy="7.5" r="3" fill="#f9fafd"/><circle cx="8.5" cy="7.5" r="1.7" fill="#3582c8"/></svg>
<svg style="left:1191px;top:215px;" width="15" height="16" viewBox="0 0 15 16"><rect x="3" y="0.5" width="9" height="5" fill="none" stroke="#3582c8" stroke-width="1.1"/><rect x="0.5" y="5" width="14" height="7" rx="1" fill="none" stroke="#3582c8" stroke-width="1.4"/><rect x="3" y="10" width="9" height="5" fill="#f9fafd" stroke="#3582c8" stroke-width="1.1"/></svg>
<div class="t" style="left:883.96px;top:251.17px;font-size:13.5px;line-height:13.5px;color:#1a1a1a;transform:scaleX(1.0265);transform-origin:0.54px 0;">dR1_1=4.7115E-4, dR2_1=0.0056617, dR2_2=-0.020504, dR1_4=3.0191E-4, dR2_4=-7.1219E-4, dR2_5=2.7412E-4, dR1_6=-6.7088E-5 Time=6.6713E-10 s</div>
<svg style="left:1864px;top:251px;" width="12" height="3" viewBox="0 0 12 3"><circle cx="1.5" cy="1.5" r="1.1" fill="#222"/><circle cx="6" cy="1.5" r="1.1" fill="#222"/><circle cx="10.5" cy="1.5" r="1.1" fill="#222"/></svg>
<svg style="left:1862px;top:267.5px;" width="12" height="3" viewBox="0 0 12 3"><circle cx="1.5" cy="1.5" r="1.1" fill="#222"/><circle cx="6" cy="1.5" r="1.1" fill="#222"/><circle cx="10.5" cy="1.5" r="1.1" fill="#222"/></svg>
<svg style="left:1864px;top:283.5px;" width="12" height="3" viewBox="0 0 12 3"><circle cx="1.5" cy="1.5" r="1.1" fill="#222"/><circle cx="6" cy="1.5" r="1.1" fill="#222"/><circle cx="10.5" cy="1.5" r="1.1" fill="#222"/></svg>
<svg style="left:1889px;top:242px;" width="17" height="16" viewBox="0 0 17 16"><path d="M1 3l13-2 2 12-13 2z" fill="#dde6f5" stroke="#9ab" stroke-width="0.8"/><rect x="4" y="4.5" width="9" height="7" fill="#2a4fa8"/><rect x="6" y="6" width="5" height="4" fill="#e8d24a"/></svg>
<div style="left:916px;top:292px;width:906px;height:2px;background:#6a6a6a"></div>
<div style="left:916px;top:756px;width:906px;height:2px;background:#6a6a6a"></div>
<div style="left:916px;top:292px;width:2px;height:466px;background:#6a6a6a"></div>
<div style="left:1820px;top:292px;width:2px;height:466px;background:#6a6a6a"></div>
<div style="left:945px;top:293px;width:2px;height:6px;background:#6a6a6a"></div>
<div style="left:945px;top:751px;width:2px;height:6px;background:#6a6a6a"></div>
<div style="left:1023px;top:293px;width:2px;height:6px;background:#6a6a6a"></div>
<div style="left:1023px;top:751px;width:2px;height:6px;background:#6a6a6a"></div>
<div style="left:1101px;top:293px;width:2px;height:6px;background:#6a6a6a"></div>
<div style="left:1101px;top:751px;width:2px;height:6px;background:#6a6a6a"></div>
<div style="left:1179px;top:293px;width:2px;height:6px;background:#6a6a6a"></div>
<div style="left:1179px;top:751px;width:2px;height:6px;background:#6a6a6a"></div>
<div style="left:1257px;top:293px;width:2px;height:6px;background:#6a6a6a"></div>
<div style="left:1257px;top:751px;width:2px;height:6px;background:#6a6a6a"></div>
<div style="left:1335px;top:293px;width:2px;height:6px;background:#6a6a6a"></div>
<div style="left:1335px;top:751px;width:2px;height:6px;background:#6a6a6a"></div>
<div style="left:1413px;top:293px;width:2px;height:6px;background:#6a6a6a"></div>
<div style="left:1413px;top:751px;width:2px;height:6px;background:#6a6a6a"></div>
<div style="left:1491px;top:293px;width:2px;height:6px;background:#6a6a6a"></div>
<div style="left:1491px;top:751px;width:2px;height:6px;background:#6a6a6a"></div>
<div style="left:1569px;top:293px;width:2px;height:6px;background:#6a6a6a"></div>
<div style="left:1569px;top:751px;width:2px;height:6px;background:#6a6a6a"></div>
<div style="left:1648px;top:293px;width:2px;height:6px;background:#6a6a6a"></div>
<div style="left:1648px;top:751px;width:2px;height:6px;background:#6a6a6a"></div>
<div style="left:1726px;top:293px;width:2px;height:6px;background:#6a6a6a"></div>
<div style="left:1726px;top:751px;width:2px;height:6px;background:#6a6a6a"></div>
<div style="left:1804px;top:293px;width:2px;height:6px;background:#6a6a6a"></div>
<div style="left:1804px;top:751px;width:2px;height:6px;background:#6a6a6a"></div>
<div style="left:917px;top:323px;width:6px;height:2px;background:#6a6a6a"></div>
<div style="left:1815px;top:323px;width:6px;height:2px;background:#6a6a6a"></div>
<div style="left:917px;top:362px;width:6px;height:2px;background:#6a6a6a"></div>
<div style="left:1815px;top:362px;width:6px;height:2px;background:#6a6a6a"></div>
<div style="left:917px;top:401px;width:6px;height:2px;background:#6a6a6a"></div>
<div style="left:1815px;top:401px;width:6px;height:2px;background:#6a6a6a"></div>
<div style="left:917px;top:440px;width:6px;height:2px;background:#6a6a6a"></div>
<div style="left:1815px;top:440px;width:6px;height:2px;background:#6a6a6a"></div>
<div style="left:917px;top:479px;width:6px;height:2px;background:#6a6a6a"></div>
<div style="left:1815px;top:479px;width:6px;height:2px;background:#6a6a6a"></div>
<div style="left:917px;top:518px;width:6px;height:2px;background:#6a6a6a"></div>
<div style="left:1815px;top:518px;width:6px;height:2px;background:#6a6a6a"></div>
<div style="left:917px;top:557px;width:6px;height:2px;background:#6a6a6a"></div>
<div style="left:1815px;top:557px;width:6px;height:2px;background:#6a6a6a"></div>
<div style="left:917px;top:596px;width:6px;height:2px;background:#6a6a6a"></div>
<div style="left:1815px;top:596px;width:6px;height:2px;background:#6a6a6a"></div>
<div style="left:917px;top:635px;width:6px;height:2px;background:#6a6a6a"></div>
<div style="left:1815px;top:635px;width:6px;height:2px;background:#6a6a6a"></div>
<div style="left:917px;top:674px;width:6px;height:2px;background:#6a6a6a"></div>
<div style="left:1815px;top:674px;width:6px;height:2px;background:#6a6a6a"></div>
<div style="left:917px;top:713px;width:6px;height:2px;background:#6a6a6a"></div>
<div style="left:1815px;top:713px;width:6px;height:2px;background:#6a6a6a"></div>
<div style="left:917px;top:752px;width:6px;height:2px;background:#6a6a6a"></div>
<div style="left:1815px;top:752px;width:6px;height:2px;background:#6a6a6a"></div>
<div class="t" style="left:884.73px;top:316.87px;font-size:13.5px;line-height:13.5px;color:#1a1a1a;transform:scaleX(1.0695);transform-origin:0.47px 0;">0.13</div>
<div class="t" style="left:884.73px;top:355.90px;font-size:13.5px;line-height:13.5px;color:#1a1a1a;transform:scaleX(1.0724);transform-origin:0.47px 0;">0.12</div>
<div class="t" style="left:884.73px;top:394.93px;font-size:13.5px;line-height:13.5px;color:#1a1a1a;transform:scaleX(1.1173);transform-origin:0.47px 0;">0.11</div>
<div class="t" style="left:893.03px;top:433.96px;font-size:13.5px;line-height:13.5px;color:#1a1a1a;transform:scaleX(1.0574);transform-origin:0.47px 0;">0.1</div>
<div class="t" style="left:884.73px;top:472.99px;font-size:13.5px;line-height:13.5px;color:#1a1a1a;transform:scaleX(1.0724);transform-origin:0.47px 0;">0.09</div>
<div class="t" style="left:884.73px;top:512.02px;font-size:13.5px;line-height:13.5px;color:#1a1a1a;transform:scaleX(1.0695);transform-origin:0.47px 0;">0.08</div>
<div class="t" style="left:884.73px;top:551.05px;font-size:13.5px;line-height:13.5px;color:#1a1a1a;transform:scaleX(1.0724);transform-origin:0.47px 0;">0.07</div>
<div class="t" style="left:884.73px;top:590.08px;font-size:13.5px;line-height:13.5px;color:#1a1a1a;transform:scaleX(1.0695);transform-origin:0.47px 0;">0.06</div>
<div class="t" style="left:884.73px;top:629.11px;font-size:13.5px;line-height:13.5px;color:#1a1a1a;transform:scaleX(1.0695);transform-origin:0.47px 0;">0.05</div>
<div class="t" style="left:884.73px;top:668.14px;font-size:13.5px;line-height:13.5px;color:#1a1a1a;transform:scaleX(1.0610);transform-origin:0.47px 0;">0.04</div>
<div class="t" style="left:884.73px;top:707.17px;font-size:13.5px;line-height:13.5px;color:#1a1a1a;transform:scaleX(1.0695);transform-origin:0.47px 0;">0.03</div>
<div class="t" style="left:884.73px;top:746.20px;font-size:13.5px;line-height:13.5px;color:#1a1a1a;transform:scaleX(1.0724);transform-origin:0.47px 0;">0.02</div>
<div class="t" style="left:869.52px;top:286.57px;font-size:13.5px;line-height:13.5px;color:#1a1a1a;transform:scaleX(1.0101);transform-origin:0.88px 0;">mm</div>
<div class="t" style="left:929.76px;top:763.57px;font-size:13.5px;line-height:13.5px;color:#1a1a1a;transform:scaleX(1.0529);transform-origin:0.54px 0;">-0.02</div>
<div class="t" style="left:1020.20px;top:763.57px;font-size:13.5px;line-height:13.5px;color:#1a1a1a;transform:scaleX(1.0080);transform-origin:0.47px 0;">0</div>
<div class="t" style="left:1088.52px;top:763.57px;font-size:13.5px;line-height:13.5px;color:#1a1a1a;transform:scaleX(1.0366);transform-origin:0.47px 0;">0.02</div>
<div class="t" style="left:1166.59px;top:763.57px;font-size:13.5px;line-height:13.5px;color:#1a1a1a;transform:scaleX(1.0256);transform-origin:0.47px 0;">0.04</div>
<div class="t" style="left:1244.66px;top:763.57px;font-size:13.5px;line-height:13.5px;color:#1a1a1a;transform:scaleX(1.0339);transform-origin:0.47px 0;">0.06</div>
<div class="t" style="left:1322.73px;top:763.57px;font-size:13.5px;line-height:13.5px;color:#1a1a1a;transform:scaleX(1.0339);transform-origin:0.47px 0;">0.08</div>
<div class="t" style="left:1404.40px;top:763.57px;font-size:13.5px;line-height:13.5px;color:#1a1a1a;transform:scaleX(1.0687);transform-origin:0.47px 0;">0.1</div>
<div class="t" style="left:1478.87px;top:763.57px;font-size:13.5px;line-height:13.5px;color:#1a1a1a;transform:scaleX(1.0366);transform-origin:0.47px 0;">0.12</div>
<div class="t" style="left:1556.94px;top:763.57px;font-size:13.5px;line-height:13.5px;color:#1a1a1a;transform:scaleX(1.0256);transform-origin:0.47px 0;">0.14</div>
<div class="t" style="left:1635.01px;top:763.57px;font-size:13.5px;line-height:13.5px;color:#1a1a1a;transform:scaleX(1.0339);transform-origin:0.47px 0;">0.16</div>
<div class="t" style="left:1713.08px;top:763.57px;font-size:13.5px;line-height:13.5px;color:#1a1a1a;transform:scaleX(1.0339);transform-origin:0.47px 0;">0.18</div>
<div class="t" style="left:1800.12px;top:763.57px;font-size:13.5px;line-height:13.5px;color:#1a1a1a;transform:scaleX(1.0101);transform-origin:0.88px 0;">mm</div>
<svg style="left:1842px;top:340px;" width="16" height="411" viewBox="0 0 16 411"><defs><linearGradient id="cb" x1="0" y1="0" x2="0" y2="1"><stop offset="0.000" stop-color="#600000"/><stop offset="0.025" stop-color="#880404"/><stop offset="0.050" stop-color="#b00808"/><stop offset="0.075" stop-color="#bd1509"/><stop offset="0.100" stop-color="#cb230b"/><stop offset="0.125" stop-color="#d9310d"/><stop offset="0.150" stop-color="#e84010"/><stop offset="0.175" stop-color="#ea5410"/><stop offset="0.200" stop-color="#ec6710"/><stop offset="0.225" stop-color="#ee7b10"/><stop offset="0.250" stop-color="#f09010"/><stop offset="0.275" stop-color="#eca414"/><stop offset="0.300" stop-color="#e8b818"/><stop offset="0.325" stop-color="#e4cb1b"/><stop offset="0.350" stop-color="#e0e020"/><stop offset="0.375" stop-color="#d1e228"/><stop offset="0.400" stop-color="#c3e430"/><stop offset="0.425" stop-color="#b5e638"/><stop offset="0.450" stop-color="#a8e840"/><stop offset="0.475" stop-color="#8eea62"/><stop offset="0.500" stop-color="#73ec84"/><stop offset="0.525" stop-color="#59eea6"/><stop offset="0.550" stop-color="#3fefc8"/><stop offset="0.575" stop-color="#3ce8d1"/><stop offset="0.600" stop-color="#38e0dc"/><stop offset="0.625" stop-color="#34d8e6"/><stop offset="0.650" stop-color="#30d0f0"/><stop offset="0.675" stop-color="#2fbdf0"/><stop offset="0.700" stop-color="#2eacf0"/><stop offset="0.725" stop-color="#2d9af0"/><stop offset="0.750" stop-color="#2c88f0"/><stop offset="0.775" stop-color="#2a77ec"/><stop offset="0.800" stop-color="#2867e8"/><stop offset="0.825" stop-color="#2658e4"/><stop offset="0.850" stop-color="#2448e0"/><stop offset="0.875" stop-color="#243fd2"/><stop offset="0.900" stop-color="#2435c4"/><stop offset="0.925" stop-color="#242cb5"/><stop offset="0.950" stop-color="#2424a8"/><stop offset="0.975" stop-color="#202094"/><stop offset="1.000" stop-color="#1c1c80"/></linearGradient></defs><rect x="0.5" y="0.5" width="15" height="410" fill="url(#cb)" stroke="#444" stroke-width="1"/></svg>
<div class="t" style="left:1856.32px;top:298.57px;font-size:13.5px;line-height:13.5px;color:#1a1a1a;transform:scaleX(1.1287);transform-origin:0.88px 0;">nm</div>
<div style="left:1842px;top:361px;width:4px;height:1px;background:#333"></div>
<div style="left:1854px;top:361px;width:4px;height:1px;background:#333"></div>
<div class="t" style="left:1865.83px;top:353.97px;font-size:13.5px;line-height:13.5px;color:#1a1a1a;transform:scaleX(1.0549);transform-origin:0.68px 0;">640</div>
<div style="left:1842px;top:402px;width:4px;height:1px;background:#333"></div>
<div style="left:1854px;top:402px;width:4px;height:1px;background:#333"></div>
<div class="t" style="left:1865.83px;top:395.05px;font-size:13.5px;line-height:13.5px;color:#1a1a1a;transform:scaleX(1.0549);transform-origin:0.68px 0;">620</div>
<div style="left:1842px;top:443px;width:4px;height:1px;background:#333"></div>
<div style="left:1854px;top:443px;width:4px;height:1px;background:#333"></div>
<div class="t" style="left:1865.83px;top:436.13px;font-size:13.5px;line-height:13.5px;color:#1a1a1a;transform:scaleX(1.0549);transform-origin:0.68px 0;">600</div>
<div style="left:1842px;top:484px;width:4px;height:1px;background:#333"></div>
<div style="left:1854px;top:484px;width:4px;height:1px;background:#333"></div>
<div class="t" style="left:1865.96px;top:477.21px;font-size:13.5px;line-height:13.5px;color:#1a1a1a;transform:scaleX(1.0482);transform-origin:0.54px 0;">580</div>
<div style="left:1842px;top:525px;width:4px;height:1px;background:#333"></div>
<div style="left:1854px;top:525px;width:4px;height:1px;background:#333"></div>
<div class="t" style="left:1865.96px;top:518.29px;font-size:13.5px;line-height:13.5px;color:#1a1a1a;transform:scaleX(1.0482);transform-origin:0.54px 0;">560</div>
<div style="left:1842px;top:566px;width:4px;height:1px;background:#333"></div>
<div style="left:1854px;top:566px;width:4px;height:1px;background:#333"></div>
<div class="t" style="left:1865.96px;top:559.37px;font-size:13.5px;line-height:13.5px;color:#1a1a1a;transform:scaleX(1.0482);transform-origin:0.54px 0;">540</div>
<div style="left:1842px;top:607px;width:4px;height:1px;background:#333"></div>
<div style="left:1854px;top:607px;width:4px;height:1px;background:#333"></div>
<div class="t" style="left:1865.96px;top:600.45px;font-size:13.5px;line-height:13.5px;color:#1a1a1a;transform:scaleX(1.0482);transform-origin:0.54px 0;">520</div>
<div style="left:1842px;top:648px;width:4px;height:1px;background:#333"></div>
<div style="left:1854px;top:648px;width:4px;height:1px;background:#333"></div>
<div class="t" style="left:1865.96px;top:641.53px;font-size:13.5px;line-height:13.5px;color:#1a1a1a;transform:scaleX(1.0482);transform-origin:0.54px 0;">500</div>
<div style="left:1842px;top:689px;width:4px;height:1px;background:#333"></div>
<div style="left:1854px;top:689px;width:4px;height:1px;background:#333"></div>
<div class="t" style="left:1866.23px;top:682.61px;font-size:13.5px;line-height:13.5px;color:#1a1a1a;transform:scaleX(1.0352);transform-origin:0.27px 0;">480</div>
<div style="left:1842px;top:730px;width:4px;height:1px;background:#333"></div>
<div style="left:1854px;top:730px;width:4px;height:1px;background:#333"></div>
<div class="t" style="left:1866.23px;top:723.69px;font-size:13.5px;line-height:13.5px;color:#1a1a1a;transform:scaleX(1.0352);transform-origin:0.27px 0;">460</div>
<div class="t" style="left:1132.79px;top:436.75px;font-size:14px;line-height:14px;color:#1a1a1a;font-style:italic;transform:scaleX(1.0865);transform-origin:0.21px 0;">r</div>
<div class="t" style="left:1139.05px;top:443.94px;font-size:10px;line-height:10px;color:#1a1a1a;transform:scaleX(1.0543);transform-origin:0.65px 0;">rms</div>
<div class="t" style="left:1161.27px;top:437.55px;font-size:14px;line-height:14px;color:#1a1a1a;transform:scaleX(1.4577);transform-origin:0.63px 0;">=</div>
<div class="t" style="left:1175.43px;top:437.17px;font-size:13.5px;line-height:13.5px;color:#1a1a1a;transform:scaleX(1.0272);transform-origin:0.47px 0;">3.70</div>
<div class="t" style="left:1206.32px;top:437.17px;font-size:13.5px;line-height:13.5px;color:#1a1a1a;transform:scaleX(1.0995);transform-origin:0.88px 0;">μm</div>
<div class="t" style="left:1443.79px;top:436.75px;font-size:14px;line-height:14px;color:#1a1a1a;font-style:italic;transform:scaleX(1.0865);transform-origin:0.21px 0;">r</div>
<div class="t" style="left:1450.05px;top:443.94px;font-size:10px;line-height:10px;color:#1a1a1a;transform:scaleX(1.0543);transform-origin:0.65px 0;">rms</div>
<div class="t" style="left:1472.27px;top:437.55px;font-size:14px;line-height:14px;color:#1a1a1a;transform:scaleX(1.4577);transform-origin:0.63px 0;">=</div>
<div class="t" style="left:1486.23px;top:437.17px;font-size:13.5px;line-height:13.5px;color:#1a1a1a;transform:scaleX(1.0382);transform-origin:0.68px 0;">6.96</div>
<div class="t" style="left:1517.32px;top:437.17px;font-size:13.5px;line-height:13.5px;color:#1a1a1a;transform:scaleX(1.0995);transform-origin:0.88px 0;">μm</div>
<div style="left:1270px;top:700px;width:130px;height:55px;overflow:hidden">
<div style="position:absolute;left:-1270px;top:-700px;width:1920px;height:1080px">
<div class="t" style="left:1288.54px;top:747.95px;font-size:14px;line-height:14px;color:#1a1a1a;font-style:italic;transform:scaleX(1.0865);transform-origin:0.21px 0;">r</div>
<div class="t" style="left:1294.80px;top:755.13px;font-size:10px;line-height:10px;color:#1a1a1a;transform:scaleX(1.0543);transform-origin:0.65px 0;">rms</div>
<div class="t" style="left:1317.02px;top:748.75px;font-size:14px;line-height:14px;color:#1a1a1a;transform:scaleX(1.4577);transform-origin:0.63px 0;">=</div>
<div class="t" style="left:1330.98px;top:748.37px;font-size:13.5px;line-height:13.5px;color:#1a1a1a;transform:scaleX(1.0410);transform-origin:0.68px 0;">7.57</div>
<div class="t" style="left:1362.07px;top:748.37px;font-size:13.5px;line-height:13.5px;color:#1a1a1a;transform:scaleX(1.0995);transform-origin:0.88px 0;">μm</div>
</div></div>
<svg style="left:0px;top:0px;pointer-events:none" width="1920" height="1080" viewBox="0 0 1920 1080"><circle cx="1207.3" cy="364.6" r="0.9" fill="#2040d0"/><circle cx="1207.2" cy="366.4" r="0.9" fill="#2040d0"/><circle cx="1207.1" cy="368.3" r="0.9" fill="#2040d0"/><circle cx="1206.8" cy="370.1" r="0.9" fill="#2040d0"/><circle cx="1206.3" cy="371.8" r="0.9" fill="#2040d0"/><circle cx="1205.8" cy="373.6" r="0.9" fill="#2040d0"/><circle cx="1205.2" cy="375.3" r="0.9" fill="#2040d0"/><circle cx="1204.4" cy="377.0" r="0.9" fill="#2040d0"/><circle cx="1203.5" cy="378.6" r="0.9" fill="#2040d0"/><circle cx="1202.6" cy="380.2" r="0.9" fill="#2040d0"/><circle cx="1201.5" cy="381.6" r="0.9" fill="#2040d0"/><circle cx="1200.4" cy="383.1" r="0.9" fill="#2040d0"/><circle cx="1199.1" cy="384.4" r="0.9" fill="#2040d0"/><circle cx="1197.8" cy="385.7" r="0.9" fill="#2040d0"/><circle cx="1196.3" cy="386.8" r="0.9" fill="#2040d0"/><circle cx="1194.9" cy="387.9" r="0.9" fill="#2040d0"/><circle cx="1193.3" cy="388.8" r="0.9" fill="#2040d0"/><circle cx="1191.7" cy="389.7" r="0.9" fill="#2040d0"/><circle cx="1190.0" cy="390.5" r="0.9" fill="#2040d0"/><circle cx="1188.3" cy="391.1" r="0.9" fill="#2040d0"/><circle cx="1186.5" cy="391.6" r="0.9" fill="#2040d0"/><circle cx="1184.8" cy="392.1" r="0.9" fill="#2040d0"/><circle cx="1183.0" cy="392.4" r="0.9" fill="#2040d0"/><circle cx="1181.1" cy="392.5" r="0.9" fill="#2040d0"/><circle cx="1179.3" cy="392.6" r="0.9" fill="#2040d0"/><circle cx="1177.5" cy="392.5" r="0.9" fill="#2040d0"/><circle cx="1175.6" cy="392.4" r="0.9" fill="#2040d0"/><circle cx="1173.8" cy="392.1" r="0.9" fill="#2040d0"/><circle cx="1172.1" cy="391.6" r="0.9" fill="#2040d0"/><circle cx="1170.3" cy="391.1" r="0.9" fill="#2040d0"/><circle cx="1168.6" cy="390.5" r="0.9" fill="#2040d0"/><circle cx="1166.9" cy="389.7" r="0.9" fill="#2040d0"/><circle cx="1165.3" cy="388.8" r="0.9" fill="#2040d0"/><circle cx="1163.7" cy="387.9" r="0.9" fill="#2040d0"/><circle cx="1162.3" cy="386.8" r="0.9" fill="#2040d0"/><circle cx="1160.8" cy="385.7" r="0.9" fill="#2040d0"/><circle cx="1159.5" cy="384.4" r="0.9" fill="#2040d0"/><circle cx="1158.2" cy="383.1" r="0.9" fill="#2040d0"/><circle cx="1157.1" cy="381.6" r="0.9" fill="#2040d0"/><circle cx="1156.0" cy="380.2" r="0.9" fill="#2040d0"/><circle cx="1155.1" cy="378.6" r="0.9" fill="#2040d0"/><circle cx="1154.2" cy="377.0" r="0.9" fill="#2040d0"/><circle cx="1153.4" cy="375.3" r="0.9" fill="#2040d0"/><circle cx="1152.8" cy="373.6" r="0.9" fill="#2040d0"/><circle cx="1152.3" cy="371.8" r="0.9" fill="#2040d0"/><circle cx="1151.8" cy="370.1" r="0.9" fill="#2040d0"/><circle cx="1151.5" cy="368.3" r="0.9" fill="#2040d0"/><circle cx="1151.4" cy="366.4" r="0.9" fill="#2040d0"/><circle cx="1151.3" cy="364.6" r="0.9" fill="#2040d0"/><circle cx="1151.4" cy="362.8" r="0.9" fill="#2040d0"/><circle cx="1151.5" cy="360.9" r="0.9" fill="#2040d0"/><circle cx="1151.8" cy="359.1" r="0.9" fill="#2040d0"/><circle cx="1152.3" cy="357.4" r="0.9" fill="#2040d0"/><circle cx="1152.8" cy="355.6" r="0.9" fill="#2040d0"/><circle cx="1153.4" cy="353.9" r="0.9" fill="#2040d0"/><circle cx="1154.2" cy="352.2" r="0.9" fill="#2040d0"/><circle cx="1155.1" cy="350.6" r="0.9" fill="#2040d0"/><circle cx="1156.0" cy="349.0" r="0.9" fill="#2040d0"/><circle cx="1157.1" cy="347.6" r="0.9" fill="#2040d0"/><circle cx="1158.2" cy="346.1" r="0.9" fill="#2040d0"/><circle cx="1159.5" cy="344.8" r="0.9" fill="#2040d0"/><circle cx="1160.8" cy="343.5" r="0.9" fill="#2040d0"/><circle cx="1162.3" cy="342.4" r="0.9" fill="#2040d0"/><circle cx="1163.7" cy="341.3" r="0.9" fill="#2040d0"/><circle cx="1165.3" cy="340.4" r="0.9" fill="#2040d0"/><circle cx="1166.9" cy="339.5" r="0.9" fill="#2040d0"/><circle cx="1168.6" cy="338.7" r="0.9" fill="#2040d0"/><circle cx="1170.3" cy="338.1" r="0.9" fill="#2040d0"/><circle cx="1172.1" cy="337.6" r="0.9" fill="#2040d0"/><circle cx="1173.8" cy="337.1" r="0.9" fill="#2040d0"/><circle cx="1175.6" cy="336.8" r="0.9" fill="#2040d0"/><circle cx="1177.5" cy="336.7" r="0.9" fill="#2040d0"/><circle cx="1179.3" cy="336.6" r="0.9" fill="#2040d0"/><circle cx="1181.1" cy="336.7" r="0.9" fill="#2040d0"/><circle cx="1183.0" cy="336.8" r="0.9" fill="#2040d0"/><circle cx="1184.8" cy="337.1" r="0.9" fill="#2040d0"/><circle cx="1186.5" cy="337.6" r="0.9" fill="#2040d0"/><circle cx="1188.3" cy="338.1" r="0.9" fill="#2040d0"/><circle cx="1190.0" cy="338.7" r="0.9" fill="#2040d0"/><circle cx="1191.7" cy="339.5" r="0.9" fill="#2040d0"/><circle cx="1193.3" cy="340.4" r="0.9" fill="#2040d0"/><circle cx="1194.9" cy="341.3" r="0.9" fill="#2040d0"/><circle cx="1196.3" cy="342.4" r="0.9" fill="#2040d0"/><circle cx="1197.8" cy="343.5" r="0.9" fill="#2040d0"/><circle cx="1199.1" cy="344.8" r="0.9" fill="#2040d0"/><circle cx="1200.4" cy="346.1" r="0.9" fill="#2040d0"/><circle cx="1201.5" cy="347.6" r="0.9" fill="#2040d0"/><circle cx="1202.6" cy="349.0" r="0.9" fill="#2040d0"/><circle cx="1203.5" cy="350.6" r="0.9" fill="#2040d0"/><circle cx="1204.4" cy="352.2" r="0.9" fill="#2040d0"/><circle cx="1205.2" cy="353.9" r="0.9" fill="#2040d0"/><circle cx="1205.8" cy="355.6" r="0.9" fill="#2040d0"/><circle cx="1206.3" cy="357.4" r="0.9" fill="#2040d0"/><circle cx="1206.8" cy="359.1" r="0.9" fill="#2040d0"/><circle cx="1207.1" cy="360.9" r="0.9" fill="#2040d0"/><circle cx="1207.2" cy="362.8" r="0.9" fill="#2040d0"/><circle cx="1197.3" cy="364.6" r="0.95" fill="#78f078"/><circle cx="1197.2" cy="366.1" r="0.95" fill="#78f078"/><circle cx="1197.1" cy="367.6" r="0.95" fill="#78f078"/><circle cx="1196.7" cy="369.0" r="0.95" fill="#78f078"/><circle cx="1196.3" cy="370.4" r="0.95" fill="#78f078"/><circle cx="1195.8" cy="371.8" r="0.95" fill="#78f078"/><circle cx="1195.1" cy="373.2" r="0.95" fill="#78f078"/><circle cx="1194.4" cy="374.4" r="0.95" fill="#78f078"/><circle cx="1193.5" cy="375.7" r="0.95" fill="#78f078"/><circle cx="1192.5" cy="376.8" r="0.95" fill="#78f078"/><circle cx="1191.5" cy="377.8" r="0.95" fill="#78f078"/><circle cx="1190.4" cy="378.8" r="0.95" fill="#78f078"/><circle cx="1189.1" cy="379.7" r="0.95" fill="#78f078"/><circle cx="1187.9" cy="380.4" r="0.95" fill="#78f078"/><circle cx="1186.5" cy="381.1" r="0.95" fill="#78f078"/><circle cx="1185.1" cy="381.6" r="0.95" fill="#78f078"/><circle cx="1183.7" cy="382.0" r="0.95" fill="#78f078"/><circle cx="1182.3" cy="382.4" r="0.95" fill="#78f078"/><circle cx="1180.8" cy="382.5" r="0.95" fill="#78f078"/><circle cx="1179.3" cy="382.6" r="0.95" fill="#78f078"/><circle cx="1177.8" cy="382.5" r="0.95" fill="#78f078"/><circle cx="1176.3" cy="382.4" r="0.95" fill="#78f078"/><circle cx="1174.9" cy="382.0" r="0.95" fill="#78f078"/><circle cx="1173.5" cy="381.6" r="0.95" fill="#78f078"/><circle cx="1172.1" cy="381.1" r="0.95" fill="#78f078"/><circle cx="1170.7" cy="380.4" r="0.95" fill="#78f078"/><circle cx="1169.5" cy="379.7" r="0.95" fill="#78f078"/><circle cx="1168.2" cy="378.8" r="0.95" fill="#78f078"/><circle cx="1167.1" cy="377.8" r="0.95" fill="#78f078"/><circle cx="1166.1" cy="376.8" r="0.95" fill="#78f078"/><circle cx="1165.1" cy="375.7" r="0.95" fill="#78f078"/><circle cx="1164.2" cy="374.4" r="0.95" fill="#78f078"/><circle cx="1163.5" cy="373.2" r="0.95" fill="#78f078"/><circle cx="1162.8" cy="371.8" r="0.95" fill="#78f078"/><circle cx="1162.3" cy="370.4" r="0.95" fill="#78f078"/><circle cx="1161.9" cy="369.0" r="0.95" fill="#78f078"/><circle cx="1161.5" cy="367.6" r="0.95" fill="#78f078"/><circle cx="1161.4" cy="366.1" r="0.95" fill="#78f078"/><circle cx="1161.3" cy="364.6" r="0.95" fill="#78f078"/><circle cx="1161.4" cy="363.1" r="0.95" fill="#78f078"/><circle cx="1161.5" cy="361.6" r="0.95" fill="#78f078"/><circle cx="1161.9" cy="360.2" r="0.95" fill="#78f078"/><circle cx="1162.3" cy="358.8" r="0.95" fill="#78f078"/><circle cx="1162.8" cy="357.4" r="0.95" fill="#78f078"/><circle cx="1163.5" cy="356.0" r="0.95" fill="#78f078"/><circle cx="1164.2" cy="354.8" r="0.95" fill="#78f078"/><circle cx="1165.1" cy="353.5" r="0.95" fill="#78f078"/><circle cx="1166.1" cy="352.4" r="0.95" fill="#78f078"/><circle cx="1167.1" cy="351.4" r="0.95" fill="#78f078"/><circle cx="1168.2" cy="350.4" r="0.95" fill="#78f078"/><circle cx="1169.5" cy="349.5" r="0.95" fill="#78f078"/><circle cx="1170.7" cy="348.8" r="0.95" fill="#78f078"/><circle cx="1172.1" cy="348.1" r="0.95" fill="#78f078"/><circle cx="1173.5" cy="347.6" r="0.95" fill="#78f078"/><circle cx="1174.9" cy="347.2" r="0.95" fill="#78f078"/><circle cx="1176.3" cy="346.8" r="0.95" fill="#78f078"/><circle cx="1177.8" cy="346.7" r="0.95" fill="#78f078"/><circle cx="1179.3" cy="346.6" r="0.95" fill="#78f078"/><circle cx="1180.8" cy="346.7" r="0.95" fill="#78f078"/><circle cx="1182.3" cy="346.8" r="0.95" fill="#78f078"/><circle cx="1183.7" cy="347.2" r="0.95" fill="#78f078"/><circle cx="1185.1" cy="347.6" r="0.95" fill="#78f078"/><circle cx="1186.5" cy="348.1" r="0.95" fill="#78f078"/><circle cx="1187.9" cy="348.8" r="0.95" fill="#78f078"/><circle cx="1189.1" cy="349.5" r="0.95" fill="#78f078"/><circle cx="1190.4" cy="350.4" r="0.95" fill="#78f078"/><circle cx="1191.5" cy="351.4" r="0.95" fill="#78f078"/><circle cx="1192.5" cy="352.4" r="0.95" fill="#78f078"/><circle cx="1193.5" cy="353.5" r="0.95" fill="#78f078"/><circle cx="1194.4" cy="354.8" r="0.95" fill="#78f078"/><circle cx="1195.1" cy="356.0" r="0.95" fill="#78f078"/><circle cx="1195.8" cy="357.4" r="0.95" fill="#78f078"/><circle cx="1196.3" cy="358.8" r="0.95" fill="#78f078"/><circle cx="1196.7" cy="360.2" r="0.95" fill="#78f078"/><circle cx="1197.1" cy="361.6" r="0.95" fill="#78f078"/><circle cx="1197.2" cy="363.1" r="0.95" fill="#78f078"/><circle cx="1198.8" cy="364.6" r="0.95" fill="#78f078"/><circle cx="1198.7" cy="366.2" r="0.95" fill="#78f078"/><circle cx="1198.5" cy="367.8" r="0.95" fill="#78f078"/><circle cx="1198.2" cy="369.4" r="0.95" fill="#78f078"/><circle cx="1197.7" cy="370.9" r="0.95" fill="#78f078"/><circle cx="1197.2" cy="372.4" r="0.95" fill="#78f078"/><circle cx="1196.4" cy="373.9" r="0.95" fill="#78f078"/><circle cx="1195.6" cy="375.3" r="0.95" fill="#78f078"/><circle cx="1194.7" cy="376.6" r="0.95" fill="#78f078"/><circle cx="1193.6" cy="377.8" r="0.95" fill="#78f078"/><circle cx="1192.5" cy="378.9" r="0.95" fill="#78f078"/><circle cx="1191.3" cy="380.0" r="0.95" fill="#78f078"/><circle cx="1190.0" cy="380.9" r="0.95" fill="#78f078"/><circle cx="1188.6" cy="381.7" r="0.95" fill="#78f078"/><circle cx="1187.1" cy="382.5" r="0.95" fill="#78f078"/><circle cx="1185.6" cy="383.0" r="0.95" fill="#78f078"/><circle cx="1184.1" cy="383.5" r="0.95" fill="#78f078"/><circle cx="1182.5" cy="383.8" r="0.95" fill="#78f078"/><circle cx="1180.9" cy="384.0" r="0.95" fill="#78f078"/><circle cx="1179.3" cy="384.1" r="0.95" fill="#78f078"/><circle cx="1177.7" cy="384.0" r="0.95" fill="#78f078"/><circle cx="1176.1" cy="383.8" r="0.95" fill="#78f078"/><circle cx="1174.5" cy="383.5" r="0.95" fill="#78f078"/><circle cx="1173.0" cy="383.0" r="0.95" fill="#78f078"/><circle cx="1171.5" cy="382.5" r="0.95" fill="#78f078"/><circle cx="1170.0" cy="381.7" r="0.95" fill="#78f078"/><circle cx="1168.6" cy="380.9" r="0.95" fill="#78f078"/><circle cx="1167.3" cy="380.0" r="0.95" fill="#78f078"/><circle cx="1166.1" cy="378.9" r="0.95" fill="#78f078"/><circle cx="1165.0" cy="377.8" r="0.95" fill="#78f078"/><circle cx="1163.9" cy="376.6" r="0.95" fill="#78f078"/><circle cx="1163.0" cy="375.3" r="0.95" fill="#78f078"/><circle cx="1162.2" cy="373.9" r="0.95" fill="#78f078"/><circle cx="1161.4" cy="372.4" r="0.95" fill="#78f078"/><circle cx="1160.9" cy="370.9" r="0.95" fill="#78f078"/><circle cx="1160.4" cy="369.4" r="0.95" fill="#78f078"/><circle cx="1160.1" cy="367.8" r="0.95" fill="#78f078"/><circle cx="1159.9" cy="366.2" r="0.95" fill="#78f078"/><circle cx="1159.8" cy="364.6" r="0.95" fill="#78f078"/><circle cx="1159.9" cy="363.0" r="0.95" fill="#78f078"/><circle cx="1160.1" cy="361.4" r="0.95" fill="#78f078"/><circle cx="1160.4" cy="359.8" r="0.95" fill="#78f078"/><circle cx="1160.9" cy="358.3" r="0.95" fill="#78f078"/><circle cx="1161.4" cy="356.8" r="0.95" fill="#78f078"/><circle cx="1162.2" cy="355.3" r="0.95" fill="#78f078"/><circle cx="1163.0" cy="353.9" r="0.95" fill="#78f078"/><circle cx="1163.9" cy="352.6" r="0.95" fill="#78f078"/><circle cx="1165.0" cy="351.4" r="0.95" fill="#78f078"/><circle cx="1166.1" cy="350.3" r="0.95" fill="#78f078"/><circle cx="1167.3" cy="349.2" r="0.95" fill="#78f078"/><circle cx="1168.6" cy="348.3" r="0.95" fill="#78f078"/><circle cx="1170.0" cy="347.5" r="0.95" fill="#78f078"/><circle cx="1171.5" cy="346.7" r="0.95" fill="#78f078"/><circle cx="1173.0" cy="346.2" r="0.95" fill="#78f078"/><circle cx="1174.5" cy="345.7" r="0.95" fill="#78f078"/><circle cx="1176.1" cy="345.4" r="0.95" fill="#78f078"/><circle cx="1177.7" cy="345.2" r="0.95" fill="#78f078"/><circle cx="1179.3" cy="345.1" r="0.95" fill="#78f078"/><circle cx="1180.9" cy="345.2" r="0.95" fill="#78f078"/><circle cx="1182.5" cy="345.4" r="0.95" fill="#78f078"/><circle cx="1184.1" cy="345.7" r="0.95" fill="#78f078"/><circle cx="1185.6" cy="346.2" r="0.95" fill="#78f078"/><circle cx="1187.1" cy="346.7" r="0.95" fill="#78f078"/><circle cx="1188.6" cy="347.5" r="0.95" fill="#78f078"/><circle cx="1190.0" cy="348.3" r="0.95" fill="#78f078"/><circle cx="1191.3" cy="349.2" r="0.95" fill="#78f078"/><circle cx="1192.5" cy="350.3" r="0.95" fill="#78f078"/><circle cx="1193.6" cy="351.4" r="0.95" fill="#78f078"/><circle cx="1194.7" cy="352.6" r="0.95" fill="#78f078"/><circle cx="1195.6" cy="353.9" r="0.95" fill="#78f078"/><circle cx="1196.4" cy="355.3" r="0.95" fill="#78f078"/><circle cx="1197.2" cy="356.8" r="0.95" fill="#78f078"/><circle cx="1197.7" cy="358.3" r="0.95" fill="#78f078"/><circle cx="1198.2" cy="359.8" r="0.95" fill="#78f078"/><circle cx="1198.5" cy="361.4" r="0.95" fill="#78f078"/><circle cx="1198.7" cy="363.0" r="0.95" fill="#78f078"/><circle cx="1200.3" cy="364.6" r="0.95" fill="#78f078"/><circle cx="1200.2" cy="366.3" r="0.95" fill="#78f078"/><circle cx="1200.0" cy="368.1" r="0.95" fill="#78f078"/><circle cx="1199.7" cy="369.8" r="0.95" fill="#78f078"/><circle cx="1199.2" cy="371.4" r="0.95" fill="#78f078"/><circle cx="1198.5" cy="373.0" r="0.95" fill="#78f078"/><circle cx="1197.8" cy="374.6" r="0.95" fill="#78f078"/><circle cx="1196.9" cy="376.1" r="0.95" fill="#78f078"/><circle cx="1195.9" cy="377.5" r="0.95" fill="#78f078"/><circle cx="1194.8" cy="378.8" r="0.95" fill="#78f078"/><circle cx="1193.5" cy="380.1" r="0.95" fill="#78f078"/><circle cx="1192.2" cy="381.2" r="0.95" fill="#78f078"/><circle cx="1190.8" cy="382.2" r="0.95" fill="#78f078"/><circle cx="1189.3" cy="383.1" r="0.95" fill="#78f078"/><circle cx="1187.7" cy="383.8" r="0.95" fill="#78f078"/><circle cx="1186.1" cy="384.5" r="0.95" fill="#78f078"/><circle cx="1184.5" cy="385.0" r="0.95" fill="#78f078"/><circle cx="1182.8" cy="385.3" r="0.95" fill="#78f078"/><circle cx="1181.0" cy="385.5" r="0.95" fill="#78f078"/><circle cx="1179.3" cy="385.6" r="0.95" fill="#78f078"/><circle cx="1177.6" cy="385.5" r="0.95" fill="#78f078"/><circle cx="1175.8" cy="385.3" r="0.95" fill="#78f078"/><circle cx="1174.1" cy="385.0" r="0.95" fill="#78f078"/><circle cx="1172.5" cy="384.5" r="0.95" fill="#78f078"/><circle cx="1170.9" cy="383.8" r="0.95" fill="#78f078"/><circle cx="1169.3" cy="383.1" r="0.95" fill="#78f078"/><circle cx="1167.8" cy="382.2" r="0.95" fill="#78f078"/><circle cx="1166.4" cy="381.2" r="0.95" fill="#78f078"/><circle cx="1165.1" cy="380.1" r="0.95" fill="#78f078"/><circle cx="1163.8" cy="378.8" r="0.95" fill="#78f078"/><circle cx="1162.7" cy="377.5" r="0.95" fill="#78f078"/><circle cx="1161.7" cy="376.1" r="0.95" fill="#78f078"/><circle cx="1160.8" cy="374.6" r="0.95" fill="#78f078"/><circle cx="1160.1" cy="373.0" r="0.95" fill="#78f078"/><circle cx="1159.4" cy="371.4" r="0.95" fill="#78f078"/><circle cx="1158.9" cy="369.8" r="0.95" fill="#78f078"/><circle cx="1158.6" cy="368.1" r="0.95" fill="#78f078"/><circle cx="1158.4" cy="366.3" r="0.95" fill="#78f078"/><circle cx="1158.3" cy="364.6" r="0.95" fill="#78f078"/><circle cx="1158.4" cy="362.9" r="0.95" fill="#78f078"/><circle cx="1158.6" cy="361.1" r="0.95" fill="#78f078"/><circle cx="1158.9" cy="359.4" r="0.95" fill="#78f078"/><circle cx="1159.4" cy="357.8" r="0.95" fill="#78f078"/><circle cx="1160.1" cy="356.2" r="0.95" fill="#78f078"/><circle cx="1160.8" cy="354.6" r="0.95" fill="#78f078"/><circle cx="1161.7" cy="353.1" r="0.95" fill="#78f078"/><circle cx="1162.7" cy="351.7" r="0.95" fill="#78f078"/><circle cx="1163.8" cy="350.4" r="0.95" fill="#78f078"/><circle cx="1165.1" cy="349.1" r="0.95" fill="#78f078"/><circle cx="1166.4" cy="348.0" r="0.95" fill="#78f078"/><circle cx="1167.8" cy="347.0" r="0.95" fill="#78f078"/><circle cx="1169.3" cy="346.1" r="0.95" fill="#78f078"/><circle cx="1170.9" cy="345.4" r="0.95" fill="#78f078"/><circle cx="1172.5" cy="344.7" r="0.95" fill="#78f078"/><circle cx="1174.1" cy="344.2" r="0.95" fill="#78f078"/><circle cx="1175.8" cy="343.9" r="0.95" fill="#78f078"/><circle cx="1177.6" cy="343.7" r="0.95" fill="#78f078"/><circle cx="1179.3" cy="343.6" r="0.95" fill="#78f078"/><circle cx="1181.0" cy="343.7" r="0.95" fill="#78f078"/><circle cx="1182.8" cy="343.9" r="0.95" fill="#78f078"/><circle cx="1184.5" cy="344.2" r="0.95" fill="#78f078"/><circle cx="1186.1" cy="344.7" r="0.95" fill="#78f078"/><circle cx="1187.7" cy="345.4" r="0.95" fill="#78f078"/><circle cx="1189.3" cy="346.1" r="0.95" fill="#78f078"/><circle cx="1190.8" cy="347.0" r="0.95" fill="#78f078"/><circle cx="1192.2" cy="348.0" r="0.95" fill="#78f078"/><circle cx="1193.5" cy="349.1" r="0.95" fill="#78f078"/><circle cx="1194.8" cy="350.4" r="0.95" fill="#78f078"/><circle cx="1195.9" cy="351.7" r="0.95" fill="#78f078"/><circle cx="1196.9" cy="353.1" r="0.95" fill="#78f078"/><circle cx="1197.8" cy="354.6" r="0.95" fill="#78f078"/><circle cx="1198.5" cy="356.2" r="0.95" fill="#78f078"/><circle cx="1199.2" cy="357.8" r="0.95" fill="#78f078"/><circle cx="1199.7" cy="359.4" r="0.95" fill="#78f078"/><circle cx="1200.0" cy="361.1" r="0.95" fill="#78f078"/><circle cx="1200.2" cy="362.9" r="0.95" fill="#78f078"/><circle cx="1201.6" cy="364.6" r="0.95" fill="#78f078"/><circle cx="1201.5" cy="366.4" r="0.95" fill="#78f078"/><circle cx="1201.3" cy="368.3" r="0.95" fill="#78f078"/><circle cx="1200.9" cy="370.1" r="0.95" fill="#78f078"/><circle cx="1200.4" cy="371.8" r="0.95" fill="#78f078"/><circle cx="1199.7" cy="373.6" r="0.95" fill="#78f078"/><circle cx="1198.9" cy="375.2" r="0.95" fill="#78f078"/><circle cx="1198.0" cy="376.8" r="0.95" fill="#78f078"/><circle cx="1196.9" cy="378.3" r="0.95" fill="#78f078"/><circle cx="1195.7" cy="379.7" r="0.95" fill="#78f078"/><circle cx="1194.4" cy="381.0" r="0.95" fill="#78f078"/><circle cx="1193.0" cy="382.2" r="0.95" fill="#78f078"/><circle cx="1191.5" cy="383.3" r="0.95" fill="#78f078"/><circle cx="1189.9" cy="384.2" r="0.95" fill="#78f078"/><circle cx="1188.3" cy="385.0" r="0.95" fill="#78f078"/><circle cx="1186.5" cy="385.7" r="0.95" fill="#78f078"/><circle cx="1184.8" cy="386.2" r="0.95" fill="#78f078"/><circle cx="1183.0" cy="386.6" r="0.95" fill="#78f078"/><circle cx="1181.1" cy="386.8" r="0.95" fill="#78f078"/><circle cx="1179.3" cy="386.9" r="0.95" fill="#78f078"/><circle cx="1177.5" cy="386.8" r="0.95" fill="#78f078"/><circle cx="1175.6" cy="386.6" r="0.95" fill="#78f078"/><circle cx="1173.8" cy="386.2" r="0.95" fill="#78f078"/><circle cx="1172.1" cy="385.7" r="0.95" fill="#78f078"/><circle cx="1170.3" cy="385.0" r="0.95" fill="#78f078"/><circle cx="1168.7" cy="384.2" r="0.95" fill="#78f078"/><circle cx="1167.1" cy="383.3" r="0.95" fill="#78f078"/><circle cx="1165.6" cy="382.2" r="0.95" fill="#78f078"/><circle cx="1164.2" cy="381.0" r="0.95" fill="#78f078"/><circle cx="1162.9" cy="379.7" r="0.95" fill="#78f078"/><circle cx="1161.7" cy="378.3" r="0.95" fill="#78f078"/><circle cx="1160.6" cy="376.8" r="0.95" fill="#78f078"/><circle cx="1159.7" cy="375.2" r="0.95" fill="#78f078"/><circle cx="1158.9" cy="373.6" r="0.95" fill="#78f078"/><circle cx="1158.2" cy="371.8" r="0.95" fill="#78f078"/><circle cx="1157.7" cy="370.1" r="0.95" fill="#78f078"/><circle cx="1157.3" cy="368.3" r="0.95" fill="#78f078"/><circle cx="1157.1" cy="366.4" r="0.95" fill="#78f078"/><circle cx="1157.0" cy="364.6" r="0.95" fill="#78f078"/><circle cx="1157.1" cy="362.8" r="0.95" fill="#78f078"/><circle cx="1157.3" cy="360.9" r="0.95" fill="#78f078"/><circle cx="1157.7" cy="359.1" r="0.95" fill="#78f078"/><circle cx="1158.2" cy="357.4" r="0.95" fill="#78f078"/><circle cx="1158.9" cy="355.6" r="0.95" fill="#78f078"/><circle cx="1159.7" cy="354.0" r="0.95" fill="#78f078"/><circle cx="1160.6" cy="352.4" r="0.95" fill="#78f078"/><circle cx="1161.7" cy="350.9" r="0.95" fill="#78f078"/><circle cx="1162.9" cy="349.5" r="0.95" fill="#78f078"/><circle cx="1164.2" cy="348.2" r="0.95" fill="#78f078"/><circle cx="1165.6" cy="347.0" r="0.95" fill="#78f078"/><circle cx="1167.1" cy="345.9" r="0.95" fill="#78f078"/><circle cx="1168.7" cy="345.0" r="0.95" fill="#78f078"/><circle cx="1170.3" cy="344.2" r="0.95" fill="#78f078"/><circle cx="1172.1" cy="343.5" r="0.95" fill="#78f078"/><circle cx="1173.8" cy="343.0" r="0.95" fill="#78f078"/><circle cx="1175.6" cy="342.6" r="0.95" fill="#78f078"/><circle cx="1177.5" cy="342.4" r="0.95" fill="#78f078"/><circle cx="1179.3" cy="342.3" r="0.95" fill="#78f078"/><circle cx="1181.1" cy="342.4" r="0.95" fill="#78f078"/><circle cx="1183.0" cy="342.6" r="0.95" fill="#78f078"/><circle cx="1184.8" cy="343.0" r="0.95" fill="#78f078"/><circle cx="1186.5" cy="343.5" r="0.95" fill="#78f078"/><circle cx="1188.3" cy="344.2" r="0.95" fill="#78f078"/><circle cx="1189.9" cy="345.0" r="0.95" fill="#78f078"/><circle cx="1191.5" cy="345.9" r="0.95" fill="#78f078"/><circle cx="1193.0" cy="347.0" r="0.95" fill="#78f078"/><circle cx="1194.4" cy="348.2" r="0.95" fill="#78f078"/><circle cx="1195.7" cy="349.5" r="0.95" fill="#78f078"/><circle cx="1196.9" cy="350.9" r="0.95" fill="#78f078"/><circle cx="1198.0" cy="352.4" r="0.95" fill="#78f078"/><circle cx="1198.9" cy="354.0" r="0.95" fill="#78f078"/><circle cx="1199.7" cy="355.6" r="0.95" fill="#78f078"/><circle cx="1200.4" cy="357.4" r="0.95" fill="#78f078"/><circle cx="1200.9" cy="359.1" r="0.95" fill="#78f078"/><circle cx="1201.3" cy="360.9" r="0.95" fill="#78f078"/><circle cx="1201.5" cy="362.8" r="0.95" fill="#78f078"/><circle cx="1191.1" cy="364.6" r="1.0" fill="#d41a1a"/><circle cx="1191.0" cy="365.8" r="1.0" fill="#d41a1a"/><circle cx="1190.8" cy="367.1" r="1.0" fill="#d41a1a"/><circle cx="1190.5" cy="368.2" r="1.0" fill="#d41a1a"/><circle cx="1190.1" cy="369.4" r="1.0" fill="#d41a1a"/><circle cx="1189.5" cy="370.5" r="1.0" fill="#d41a1a"/><circle cx="1188.8" cy="371.5" r="1.0" fill="#d41a1a"/><circle cx="1188.1" cy="372.5" r="1.0" fill="#d41a1a"/><circle cx="1187.2" cy="373.4" r="1.0" fill="#d41a1a"/><circle cx="1186.2" cy="374.1" r="1.0" fill="#d41a1a"/><circle cx="1185.2" cy="374.8" r="1.0" fill="#d41a1a"/><circle cx="1184.1" cy="375.4" r="1.0" fill="#d41a1a"/><circle cx="1182.9" cy="375.8" r="1.0" fill="#d41a1a"/><circle cx="1181.8" cy="376.1" r="1.0" fill="#d41a1a"/><circle cx="1180.5" cy="376.3" r="1.0" fill="#d41a1a"/><circle cx="1179.3" cy="376.4" r="1.0" fill="#d41a1a"/><circle cx="1178.1" cy="376.3" r="1.0" fill="#d41a1a"/><circle cx="1176.8" cy="376.1" r="1.0" fill="#d41a1a"/><circle cx="1175.7" cy="375.8" r="1.0" fill="#d41a1a"/><circle cx="1174.5" cy="375.4" r="1.0" fill="#d41a1a"/><circle cx="1173.4" cy="374.8" r="1.0" fill="#d41a1a"/><circle cx="1172.4" cy="374.1" r="1.0" fill="#d41a1a"/><circle cx="1171.4" cy="373.4" r="1.0" fill="#d41a1a"/><circle cx="1170.5" cy="372.5" r="1.0" fill="#d41a1a"/><circle cx="1169.8" cy="371.5" r="1.0" fill="#d41a1a"/><circle cx="1169.1" cy="370.5" r="1.0" fill="#d41a1a"/><circle cx="1168.5" cy="369.4" r="1.0" fill="#d41a1a"/><circle cx="1168.1" cy="368.2" r="1.0" fill="#d41a1a"/><circle cx="1167.8" cy="367.1" r="1.0" fill="#d41a1a"/><circle cx="1167.6" cy="365.8" r="1.0" fill="#d41a1a"/><circle cx="1167.5" cy="364.6" r="1.0" fill="#d41a1a"/><circle cx="1167.6" cy="363.4" r="1.0" fill="#d41a1a"/><circle cx="1167.8" cy="362.1" r="1.0" fill="#d41a1a"/><circle cx="1168.1" cy="361.0" r="1.0" fill="#d41a1a"/><circle cx="1168.5" cy="359.8" r="1.0" fill="#d41a1a"/><circle cx="1169.1" cy="358.7" r="1.0" fill="#d41a1a"/><circle cx="1169.8" cy="357.7" r="1.0" fill="#d41a1a"/><circle cx="1170.5" cy="356.7" r="1.0" fill="#d41a1a"/><circle cx="1171.4" cy="355.8" r="1.0" fill="#d41a1a"/><circle cx="1172.4" cy="355.1" r="1.0" fill="#d41a1a"/><circle cx="1173.4" cy="354.4" r="1.0" fill="#d41a1a"/><circle cx="1174.5" cy="353.8" r="1.0" fill="#d41a1a"/><circle cx="1175.7" cy="353.4" r="1.0" fill="#d41a1a"/><circle cx="1176.8" cy="353.1" r="1.0" fill="#d41a1a"/><circle cx="1178.1" cy="352.9" r="1.0" fill="#d41a1a"/><circle cx="1179.3" cy="352.8" r="1.0" fill="#d41a1a"/><circle cx="1180.5" cy="352.9" r="1.0" fill="#d41a1a"/><circle cx="1181.8" cy="353.1" r="1.0" fill="#d41a1a"/><circle cx="1182.9" cy="353.4" r="1.0" fill="#d41a1a"/><circle cx="1184.1" cy="353.8" r="1.0" fill="#d41a1a"/><circle cx="1185.2" cy="354.4" r="1.0" fill="#d41a1a"/><circle cx="1186.2" cy="355.1" r="1.0" fill="#d41a1a"/><circle cx="1187.2" cy="355.8" r="1.0" fill="#d41a1a"/><circle cx="1188.1" cy="356.7" r="1.0" fill="#d41a1a"/><circle cx="1188.8" cy="357.7" r="1.0" fill="#d41a1a"/><circle cx="1189.5" cy="358.7" r="1.0" fill="#d41a1a"/><circle cx="1190.1" cy="359.8" r="1.0" fill="#d41a1a"/><circle cx="1190.5" cy="361.0" r="1.0" fill="#d41a1a"/><circle cx="1190.8" cy="362.1" r="1.0" fill="#d41a1a"/><circle cx="1191.0" cy="363.4" r="1.0" fill="#d41a1a"/><circle cx="1192.5" cy="364.6" r="1.0" fill="#d41a1a"/><circle cx="1192.4" cy="366.0" r="1.0" fill="#d41a1a"/><circle cx="1192.2" cy="367.3" r="1.0" fill="#d41a1a"/><circle cx="1191.9" cy="368.7" r="1.0" fill="#d41a1a"/><circle cx="1191.4" cy="370.0" r="1.0" fill="#d41a1a"/><circle cx="1190.7" cy="371.2" r="1.0" fill="#d41a1a"/><circle cx="1190.0" cy="372.4" r="1.0" fill="#d41a1a"/><circle cx="1189.1" cy="373.4" r="1.0" fill="#d41a1a"/><circle cx="1188.1" cy="374.4" r="1.0" fill="#d41a1a"/><circle cx="1187.1" cy="375.3" r="1.0" fill="#d41a1a"/><circle cx="1185.9" cy="376.0" r="1.0" fill="#d41a1a"/><circle cx="1184.7" cy="376.7" r="1.0" fill="#d41a1a"/><circle cx="1183.4" cy="377.2" r="1.0" fill="#d41a1a"/><circle cx="1182.0" cy="377.5" r="1.0" fill="#d41a1a"/><circle cx="1180.7" cy="377.7" r="1.0" fill="#d41a1a"/><circle cx="1179.3" cy="377.8" r="1.0" fill="#d41a1a"/><circle cx="1177.9" cy="377.7" r="1.0" fill="#d41a1a"/><circle cx="1176.6" cy="377.5" r="1.0" fill="#d41a1a"/><circle cx="1175.2" cy="377.2" r="1.0" fill="#d41a1a"/><circle cx="1173.9" cy="376.7" r="1.0" fill="#d41a1a"/><circle cx="1172.7" cy="376.0" r="1.0" fill="#d41a1a"/><circle cx="1171.5" cy="375.3" r="1.0" fill="#d41a1a"/><circle cx="1170.5" cy="374.4" r="1.0" fill="#d41a1a"/><circle cx="1169.5" cy="373.4" r="1.0" fill="#d41a1a"/><circle cx="1168.6" cy="372.4" r="1.0" fill="#d41a1a"/><circle cx="1167.9" cy="371.2" r="1.0" fill="#d41a1a"/><circle cx="1167.2" cy="370.0" r="1.0" fill="#d41a1a"/><circle cx="1166.7" cy="368.7" r="1.0" fill="#d41a1a"/><circle cx="1166.4" cy="367.3" r="1.0" fill="#d41a1a"/><circle cx="1166.2" cy="366.0" r="1.0" fill="#d41a1a"/><circle cx="1166.1" cy="364.6" r="1.0" fill="#d41a1a"/><circle cx="1166.2" cy="363.2" r="1.0" fill="#d41a1a"/><circle cx="1166.4" cy="361.9" r="1.0" fill="#d41a1a"/><circle cx="1166.7" cy="360.5" r="1.0" fill="#d41a1a"/><circle cx="1167.2" cy="359.2" r="1.0" fill="#d41a1a"/><circle cx="1167.9" cy="358.0" r="1.0" fill="#d41a1a"/><circle cx="1168.6" cy="356.8" r="1.0" fill="#d41a1a"/><circle cx="1169.5" cy="355.8" r="1.0" fill="#d41a1a"/><circle cx="1170.5" cy="354.8" r="1.0" fill="#d41a1a"/><circle cx="1171.5" cy="353.9" r="1.0" fill="#d41a1a"/><circle cx="1172.7" cy="353.2" r="1.0" fill="#d41a1a"/><circle cx="1173.9" cy="352.5" r="1.0" fill="#d41a1a"/><circle cx="1175.2" cy="352.0" r="1.0" fill="#d41a1a"/><circle cx="1176.6" cy="351.7" r="1.0" fill="#d41a1a"/><circle cx="1177.9" cy="351.5" r="1.0" fill="#d41a1a"/><circle cx="1179.3" cy="351.4" r="1.0" fill="#d41a1a"/><circle cx="1180.7" cy="351.5" r="1.0" fill="#d41a1a"/><circle cx="1182.0" cy="351.7" r="1.0" fill="#d41a1a"/><circle cx="1183.4" cy="352.0" r="1.0" fill="#d41a1a"/><circle cx="1184.7" cy="352.5" r="1.0" fill="#d41a1a"/><circle cx="1185.9" cy="353.2" r="1.0" fill="#d41a1a"/><circle cx="1187.1" cy="353.9" r="1.0" fill="#d41a1a"/><circle cx="1188.1" cy="354.8" r="1.0" fill="#d41a1a"/><circle cx="1189.1" cy="355.8" r="1.0" fill="#d41a1a"/><circle cx="1190.0" cy="356.8" r="1.0" fill="#d41a1a"/><circle cx="1190.7" cy="358.0" r="1.0" fill="#d41a1a"/><circle cx="1191.4" cy="359.2" r="1.0" fill="#d41a1a"/><circle cx="1191.9" cy="360.5" r="1.0" fill="#d41a1a"/><circle cx="1192.2" cy="361.9" r="1.0" fill="#d41a1a"/><circle cx="1192.4" cy="363.2" r="1.0" fill="#d41a1a"/><circle cx="1193.9" cy="364.6" r="1.0" fill="#d41a1a"/><circle cx="1193.8" cy="366.1" r="1.0" fill="#d41a1a"/><circle cx="1193.6" cy="367.6" r="1.0" fill="#d41a1a"/><circle cx="1193.2" cy="369.1" r="1.0" fill="#d41a1a"/><circle cx="1192.6" cy="370.5" r="1.0" fill="#d41a1a"/><circle cx="1191.9" cy="371.9" r="1.0" fill="#d41a1a"/><circle cx="1191.1" cy="373.2" r="1.0" fill="#d41a1a"/><circle cx="1190.1" cy="374.4" r="1.0" fill="#d41a1a"/><circle cx="1189.1" cy="375.4" r="1.0" fill="#d41a1a"/><circle cx="1187.9" cy="376.4" r="1.0" fill="#d41a1a"/><circle cx="1186.6" cy="377.2" r="1.0" fill="#d41a1a"/><circle cx="1185.2" cy="377.9" r="1.0" fill="#d41a1a"/><circle cx="1183.8" cy="378.5" r="1.0" fill="#d41a1a"/><circle cx="1182.3" cy="378.9" r="1.0" fill="#d41a1a"/><circle cx="1180.8" cy="379.1" r="1.0" fill="#d41a1a"/><circle cx="1179.3" cy="379.2" r="1.0" fill="#d41a1a"/><circle cx="1177.8" cy="379.1" r="1.0" fill="#d41a1a"/><circle cx="1176.3" cy="378.9" r="1.0" fill="#d41a1a"/><circle cx="1174.8" cy="378.5" r="1.0" fill="#d41a1a"/><circle cx="1173.4" cy="377.9" r="1.0" fill="#d41a1a"/><circle cx="1172.0" cy="377.2" r="1.0" fill="#d41a1a"/><circle cx="1170.7" cy="376.4" r="1.0" fill="#d41a1a"/><circle cx="1169.5" cy="375.4" r="1.0" fill="#d41a1a"/><circle cx="1168.5" cy="374.4" r="1.0" fill="#d41a1a"/><circle cx="1167.5" cy="373.2" r="1.0" fill="#d41a1a"/><circle cx="1166.7" cy="371.9" r="1.0" fill="#d41a1a"/><circle cx="1166.0" cy="370.5" r="1.0" fill="#d41a1a"/><circle cx="1165.4" cy="369.1" r="1.0" fill="#d41a1a"/><circle cx="1165.0" cy="367.6" r="1.0" fill="#d41a1a"/><circle cx="1164.8" cy="366.1" r="1.0" fill="#d41a1a"/><circle cx="1164.7" cy="364.6" r="1.0" fill="#d41a1a"/><circle cx="1164.8" cy="363.1" r="1.0" fill="#d41a1a"/><circle cx="1165.0" cy="361.6" r="1.0" fill="#d41a1a"/><circle cx="1165.4" cy="360.1" r="1.0" fill="#d41a1a"/><circle cx="1166.0" cy="358.7" r="1.0" fill="#d41a1a"/><circle cx="1166.7" cy="357.3" r="1.0" fill="#d41a1a"/><circle cx="1167.5" cy="356.0" r="1.0" fill="#d41a1a"/><circle cx="1168.5" cy="354.8" r="1.0" fill="#d41a1a"/><circle cx="1169.5" cy="353.8" r="1.0" fill="#d41a1a"/><circle cx="1170.7" cy="352.8" r="1.0" fill="#d41a1a"/><circle cx="1172.0" cy="352.0" r="1.0" fill="#d41a1a"/><circle cx="1173.4" cy="351.3" r="1.0" fill="#d41a1a"/><circle cx="1174.8" cy="350.7" r="1.0" fill="#d41a1a"/><circle cx="1176.3" cy="350.3" r="1.0" fill="#d41a1a"/><circle cx="1177.8" cy="350.1" r="1.0" fill="#d41a1a"/><circle cx="1179.3" cy="350.0" r="1.0" fill="#d41a1a"/><circle cx="1180.8" cy="350.1" r="1.0" fill="#d41a1a"/><circle cx="1182.3" cy="350.3" r="1.0" fill="#d41a1a"/><circle cx="1183.8" cy="350.7" r="1.0" fill="#d41a1a"/><circle cx="1185.2" cy="351.3" r="1.0" fill="#d41a1a"/><circle cx="1186.6" cy="352.0" r="1.0" fill="#d41a1a"/><circle cx="1187.9" cy="352.8" r="1.0" fill="#d41a1a"/><circle cx="1189.1" cy="353.8" r="1.0" fill="#d41a1a"/><circle cx="1190.1" cy="354.8" r="1.0" fill="#d41a1a"/><circle cx="1191.1" cy="356.0" r="1.0" fill="#d41a1a"/><circle cx="1191.9" cy="357.3" r="1.0" fill="#d41a1a"/><circle cx="1192.6" cy="358.7" r="1.0" fill="#d41a1a"/><circle cx="1193.2" cy="360.1" r="1.0" fill="#d41a1a"/><circle cx="1193.6" cy="361.6" r="1.0" fill="#d41a1a"/><circle cx="1193.8" cy="363.1" r="1.0" fill="#d41a1a"/><circle cx="1195.5" cy="364.6" r="0.9" fill="#3838c0"/><circle cx="1195.4" cy="366.4" r="0.9" fill="#3838c0"/><circle cx="1195.1" cy="368.2" r="0.9" fill="#3838c0"/><circle cx="1194.6" cy="370.0" r="0.9" fill="#3838c0"/><circle cx="1193.9" cy="371.6" r="0.9" fill="#3838c0"/><circle cx="1193.0" cy="373.2" r="0.9" fill="#3838c0"/><circle cx="1192.0" cy="374.7" r="0.9" fill="#3838c0"/><circle cx="1190.8" cy="376.1" r="0.9" fill="#3838c0"/><circle cx="1189.4" cy="377.3" r="0.9" fill="#3838c0"/><circle cx="1187.9" cy="378.3" r="0.9" fill="#3838c0"/><circle cx="1186.3" cy="379.2" r="0.9" fill="#3838c0"/><circle cx="1184.7" cy="379.9" r="0.9" fill="#3838c0"/><circle cx="1182.9" cy="380.4" r="0.9" fill="#3838c0"/><circle cx="1181.1" cy="380.7" r="0.9" fill="#3838c0"/><circle cx="1179.3" cy="380.8" r="0.9" fill="#3838c0"/><circle cx="1177.5" cy="380.7" r="0.9" fill="#3838c0"/><circle cx="1175.7" cy="380.4" r="0.9" fill="#3838c0"/><circle cx="1173.9" cy="379.9" r="0.9" fill="#3838c0"/><circle cx="1172.3" cy="379.2" r="0.9" fill="#3838c0"/><circle cx="1170.7" cy="378.3" r="0.9" fill="#3838c0"/><circle cx="1169.2" cy="377.3" r="0.9" fill="#3838c0"/><circle cx="1167.8" cy="376.1" r="0.9" fill="#3838c0"/><circle cx="1166.6" cy="374.7" r="0.9" fill="#3838c0"/><circle cx="1165.6" cy="373.2" r="0.9" fill="#3838c0"/><circle cx="1164.7" cy="371.6" r="0.9" fill="#3838c0"/><circle cx="1164.0" cy="370.0" r="0.9" fill="#3838c0"/><circle cx="1163.5" cy="368.2" r="0.9" fill="#3838c0"/><circle cx="1163.2" cy="366.4" r="0.9" fill="#3838c0"/><circle cx="1163.1" cy="364.6" r="0.9" fill="#3838c0"/><circle cx="1163.2" cy="362.8" r="0.9" fill="#3838c0"/><circle cx="1163.5" cy="361.0" r="0.9" fill="#3838c0"/><circle cx="1164.0" cy="359.2" r="0.9" fill="#3838c0"/><circle cx="1164.7" cy="357.6" r="0.9" fill="#3838c0"/><circle cx="1165.6" cy="356.0" r="0.9" fill="#3838c0"/><circle cx="1166.6" cy="354.5" r="0.9" fill="#3838c0"/><circle cx="1167.8" cy="353.1" r="0.9" fill="#3838c0"/><circle cx="1169.2" cy="351.9" r="0.9" fill="#3838c0"/><circle cx="1170.7" cy="350.9" r="0.9" fill="#3838c0"/><circle cx="1172.3" cy="350.0" r="0.9" fill="#3838c0"/><circle cx="1173.9" cy="349.3" r="0.9" fill="#3838c0"/><circle cx="1175.7" cy="348.8" r="0.9" fill="#3838c0"/><circle cx="1177.5" cy="348.5" r="0.9" fill="#3838c0"/><circle cx="1179.3" cy="348.4" r="0.9" fill="#3838c0"/><circle cx="1181.1" cy="348.5" r="0.9" fill="#3838c0"/><circle cx="1182.9" cy="348.8" r="0.9" fill="#3838c0"/><circle cx="1184.7" cy="349.3" r="0.9" fill="#3838c0"/><circle cx="1186.3" cy="350.0" r="0.9" fill="#3838c0"/><circle cx="1187.9" cy="350.9" r="0.9" fill="#3838c0"/><circle cx="1189.4" cy="351.9" r="0.9" fill="#3838c0"/><circle cx="1190.8" cy="353.1" r="0.9" fill="#3838c0"/><circle cx="1192.0" cy="354.5" r="0.9" fill="#3838c0"/><circle cx="1193.0" cy="356.0" r="0.9" fill="#3838c0"/><circle cx="1193.9" cy="357.6" r="0.9" fill="#3838c0"/><circle cx="1194.6" cy="359.2" r="0.9" fill="#3838c0"/><circle cx="1195.1" cy="361.0" r="0.9" fill="#3838c0"/><circle cx="1195.4" cy="362.8" r="0.9" fill="#3838c0"/><circle cx="1189.5" cy="364.6" r="0.9" fill="#f0f0a0"/><circle cx="1189.4" cy="366.0" r="0.9" fill="#f0f0a0"/><circle cx="1189.1" cy="367.4" r="0.9" fill="#f0f0a0"/><circle cx="1188.7" cy="368.7" r="0.9" fill="#f0f0a0"/><circle cx="1188.0" cy="369.9" r="0.9" fill="#f0f0a0"/><circle cx="1187.2" cy="371.0" r="0.9" fill="#f0f0a0"/><circle cx="1186.3" cy="372.1" r="0.9" fill="#f0f0a0"/><circle cx="1185.2" cy="372.9" r="0.9" fill="#f0f0a0"/><circle cx="1184.0" cy="373.7" r="0.9" fill="#f0f0a0"/><circle cx="1182.7" cy="374.2" r="0.9" fill="#f0f0a0"/><circle cx="1181.4" cy="374.6" r="0.9" fill="#f0f0a0"/><circle cx="1180.0" cy="374.8" r="0.9" fill="#f0f0a0"/><circle cx="1178.6" cy="374.8" r="0.9" fill="#f0f0a0"/><circle cx="1177.2" cy="374.6" r="0.9" fill="#f0f0a0"/><circle cx="1175.9" cy="374.2" r="0.9" fill="#f0f0a0"/><circle cx="1174.6" cy="373.7" r="0.9" fill="#f0f0a0"/><circle cx="1173.4" cy="372.9" r="0.9" fill="#f0f0a0"/><circle cx="1172.3" cy="372.1" r="0.9" fill="#f0f0a0"/><circle cx="1171.4" cy="371.0" r="0.9" fill="#f0f0a0"/><circle cx="1170.6" cy="369.9" r="0.9" fill="#f0f0a0"/><circle cx="1169.9" cy="368.7" r="0.9" fill="#f0f0a0"/><circle cx="1169.5" cy="367.4" r="0.9" fill="#f0f0a0"/><circle cx="1169.2" cy="366.0" r="0.9" fill="#f0f0a0"/><circle cx="1169.1" cy="364.6" r="0.9" fill="#f0f0a0"/><circle cx="1169.2" cy="363.2" r="0.9" fill="#f0f0a0"/><circle cx="1169.5" cy="361.8" r="0.9" fill="#f0f0a0"/><circle cx="1169.9" cy="360.5" r="0.9" fill="#f0f0a0"/><circle cx="1170.6" cy="359.3" r="0.9" fill="#f0f0a0"/><circle cx="1171.4" cy="358.2" r="0.9" fill="#f0f0a0"/><circle cx="1172.3" cy="357.1" r="0.9" fill="#f0f0a0"/><circle cx="1173.4" cy="356.3" r="0.9" fill="#f0f0a0"/><circle cx="1174.6" cy="355.5" r="0.9" fill="#f0f0a0"/><circle cx="1175.9" cy="355.0" r="0.9" fill="#f0f0a0"/><circle cx="1177.2" cy="354.6" r="0.9" fill="#f0f0a0"/><circle cx="1178.6" cy="354.4" r="0.9" fill="#f0f0a0"/><circle cx="1180.0" cy="354.4" r="0.9" fill="#f0f0a0"/><circle cx="1181.4" cy="354.6" r="0.9" fill="#f0f0a0"/><circle cx="1182.7" cy="355.0" r="0.9" fill="#f0f0a0"/><circle cx="1184.0" cy="355.5" r="0.9" fill="#f0f0a0"/><circle cx="1185.2" cy="356.3" r="0.9" fill="#f0f0a0"/><circle cx="1186.3" cy="357.1" r="0.9" fill="#f0f0a0"/><circle cx="1187.2" cy="358.2" r="0.9" fill="#f0f0a0"/><circle cx="1188.0" cy="359.3" r="0.9" fill="#f0f0a0"/><circle cx="1188.7" cy="360.5" r="0.9" fill="#f0f0a0"/><circle cx="1189.1" cy="361.8" r="0.9" fill="#f0f0a0"/><circle cx="1189.4" cy="363.2" r="0.9" fill="#f0f0a0"/><circle cx="1187.7" cy="364.6" r="0.9" fill="#a83020"/><circle cx="1187.6" cy="365.9" r="0.9" fill="#a83020"/><circle cx="1187.3" cy="367.2" r="0.9" fill="#a83020"/><circle cx="1186.8" cy="368.4" r="0.9" fill="#a83020"/><circle cx="1186.1" cy="369.5" r="0.9" fill="#a83020"/><circle cx="1185.2" cy="370.5" r="0.9" fill="#a83020"/><circle cx="1184.2" cy="371.4" r="0.9" fill="#a83020"/><circle cx="1183.1" cy="372.1" r="0.9" fill="#a83020"/><circle cx="1181.9" cy="372.6" r="0.9" fill="#a83020"/><circle cx="1180.6" cy="372.9" r="0.9" fill="#a83020"/><circle cx="1179.3" cy="373.0" r="0.9" fill="#a83020"/><circle cx="1178.0" cy="372.9" r="0.9" fill="#a83020"/><circle cx="1176.7" cy="372.6" r="0.9" fill="#a83020"/><circle cx="1175.5" cy="372.1" r="0.9" fill="#a83020"/><circle cx="1174.4" cy="371.4" r="0.9" fill="#a83020"/><circle cx="1173.4" cy="370.5" r="0.9" fill="#a83020"/><circle cx="1172.5" cy="369.5" r="0.9" fill="#a83020"/><circle cx="1171.8" cy="368.4" r="0.9" fill="#a83020"/><circle cx="1171.3" cy="367.2" r="0.9" fill="#a83020"/><circle cx="1171.0" cy="365.9" r="0.9" fill="#a83020"/><circle cx="1170.9" cy="364.6" r="0.9" fill="#a83020"/><circle cx="1171.0" cy="363.3" r="0.9" fill="#a83020"/><circle cx="1171.3" cy="362.0" r="0.9" fill="#a83020"/><circle cx="1171.8" cy="360.8" r="0.9" fill="#a83020"/><circle cx="1172.5" cy="359.7" r="0.9" fill="#a83020"/><circle cx="1173.4" cy="358.7" r="0.9" fill="#a83020"/><circle cx="1174.4" cy="357.8" r="0.9" fill="#a83020"/><circle cx="1175.5" cy="357.1" r="0.9" fill="#a83020"/><circle cx="1176.7" cy="356.6" r="0.9" fill="#a83020"/><circle cx="1178.0" cy="356.3" r="0.9" fill="#a83020"/><circle cx="1179.3" cy="356.2" r="0.9" fill="#a83020"/><circle cx="1180.6" cy="356.3" r="0.9" fill="#a83020"/><circle cx="1181.9" cy="356.6" r="0.9" fill="#a83020"/><circle cx="1183.1" cy="357.1" r="0.9" fill="#a83020"/><circle cx="1184.2" cy="357.8" r="0.9" fill="#a83020"/><circle cx="1185.2" cy="358.7" r="0.9" fill="#a83020"/><circle cx="1186.1" cy="359.7" r="0.9" fill="#a83020"/><circle cx="1186.8" cy="360.8" r="0.9" fill="#a83020"/><circle cx="1187.3" cy="362.0" r="0.9" fill="#a83020"/><circle cx="1187.6" cy="363.3" r="0.9" fill="#a83020"/><circle cx="1186.2" cy="364.6" r="0.8" fill="#d8f0c8"/><circle cx="1186.1" cy="365.9" r="0.8" fill="#d8f0c8"/><circle cx="1185.7" cy="367.1" r="0.8" fill="#d8f0c8"/><circle cx="1185.2" cy="368.2" r="0.8" fill="#d8f0c8"/><circle cx="1184.4" cy="369.2" r="0.8" fill="#d8f0c8"/><circle cx="1183.5" cy="370.1" r="0.8" fill="#d8f0c8"/><circle cx="1182.4" cy="370.8" r="0.8" fill="#d8f0c8"/><circle cx="1181.2" cy="371.2" r="0.8" fill="#d8f0c8"/><circle cx="1179.9" cy="371.5" r="0.8" fill="#d8f0c8"/><circle cx="1178.7" cy="371.5" r="0.8" fill="#d8f0c8"/><circle cx="1177.4" cy="371.2" r="0.8" fill="#d8f0c8"/><circle cx="1176.2" cy="370.8" r="0.8" fill="#d8f0c8"/><circle cx="1175.1" cy="370.1" r="0.8" fill="#d8f0c8"/><circle cx="1174.2" cy="369.2" r="0.8" fill="#d8f0c8"/><circle cx="1173.4" cy="368.2" r="0.8" fill="#d8f0c8"/><circle cx="1172.9" cy="367.1" r="0.8" fill="#d8f0c8"/><circle cx="1172.5" cy="365.9" r="0.8" fill="#d8f0c8"/><circle cx="1172.4" cy="364.6" r="0.8" fill="#d8f0c8"/><circle cx="1172.5" cy="363.3" r="0.8" fill="#d8f0c8"/><circle cx="1172.9" cy="362.1" r="0.8" fill="#d8f0c8"/><circle cx="1173.4" cy="361.0" r="0.8" fill="#d8f0c8"/><circle cx="1174.2" cy="360.0" r="0.8" fill="#d8f0c8"/><circle cx="1175.1" cy="359.1" r="0.8" fill="#d8f0c8"/><circle cx="1176.2" cy="358.4" r="0.8" fill="#d8f0c8"/><circle cx="1177.4" cy="358.0" r="0.8" fill="#d8f0c8"/><circle cx="1178.7" cy="357.7" r="0.8" fill="#d8f0c8"/><circle cx="1179.9" cy="357.7" r="0.8" fill="#d8f0c8"/><circle cx="1181.2" cy="358.0" r="0.8" fill="#d8f0c8"/><circle cx="1182.4" cy="358.4" r="0.8" fill="#d8f0c8"/><circle cx="1183.5" cy="359.1" r="0.8" fill="#d8f0c8"/><circle cx="1184.4" cy="360.0" r="0.8" fill="#d8f0c8"/><circle cx="1185.2" cy="361.0" r="0.8" fill="#d8f0c8"/><circle cx="1185.7" cy="362.1" r="0.8" fill="#d8f0c8"/><circle cx="1186.1" cy="363.3" r="0.8" fill="#d8f0c8"/><circle cx="1184.7" cy="364.6" r="1.0" fill="#2040d0"/><circle cx="1184.6" cy="365.8" r="1.0" fill="#2040d0"/><circle cx="1184.2" cy="366.9" r="1.0" fill="#2040d0"/><circle cx="1183.5" cy="368.0" r="1.0" fill="#2040d0"/><circle cx="1182.7" cy="368.8" r="1.0" fill="#2040d0"/><circle cx="1181.6" cy="369.5" r="1.0" fill="#2040d0"/><circle cx="1180.5" cy="369.9" r="1.0" fill="#2040d0"/><circle cx="1179.3" cy="370.0" r="1.0" fill="#2040d0"/><circle cx="1178.1" cy="369.9" r="1.0" fill="#2040d0"/><circle cx="1177.0" cy="369.5" r="1.0" fill="#2040d0"/><circle cx="1175.9" cy="368.8" r="1.0" fill="#2040d0"/><circle cx="1175.1" cy="368.0" r="1.0" fill="#2040d0"/><circle cx="1174.4" cy="366.9" r="1.0" fill="#2040d0"/><circle cx="1174.0" cy="365.8" r="1.0" fill="#2040d0"/><circle cx="1173.9" cy="364.6" r="1.0" fill="#2040d0"/><circle cx="1174.0" cy="363.4" r="1.0" fill="#2040d0"/><circle cx="1174.4" cy="362.3" r="1.0" fill="#2040d0"/><circle cx="1175.1" cy="361.2" r="1.0" fill="#2040d0"/><circle cx="1175.9" cy="360.4" r="1.0" fill="#2040d0"/><circle cx="1177.0" cy="359.7" r="1.0" fill="#2040d0"/><circle cx="1178.1" cy="359.3" r="1.0" fill="#2040d0"/><circle cx="1179.3" cy="359.2" r="1.0" fill="#2040d0"/><circle cx="1180.5" cy="359.3" r="1.0" fill="#2040d0"/><circle cx="1181.6" cy="359.7" r="1.0" fill="#2040d0"/><circle cx="1182.7" cy="360.4" r="1.0" fill="#2040d0"/><circle cx="1183.5" cy="361.2" r="1.0" fill="#2040d0"/><circle cx="1184.2" cy="362.3" r="1.0" fill="#2040d0"/><circle cx="1184.6" cy="363.4" r="1.0" fill="#2040d0"/><circle cx="1180.3" cy="364.6" r="0.9" fill="#78f078"/><circle cx="1180.1" cy="365.1" r="0.9" fill="#78f078"/><circle cx="1179.7" cy="365.5" r="0.9" fill="#78f078"/><circle cx="1179.2" cy="365.6" r="0.9" fill="#78f078"/><circle cx="1178.6" cy="365.4" r="0.9" fill="#78f078"/><circle cx="1178.3" cy="364.9" r="0.9" fill="#78f078"/><circle cx="1178.3" cy="364.3" r="0.9" fill="#78f078"/><circle cx="1178.6" cy="363.8" r="0.9" fill="#78f078"/><circle cx="1179.2" cy="363.6" r="0.9" fill="#78f078"/><circle cx="1179.7" cy="363.7" r="0.9" fill="#78f078"/><circle cx="1180.1" cy="364.1" r="0.9" fill="#78f078"/><circle cx="1181.5" cy="364.6" r="0.9" fill="#78f078"/><circle cx="1181.4" cy="365.4" r="0.9" fill="#78f078"/><circle cx="1180.9" cy="366.1" r="0.9" fill="#78f078"/><circle cx="1180.3" cy="366.6" r="0.9" fill="#78f078"/><circle cx="1179.5" cy="366.8" r="0.9" fill="#78f078"/><circle cx="1178.7" cy="366.7" r="0.9" fill="#78f078"/><circle cx="1178.0" cy="366.4" r="0.9" fill="#78f078"/><circle cx="1177.4" cy="365.8" r="0.9" fill="#78f078"/><circle cx="1177.1" cy="365.0" r="0.9" fill="#78f078"/><circle cx="1177.1" cy="364.2" r="0.9" fill="#78f078"/><circle cx="1177.4" cy="363.4" r="0.9" fill="#78f078"/><circle cx="1178.0" cy="362.8" r="0.9" fill="#78f078"/><circle cx="1178.7" cy="362.5" r="0.9" fill="#78f078"/><circle cx="1179.5" cy="362.4" r="0.9" fill="#78f078"/><circle cx="1180.3" cy="362.6" r="0.9" fill="#78f078"/><circle cx="1180.9" cy="363.1" r="0.9" fill="#78f078"/><circle cx="1181.4" cy="363.8" r="0.9" fill="#78f078"/><circle cx="1182.7" cy="364.6" r="0.9" fill="#78f078"/><circle cx="1182.6" cy="365.5" r="0.9" fill="#78f078"/><circle cx="1182.2" cy="366.4" r="0.9" fill="#78f078"/><circle cx="1181.6" cy="367.1" r="0.9" fill="#78f078"/><circle cx="1180.9" cy="367.6" r="0.9" fill="#78f078"/><circle cx="1180.0" cy="367.9" r="0.9" fill="#78f078"/><circle cx="1179.1" cy="368.0" r="0.9" fill="#78f078"/><circle cx="1178.2" cy="367.8" r="0.9" fill="#78f078"/><circle cx="1177.3" cy="367.4" r="0.9" fill="#78f078"/><circle cx="1176.7" cy="366.7" r="0.9" fill="#78f078"/><circle cx="1176.2" cy="366.0" r="0.9" fill="#78f078"/><circle cx="1175.9" cy="365.1" r="0.9" fill="#78f078"/><circle cx="1175.9" cy="364.1" r="0.9" fill="#78f078"/><circle cx="1176.2" cy="363.2" r="0.9" fill="#78f078"/><circle cx="1176.7" cy="362.5" r="0.9" fill="#78f078"/><circle cx="1177.3" cy="361.8" r="0.9" fill="#78f078"/><circle cx="1178.2" cy="361.4" r="0.9" fill="#78f078"/><circle cx="1179.1" cy="361.2" r="0.9" fill="#78f078"/><circle cx="1180.0" cy="361.3" r="0.9" fill="#78f078"/><circle cx="1180.9" cy="361.6" r="0.9" fill="#78f078"/><circle cx="1181.6" cy="362.1" r="0.9" fill="#78f078"/><circle cx="1182.2" cy="362.8" r="0.9" fill="#78f078"/><circle cx="1182.6" cy="363.7" r="0.9" fill="#78f078"/><circle cx="1490.2" cy="314.0" r="0.9" fill="#78f078"/><circle cx="1490.1" cy="314.5" r="0.9" fill="#78f078"/><circle cx="1489.6" cy="315.0" r="0.9" fill="#78f078"/><circle cx="1489.8" cy="315.5" r="0.9" fill="#78f078"/><circle cx="1490.0" cy="316.0" r="0.9" fill="#78f078"/><circle cx="1490.4" cy="316.5" r="0.9" fill="#78f078"/><circle cx="1491.3" cy="317.0" r="0.9" fill="#78f078"/><circle cx="1491.7" cy="317.5" r="0.9" fill="#78f078"/><circle cx="1488.1" cy="318.0" r="0.9" fill="#78f078"/><circle cx="1491.9" cy="318.5" r="0.9" fill="#78f078"/><circle cx="1492.0" cy="319.0" r="0.9" fill="#78f078"/><circle cx="1492.5" cy="319.5" r="0.9" fill="#78f078"/><circle cx="1490.7" cy="320.0" r="0.9" fill="#78f078"/><circle cx="1488.5" cy="320.5" r="0.9" fill="#78f078"/><circle cx="1493.0" cy="321.0" r="0.9" fill="#78f078"/><circle cx="1492.8" cy="321.5" r="0.9" fill="#78f078"/><circle cx="1512.3" cy="371.3" r="0.85" fill="#78f078"/><circle cx="1511.9" cy="375.1" r="0.85" fill="#78f078"/><circle cx="1511.7" cy="380.1" r="0.85" fill="#78f078"/><circle cx="1510.8" cy="384.3" r="0.85" fill="#78f078"/><circle cx="1510.5" cy="388.0" r="0.85" fill="#78f078"/><circle cx="1509.1" cy="392.3" r="0.85" fill="#78f078"/><circle cx="1507.7" cy="395.6" r="0.85" fill="#78f078"/><circle cx="1506.0" cy="399.4" r="0.85" fill="#78f078"/><circle cx="1504.7" cy="402.2" r="0.85" fill="#78f078"/><circle cx="1502.2" cy="405.2" r="0.85" fill="#78f078"/><circle cx="1500.7" cy="407.0" r="0.85" fill="#78f078"/><circle cx="1498.4" cy="409.4" r="0.85" fill="#78f078"/><circle cx="1496.4" cy="410.5" r="0.85" fill="#78f078"/><circle cx="1493.7" cy="411.5" r="0.85" fill="#78f078"/><circle cx="1491.1" cy="411.7" r="0.85" fill="#78f078"/><circle cx="1488.8" cy="412.1" r="0.85" fill="#78f078"/><circle cx="1486.5" cy="411.5" r="0.85" fill="#78f078"/><circle cx="1484.2" cy="410.5" r="0.85" fill="#78f078"/><circle cx="1481.8" cy="408.7" r="0.85" fill="#78f078"/><circle cx="1480.3" cy="407.1" r="0.85" fill="#78f078"/><circle cx="1477.5" cy="405.0" r="0.85" fill="#78f078"/><circle cx="1476.2" cy="402.0" r="0.85" fill="#78f078"/><circle cx="1474.3" cy="399.1" r="0.85" fill="#78f078"/><circle cx="1472.7" cy="395.4" r="0.85" fill="#78f078"/><circle cx="1471.0" cy="392.5" r="0.85" fill="#78f078"/><circle cx="1470.5" cy="388.2" r="0.85" fill="#78f078"/><circle cx="1469.4" cy="383.9" r="0.85" fill="#78f078"/><circle cx="1468.9" cy="379.8" r="0.85" fill="#78f078"/><circle cx="1468.7" cy="375.6" r="0.85" fill="#78f078"/><circle cx="1468.5" cy="371.4" r="0.85" fill="#78f078"/><circle cx="1510.0" cy="370.6" r="0.85" fill="#78f078"/><circle cx="1509.8" cy="374.9" r="0.85" fill="#78f078"/><circle cx="1509.4" cy="378.8" r="0.85" fill="#78f078"/><circle cx="1509.2" cy="383.4" r="0.85" fill="#78f078"/><circle cx="1508.3" cy="387.3" r="0.85" fill="#78f078"/><circle cx="1507.7" cy="390.2" r="0.85" fill="#78f078"/><circle cx="1506.2" cy="393.9" r="0.85" fill="#78f078"/><circle cx="1504.4" cy="397.5" r="0.85" fill="#78f078"/><circle cx="1503.0" cy="400.0" r="0.85" fill="#78f078"/><circle cx="1501.5" cy="402.8" r="0.85" fill="#78f078"/><circle cx="1499.7" cy="404.5" r="0.85" fill="#78f078"/><circle cx="1497.6" cy="406.0" r="0.85" fill="#78f078"/><circle cx="1495.9" cy="408.0" r="0.85" fill="#78f078"/><circle cx="1493.2" cy="408.1" r="0.85" fill="#78f078"/><circle cx="1491.1" cy="408.8" r="0.85" fill="#78f078"/><circle cx="1489.4" cy="409.3" r="0.85" fill="#78f078"/><circle cx="1487.2" cy="408.1" r="0.85" fill="#78f078"/><circle cx="1485.1" cy="407.8" r="0.85" fill="#78f078"/><circle cx="1482.9" cy="406.7" r="0.85" fill="#78f078"/><circle cx="1480.5" cy="404.3" r="0.85" fill="#78f078"/><circle cx="1479.2" cy="402.8" r="0.85" fill="#78f078"/><circle cx="1477.4" cy="399.8" r="0.85" fill="#78f078"/><circle cx="1475.8" cy="397.3" r="0.85" fill="#78f078"/><circle cx="1474.0" cy="393.9" r="0.85" fill="#78f078"/><circle cx="1472.9" cy="390.3" r="0.85" fill="#78f078"/><circle cx="1472.0" cy="386.7" r="0.85" fill="#78f078"/><circle cx="1471.0" cy="382.8" r="0.85" fill="#78f078"/><circle cx="1470.8" cy="378.8" r="0.85" fill="#78f078"/><circle cx="1470.5" cy="374.9" r="0.85" fill="#78f078"/><circle cx="1469.8" cy="371.3" r="0.85" fill="#78f078"/><circle cx="1507.5" cy="371.3" r="0.85" fill="#78f078"/><circle cx="1507.9" cy="375.1" r="0.85" fill="#78f078"/><circle cx="1507.0" cy="378.5" r="0.85" fill="#78f078"/><circle cx="1506.5" cy="382.5" r="0.85" fill="#78f078"/><circle cx="1506.4" cy="385.8" r="0.85" fill="#78f078"/><circle cx="1505.2" cy="388.9" r="0.85" fill="#78f078"/><circle cx="1504.4" cy="392.2" r="0.85" fill="#78f078"/><circle cx="1503.0" cy="394.8" r="0.85" fill="#78f078"/><circle cx="1501.3" cy="397.3" r="0.85" fill="#78f078"/><circle cx="1500.2" cy="400.0" r="0.85" fill="#78f078"/><circle cx="1498.1" cy="402.2" r="0.85" fill="#78f078"/><circle cx="1496.5" cy="403.4" r="0.85" fill="#78f078"/><circle cx="1494.6" cy="404.5" r="0.85" fill="#78f078"/><circle cx="1493.3" cy="405.4" r="0.85" fill="#78f078"/><circle cx="1490.9" cy="405.9" r="0.85" fill="#78f078"/><circle cx="1489.1" cy="406.3" r="0.85" fill="#78f078"/><circle cx="1487.1" cy="405.9" r="0.85" fill="#78f078"/><circle cx="1485.2" cy="405.0" r="0.85" fill="#78f078"/><circle cx="1483.9" cy="403.3" r="0.85" fill="#78f078"/><circle cx="1482.0" cy="401.8" r="0.85" fill="#78f078"/><circle cx="1480.2" cy="399.7" r="0.85" fill="#78f078"/><circle cx="1478.8" cy="398.1" r="0.85" fill="#78f078"/><circle cx="1477.9" cy="395.4" r="0.85" fill="#78f078"/><circle cx="1475.9" cy="392.0" r="0.85" fill="#78f078"/><circle cx="1475.5" cy="388.7" r="0.85" fill="#78f078"/><circle cx="1474.5" cy="385.5" r="0.85" fill="#78f078"/><circle cx="1474.0" cy="381.8" r="0.85" fill="#78f078"/><circle cx="1473.4" cy="378.4" r="0.85" fill="#78f078"/><circle cx="1472.5" cy="374.4" r="0.85" fill="#78f078"/><circle cx="1473.0" cy="371.0" r="0.85" fill="#78f078"/><circle cx="1504.9" cy="370.9" r="0.85" fill="#78f078"/><circle cx="1505.4" cy="374.2" r="0.85" fill="#78f078"/><circle cx="1504.9" cy="377.6" r="0.85" fill="#78f078"/><circle cx="1504.2" cy="381.4" r="0.85" fill="#78f078"/><circle cx="1504.0" cy="384.2" r="0.85" fill="#78f078"/><circle cx="1502.7" cy="387.2" r="0.85" fill="#78f078"/><circle cx="1502.2" cy="390.4" r="0.85" fill="#78f078"/><circle cx="1500.9" cy="392.8" r="0.85" fill="#78f078"/><circle cx="1500.0" cy="395.6" r="0.85" fill="#78f078"/><circle cx="1498.9" cy="397.6" r="0.85" fill="#78f078"/><circle cx="1497.0" cy="398.9" r="0.85" fill="#78f078"/><circle cx="1495.9" cy="400.7" r="0.85" fill="#78f078"/><circle cx="1494.4" cy="401.5" r="0.85" fill="#78f078"/><circle cx="1492.9" cy="402.4" r="0.85" fill="#78f078"/><circle cx="1491.3" cy="403.2" r="0.85" fill="#78f078"/><circle cx="1489.4" cy="402.6" r="0.85" fill="#78f078"/><circle cx="1488.1" cy="402.6" r="0.85" fill="#78f078"/><circle cx="1486.5" cy="401.6" r="0.85" fill="#78f078"/><circle cx="1484.4" cy="401.0" r="0.85" fill="#78f078"/><circle cx="1483.1" cy="399.0" r="0.85" fill="#78f078"/><circle cx="1481.7" cy="397.6" r="0.85" fill="#78f078"/><circle cx="1480.1" cy="395.4" r="0.85" fill="#78f078"/><circle cx="1479.3" cy="393.0" r="0.85" fill="#78f078"/><circle cx="1478.0" cy="390.5" r="0.85" fill="#78f078"/><circle cx="1477.6" cy="387.8" r="0.85" fill="#78f078"/><circle cx="1476.4" cy="384.6" r="0.85" fill="#78f078"/><circle cx="1475.9" cy="381.4" r="0.85" fill="#78f078"/><circle cx="1475.2" cy="378.2" r="0.85" fill="#78f078"/><circle cx="1475.7" cy="374.5" r="0.85" fill="#78f078"/><circle cx="1475.2" cy="371.0" r="0.85" fill="#78f078"/><circle cx="1502.7" cy="370.6" r="0.85" fill="#78f078"/><circle cx="1503.0" cy="373.8" r="0.85" fill="#78f078"/><circle cx="1502.2" cy="376.7" r="0.85" fill="#78f078"/><circle cx="1501.8" cy="380.2" r="0.85" fill="#78f078"/><circle cx="1501.2" cy="382.4" r="0.85" fill="#78f078"/><circle cx="1501.1" cy="385.2" r="0.85" fill="#78f078"/><circle cx="1499.8" cy="388.0" r="0.85" fill="#78f078"/><circle cx="1499.3" cy="390.3" r="0.85" fill="#78f078"/><circle cx="1498.5" cy="392.0" r="0.85" fill="#78f078"/><circle cx="1497.5" cy="394.3" r="0.85" fill="#78f078"/><circle cx="1495.7" cy="395.4" r="0.85" fill="#78f078"/><circle cx="1494.8" cy="397.0" r="0.85" fill="#78f078"/><circle cx="1493.4" cy="397.7" r="0.85" fill="#78f078"/><circle cx="1492.1" cy="398.3" r="0.85" fill="#78f078"/><circle cx="1491.0" cy="399.2" r="0.85" fill="#78f078"/><circle cx="1489.2" cy="399.0" r="0.85" fill="#78f078"/><circle cx="1488.4" cy="398.4" r="0.85" fill="#78f078"/><circle cx="1487.1" cy="398.3" r="0.85" fill="#78f078"/><circle cx="1485.5" cy="396.9" r="0.85" fill="#78f078"/><circle cx="1484.6" cy="395.8" r="0.85" fill="#78f078"/><circle cx="1483.1" cy="394.5" r="0.85" fill="#78f078"/><circle cx="1482.3" cy="392.2" r="0.85" fill="#78f078"/><circle cx="1480.9" cy="390.1" r="0.85" fill="#78f078"/><circle cx="1480.2" cy="388.3" r="0.85" fill="#78f078"/><circle cx="1479.7" cy="385.8" r="0.85" fill="#78f078"/><circle cx="1479.1" cy="383.0" r="0.85" fill="#78f078"/><circle cx="1478.0" cy="380.0" r="0.85" fill="#78f078"/><circle cx="1478.4" cy="377.4" r="0.85" fill="#78f078"/><circle cx="1477.6" cy="374.0" r="0.85" fill="#78f078"/><circle cx="1477.8" cy="370.9" r="0.85" fill="#78f078"/><circle cx="1486.2" cy="322.1" r="0.8" fill="#78f078"/><circle cx="1485.4" cy="323.6" r="0.8" fill="#78f078"/><circle cx="1484.6" cy="327.7" r="0.8" fill="#78f078"/><circle cx="1483.7" cy="330.8" r="0.8" fill="#78f078"/><circle cx="1482.9" cy="332.3" r="0.8" fill="#78f078"/><circle cx="1482.1" cy="335.6" r="0.8" fill="#78f078"/><circle cx="1481.3" cy="341.1" r="0.8" fill="#78f078"/><circle cx="1480.4" cy="343.4" r="0.8" fill="#78f078"/><circle cx="1479.6" cy="346.8" r="0.8" fill="#78f078"/><circle cx="1478.8" cy="348.9" r="0.8" fill="#78f078"/><circle cx="1478.0" cy="352.3" r="0.8" fill="#78f078"/><circle cx="1477.1" cy="355.5" r="0.8" fill="#78f078"/><circle cx="1476.3" cy="358.4" r="0.8" fill="#78f078"/><circle cx="1475.5" cy="358.8" r="0.8" fill="#78f078"/><circle cx="1474.7" cy="363.6" r="0.8" fill="#78f078"/><circle cx="1473.8" cy="365.4" r="0.8" fill="#78f078"/><circle cx="1473.0" cy="369.6" r="0.8" fill="#78f078"/><circle cx="1472.2" cy="371.3" r="0.8" fill="#78f078"/><circle cx="1486.2" cy="322.1" r="0.8" fill="#78f078"/><circle cx="1485.2" cy="326.2" r="0.8" fill="#78f078"/><circle cx="1484.2" cy="328.2" r="0.8" fill="#78f078"/><circle cx="1483.2" cy="330.1" r="0.8" fill="#78f078"/><circle cx="1482.2" cy="333.8" r="0.8" fill="#78f078"/><circle cx="1481.2" cy="336.5" r="0.8" fill="#78f078"/><circle cx="1480.2" cy="341.0" r="0.8" fill="#78f078"/><circle cx="1479.2" cy="342.0" r="0.8" fill="#78f078"/><circle cx="1478.2" cy="344.9" r="0.8" fill="#78f078"/><circle cx="1477.2" cy="348.9" r="0.8" fill="#78f078"/><circle cx="1476.2" cy="350.3" r="0.8" fill="#78f078"/><circle cx="1475.2" cy="354.6" r="0.8" fill="#78f078"/><circle cx="1474.2" cy="358.7" r="0.8" fill="#78f078"/><circle cx="1473.2" cy="360.3" r="0.8" fill="#78f078"/><circle cx="1472.2" cy="362.5" r="0.8" fill="#78f078"/><circle cx="1471.2" cy="366.0" r="0.8" fill="#78f078"/><circle cx="1470.2" cy="369.2" r="0.8" fill="#78f078"/><circle cx="1469.2" cy="370.9" r="0.8" fill="#78f078"/><circle cx="1486.2" cy="320.9" r="0.8" fill="#78f078"/><circle cx="1485.0" cy="323.8" r="0.8" fill="#78f078"/><circle cx="1483.8" cy="327.3" r="0.8" fill="#78f078"/><circle cx="1482.7" cy="330.5" r="0.8" fill="#78f078"/><circle cx="1481.5" cy="333.1" r="0.8" fill="#78f078"/><circle cx="1480.3" cy="335.9" r="0.8" fill="#78f078"/><circle cx="1479.1" cy="338.4" r="0.8" fill="#78f078"/><circle cx="1478.0" cy="342.7" r="0.8" fill="#78f078"/><circle cx="1476.8" cy="346.5" r="0.8" fill="#78f078"/><circle cx="1475.6" cy="348.8" r="0.8" fill="#78f078"/><circle cx="1474.4" cy="351.6" r="0.8" fill="#78f078"/><circle cx="1473.3" cy="354.8" r="0.8" fill="#78f078"/><circle cx="1472.1" cy="356.4" r="0.8" fill="#78f078"/><circle cx="1470.9" cy="360.9" r="0.8" fill="#78f078"/><circle cx="1469.7" cy="363.1" r="0.8" fill="#78f078"/><circle cx="1468.6" cy="366.3" r="0.8" fill="#78f078"/><circle cx="1467.4" cy="369.4" r="0.8" fill="#78f078"/><circle cx="1466.2" cy="371.9" r="0.8" fill="#78f078"/><circle cx="1494.2" cy="321.4" r="0.8" fill="#78f078"/><circle cx="1495.0" cy="324.2" r="0.8" fill="#78f078"/><circle cx="1495.8" cy="327.0" r="0.8" fill="#78f078"/><circle cx="1496.7" cy="330.9" r="0.8" fill="#78f078"/><circle cx="1497.5" cy="333.4" r="0.8" fill="#78f078"/><circle cx="1498.3" cy="337.0" r="0.8" fill="#78f078"/><circle cx="1499.1" cy="338.2" r="0.8" fill="#78f078"/><circle cx="1500.0" cy="342.1" r="0.8" fill="#78f078"/><circle cx="1500.8" cy="346.6" r="0.8" fill="#78f078"/><circle cx="1501.6" cy="347.7" r="0.8" fill="#78f078"/><circle cx="1502.4" cy="351.6" r="0.8" fill="#78f078"/><circle cx="1503.3" cy="354.3" r="0.8" fill="#78f078"/><circle cx="1504.1" cy="356.6" r="0.8" fill="#78f078"/><circle cx="1504.9" cy="361.7" r="0.8" fill="#78f078"/><circle cx="1505.7" cy="362.6" r="0.8" fill="#78f078"/><circle cx="1506.6" cy="366.9" r="0.8" fill="#78f078"/><circle cx="1507.4" cy="368.0" r="0.8" fill="#78f078"/><circle cx="1508.2" cy="370.7" r="0.8" fill="#78f078"/><circle cx="1494.2" cy="323.1" r="0.8" fill="#78f078"/><circle cx="1495.2" cy="324.8" r="0.8" fill="#78f078"/><circle cx="1496.2" cy="326.6" r="0.8" fill="#78f078"/><circle cx="1497.2" cy="330.5" r="0.8" fill="#78f078"/><circle cx="1498.2" cy="333.6" r="0.8" fill="#78f078"/><circle cx="1499.2" cy="337.4" r="0.8" fill="#78f078"/><circle cx="1500.2" cy="338.5" r="0.8" fill="#78f078"/><circle cx="1501.2" cy="341.8" r="0.8" fill="#78f078"/><circle cx="1502.2" cy="346.9" r="0.8" fill="#78f078"/><circle cx="1503.2" cy="349.2" r="0.8" fill="#78f078"/><circle cx="1504.2" cy="350.4" r="0.8" fill="#78f078"/><circle cx="1505.2" cy="353.9" r="0.8" fill="#78f078"/><circle cx="1506.2" cy="356.9" r="0.8" fill="#78f078"/><circle cx="1507.2" cy="360.8" r="0.8" fill="#78f078"/><circle cx="1508.2" cy="363.5" r="0.8" fill="#78f078"/><circle cx="1509.2" cy="367.2" r="0.8" fill="#78f078"/><circle cx="1510.2" cy="370.0" r="0.8" fill="#78f078"/><circle cx="1511.2" cy="372.1" r="0.8" fill="#78f078"/><circle cx="1494.2" cy="322.7" r="0.8" fill="#78f078"/><circle cx="1495.4" cy="325.7" r="0.8" fill="#78f078"/><circle cx="1496.6" cy="328.7" r="0.8" fill="#78f078"/><circle cx="1497.7" cy="330.7" r="0.8" fill="#78f078"/><circle cx="1498.9" cy="334.6" r="0.8" fill="#78f078"/><circle cx="1500.1" cy="337.3" r="0.8" fill="#78f078"/><circle cx="1501.3" cy="340.9" r="0.8" fill="#78f078"/><circle cx="1502.4" cy="341.5" r="0.8" fill="#78f078"/><circle cx="1503.6" cy="346.6" r="0.8" fill="#78f078"/><circle cx="1504.8" cy="347.0" r="0.8" fill="#78f078"/><circle cx="1506.0" cy="352.2" r="0.8" fill="#78f078"/><circle cx="1507.1" cy="354.6" r="0.8" fill="#78f078"/><circle cx="1508.3" cy="357.3" r="0.8" fill="#78f078"/><circle cx="1509.5" cy="361.6" r="0.8" fill="#78f078"/><circle cx="1510.7" cy="363.4" r="0.8" fill="#78f078"/><circle cx="1511.8" cy="365.9" r="0.8" fill="#78f078"/><circle cx="1513.0" cy="369.9" r="0.8" fill="#78f078"/><circle cx="1514.2" cy="373.1" r="0.8" fill="#78f078"/><circle cx="1487.9" cy="360.4" r="0.8" fill="#2040d0"/><circle cx="1489.4" cy="351.9" r="0.8" fill="#2040d0"/><circle cx="1486.3" cy="366.8" r="0.8" fill="#2040d0"/><circle cx="1491.3" cy="348.5" r="0.8" fill="#2040d0"/><circle cx="1486.6" cy="348.1" r="0.8" fill="#2040d0"/><circle cx="1496.7" cy="370.3" r="0.8" fill="#2040d0"/><circle cx="1489.1" cy="354.5" r="0.8" fill="#2040d0"/><circle cx="1486.0" cy="337.1" r="0.8" fill="#2040d0"/><circle cx="1491.8" cy="335.0" r="0.8" fill="#2040d0"/><circle cx="1482.2" cy="359.0" r="0.8" fill="#2040d0"/><circle cx="1487.0" cy="377.6" r="0.8" fill="#2040d0"/><circle cx="1496.4" cy="373.4" r="0.8" fill="#2040d0"/><circle cx="1484.9" cy="379.7" r="0.8" fill="#2040d0"/><circle cx="1498.5" cy="350.5" r="0.8" fill="#2040d0"/><circle cx="1480.3" cy="327.6" r="0.8" fill="#2040d0"/><circle cx="1490.1" cy="358.1" r="0.8" fill="#2040d0"/><circle cx="1495.1" cy="377.6" r="0.8" fill="#2040d0"/><circle cx="1500.0" cy="356.6" r="0.8" fill="#2040d0"/><circle cx="1490.5" cy="355.5" r="0.8" fill="#2040d0"/><circle cx="1488.1" cy="364.7" r="0.8" fill="#2040d0"/><circle cx="1492.1" cy="346.7" r="0.8" fill="#2040d0"/><circle cx="1499.4" cy="346.3" r="0.8" fill="#2040d0"/><circle cx="1490.7" cy="364.2" r="0.8" fill="#2040d0"/><circle cx="1487.5" cy="332.4" r="0.8" fill="#2040d0"/><circle cx="1491.4" cy="349.0" r="0.8" fill="#2040d0"/><circle cx="1497.6" cy="358.6" r="0.8" fill="#2040d0"/><circle cx="1490.0" cy="380.0" r="0.8" fill="#2040d0"/><circle cx="1492.7" cy="351.2" r="0.8" fill="#2040d0"/><circle cx="1487.4" cy="381.8" r="0.8" fill="#2040d0"/><circle cx="1496.4" cy="356.2" r="0.8" fill="#2040d0"/><circle cx="1486.3" cy="336.4" r="0.8" fill="#2040d0"/><circle cx="1496.0" cy="380.8" r="0.8" fill="#2040d0"/><circle cx="1482.5" cy="355.2" r="0.8" fill="#2040d0"/><circle cx="1493.6" cy="376.2" r="0.8" fill="#2040d0"/><circle cx="1499.2" cy="372.1" r="0.8" fill="#2040d0"/><circle cx="1488.8" cy="375.8" r="0.8" fill="#2040d0"/><circle cx="1485.7" cy="335.6" r="0.8" fill="#2040d0"/><circle cx="1490.3" cy="355.1" r="0.8" fill="#2040d0"/><circle cx="1483.5" cy="337.3" r="0.8" fill="#2040d0"/><circle cx="1492.2" cy="361.7" r="0.8" fill="#2040d0"/><circle cx="1500.3" cy="346.4" r="0.8" fill="#2040d0"/><circle cx="1481.4" cy="362.0" r="0.8" fill="#2040d0"/><circle cx="1496.0" cy="349.6" r="0.8" fill="#2040d0"/><circle cx="1494.1" cy="343.9" r="0.8" fill="#2040d0"/><circle cx="1485.9" cy="327.2" r="0.8" fill="#2040d0"/><circle cx="1491.8" cy="373.3" r="0.8" fill="#2040d0"/><circle cx="1484.4" cy="363.7" r="0.8" fill="#2040d0"/><circle cx="1491.3" cy="354.4" r="0.8" fill="#2040d0"/><circle cx="1493.3" cy="341.6" r="0.8" fill="#2040d0"/><circle cx="1500.0" cy="356.2" r="0.8" fill="#2040d0"/><circle cx="1488.5" cy="358.6" r="0.8" fill="#2040d0"/><circle cx="1482.8" cy="333.7" r="0.8" fill="#2040d0"/><circle cx="1482.9" cy="368.8" r="0.8" fill="#2040d0"/><circle cx="1483.1" cy="332.5" r="0.8" fill="#2040d0"/><circle cx="1496.6" cy="355.7" r="0.8" fill="#2040d0"/><circle cx="1496.1" cy="360.7" r="0.8" fill="#2040d0"/><circle cx="1479.6" cy="330.4" r="0.8" fill="#2040d0"/><circle cx="1486.9" cy="369.4" r="0.8" fill="#2040d0"/><circle cx="1487.4" cy="366.4" r="0.8" fill="#2040d0"/><circle cx="1485.2" cy="336.3" r="0.8" fill="#2040d0"/><circle cx="1498.9" cy="332.5" r="0.8" fill="#2040d0"/><circle cx="1487.3" cy="359.0" r="0.8" fill="#2040d0"/><circle cx="1487.9" cy="351.7" r="0.8" fill="#2040d0"/><circle cx="1498.7" cy="330.0" r="0.8" fill="#2040d0"/><circle cx="1499.1" cy="359.0" r="0.8" fill="#2040d0"/><circle cx="1492.6" cy="351.2" r="0.8" fill="#2040d0"/><circle cx="1480.7" cy="340.7" r="0.8" fill="#2040d0"/><circle cx="1496.6" cy="378.2" r="0.8" fill="#2040d0"/><circle cx="1498.4" cy="344.3" r="0.8" fill="#2040d0"/><circle cx="1486.6" cy="371.9" r="0.8" fill="#2040d0"/><circle cx="1499.1" cy="360.1" r="0.8" fill="#2040d0"/><circle cx="1499.1" cy="354.3" r="0.8" fill="#2040d0"/><circle cx="1487.9" cy="340.4" r="0.8" fill="#2040d0"/><circle cx="1485.0" cy="366.5" r="0.8" fill="#2040d0"/><circle cx="1497.9" cy="344.0" r="0.8" fill="#2040d0"/><circle cx="1496.0" cy="353.6" r="0.8" fill="#2040d0"/><circle cx="1483.4" cy="340.4" r="0.8" fill="#2040d0"/><circle cx="1483.8" cy="346.7" r="0.8" fill="#2040d0"/><circle cx="1486.5" cy="380.4" r="0.8" fill="#2040d0"/><circle cx="1482.7" cy="357.9" r="0.8" fill="#2040d0"/><circle cx="1488.0" cy="356.4" r="0.8" fill="#2040d0"/><circle cx="1481.4" cy="349.2" r="0.8" fill="#2040d0"/><circle cx="1497.2" cy="333.8" r="0.8" fill="#2040d0"/><circle cx="1485.0" cy="346.3" r="0.8" fill="#2040d0"/><circle cx="1485.6" cy="337.5" r="0.8" fill="#2040d0"/><circle cx="1480.5" cy="340.0" r="0.8" fill="#2040d0"/><circle cx="1487.2" cy="363.5" r="0.8" fill="#2040d0"/><circle cx="1494.6" cy="335.6" r="0.8" fill="#2040d0"/><circle cx="1485.2" cy="332.1" r="0.8" fill="#2040d0"/><circle cx="1483.4" cy="372.9" r="0.8" fill="#2040d0"/><circle cx="1503.7" cy="387.2" r="0.85" fill="#2040d0"/><circle cx="1503.2" cy="390.0" r="0.85" fill="#2040d0"/><circle cx="1502.4" cy="392.7" r="0.85" fill="#2040d0"/><circle cx="1501.5" cy="395.3" r="0.85" fill="#2040d0"/><circle cx="1500.3" cy="397.5" r="0.85" fill="#2040d0"/><circle cx="1499.1" cy="399.6" r="0.85" fill="#2040d0"/><circle cx="1497.6" cy="401.3" r="0.85" fill="#2040d0"/><circle cx="1496.1" cy="402.8" r="0.85" fill="#2040d0"/><circle cx="1494.5" cy="403.8" r="0.85" fill="#2040d0"/><circle cx="1492.8" cy="404.6" r="0.85" fill="#2040d0"/><circle cx="1491.1" cy="405.0" r="0.85" fill="#2040d0"/><circle cx="1489.3" cy="405.0" r="0.85" fill="#2040d0"/><circle cx="1487.6" cy="404.6" r="0.85" fill="#2040d0"/><circle cx="1485.9" cy="403.8" r="0.85" fill="#2040d0"/><circle cx="1484.3" cy="402.8" r="0.85" fill="#2040d0"/><circle cx="1482.8" cy="401.3" r="0.85" fill="#2040d0"/><circle cx="1481.3" cy="399.6" r="0.85" fill="#2040d0"/><circle cx="1480.1" cy="397.5" r="0.85" fill="#2040d0"/><circle cx="1478.9" cy="395.3" r="0.85" fill="#2040d0"/><circle cx="1478.0" cy="392.7" r="0.85" fill="#2040d0"/><circle cx="1477.2" cy="390.0" r="0.85" fill="#2040d0"/><circle cx="1476.7" cy="387.2" r="0.85" fill="#2040d0"/><circle cx="1501.8" cy="386.2" r="0.85" fill="#2040d0"/><circle cx="1501.3" cy="388.5" r="0.85" fill="#2040d0"/><circle cx="1500.7" cy="390.8" r="0.85" fill="#2040d0"/><circle cx="1499.9" cy="392.9" r="0.85" fill="#2040d0"/><circle cx="1498.9" cy="394.8" r="0.85" fill="#2040d0"/><circle cx="1497.8" cy="396.5" r="0.85" fill="#2040d0"/><circle cx="1496.6" cy="397.9" r="0.85" fill="#2040d0"/><circle cx="1495.3" cy="399.1" r="0.85" fill="#2040d0"/><circle cx="1493.9" cy="400.0" r="0.85" fill="#2040d0"/><circle cx="1492.4" cy="400.7" r="0.85" fill="#2040d0"/><circle cx="1490.9" cy="401.0" r="0.85" fill="#2040d0"/><circle cx="1489.5" cy="401.0" r="0.85" fill="#2040d0"/><circle cx="1488.0" cy="400.7" r="0.85" fill="#2040d0"/><circle cx="1486.5" cy="400.0" r="0.85" fill="#2040d0"/><circle cx="1485.1" cy="399.1" r="0.85" fill="#2040d0"/><circle cx="1483.8" cy="397.9" r="0.85" fill="#2040d0"/><circle cx="1482.6" cy="396.5" r="0.85" fill="#2040d0"/><circle cx="1481.5" cy="394.8" r="0.85" fill="#2040d0"/><circle cx="1480.5" cy="392.9" r="0.85" fill="#2040d0"/><circle cx="1479.7" cy="390.8" r="0.85" fill="#2040d0"/><circle cx="1479.1" cy="388.5" r="0.85" fill="#2040d0"/><circle cx="1478.6" cy="386.2" r="0.85" fill="#2040d0"/><circle cx="1499.9" cy="385.1" r="0.85" fill="#2040d0"/><circle cx="1499.5" cy="387.0" r="0.85" fill="#2040d0"/><circle cx="1498.9" cy="388.8" r="0.85" fill="#2040d0"/><circle cx="1498.2" cy="390.5" r="0.85" fill="#2040d0"/><circle cx="1497.4" cy="392.0" r="0.85" fill="#2040d0"/><circle cx="1496.5" cy="393.4" r="0.85" fill="#2040d0"/><circle cx="1495.5" cy="394.5" r="0.85" fill="#2040d0"/><circle cx="1494.4" cy="395.5" r="0.85" fill="#2040d0"/><circle cx="1493.3" cy="396.2" r="0.85" fill="#2040d0"/><circle cx="1492.1" cy="396.7" r="0.85" fill="#2040d0"/><circle cx="1490.8" cy="397.0" r="0.85" fill="#2040d0"/><circle cx="1489.6" cy="397.0" r="0.85" fill="#2040d0"/><circle cx="1488.3" cy="396.7" r="0.85" fill="#2040d0"/><circle cx="1487.1" cy="396.2" r="0.85" fill="#2040d0"/><circle cx="1486.0" cy="395.5" r="0.85" fill="#2040d0"/><circle cx="1484.9" cy="394.5" r="0.85" fill="#2040d0"/><circle cx="1483.9" cy="393.4" r="0.85" fill="#2040d0"/><circle cx="1483.0" cy="392.0" r="0.85" fill="#2040d0"/><circle cx="1482.2" cy="390.5" r="0.85" fill="#2040d0"/><circle cx="1481.5" cy="388.8" r="0.85" fill="#2040d0"/><circle cx="1480.9" cy="387.0" r="0.85" fill="#2040d0"/><circle cx="1480.5" cy="385.1" r="0.85" fill="#2040d0"/><circle cx="1497.9" cy="384.1" r="0.85" fill="#2040d0"/><circle cx="1497.6" cy="385.5" r="0.85" fill="#2040d0"/><circle cx="1497.2" cy="386.9" r="0.85" fill="#2040d0"/><circle cx="1496.6" cy="388.1" r="0.85" fill="#2040d0"/><circle cx="1496.0" cy="389.3" r="0.85" fill="#2040d0"/><circle cx="1495.3" cy="390.3" r="0.85" fill="#2040d0"/><circle cx="1494.5" cy="391.2" r="0.85" fill="#2040d0"/><circle cx="1493.6" cy="391.9" r="0.85" fill="#2040d0"/><circle cx="1492.7" cy="392.4" r="0.85" fill="#2040d0"/><circle cx="1491.7" cy="392.8" r="0.85" fill="#2040d0"/><circle cx="1490.7" cy="393.0" r="0.85" fill="#2040d0"/><circle cx="1489.7" cy="393.0" r="0.85" fill="#2040d0"/><circle cx="1488.7" cy="392.8" r="0.85" fill="#2040d0"/><circle cx="1487.7" cy="392.4" r="0.85" fill="#2040d0"/><circle cx="1486.8" cy="391.9" r="0.85" fill="#2040d0"/><circle cx="1485.9" cy="391.2" r="0.85" fill="#2040d0"/><circle cx="1485.1" cy="390.3" r="0.85" fill="#2040d0"/><circle cx="1484.4" cy="389.3" r="0.85" fill="#2040d0"/><circle cx="1483.8" cy="388.1" r="0.85" fill="#2040d0"/><circle cx="1483.2" cy="386.9" r="0.85" fill="#2040d0"/><circle cx="1482.8" cy="385.5" r="0.85" fill="#2040d0"/><circle cx="1482.5" cy="384.1" r="0.85" fill="#2040d0"/><circle cx="1477.3" cy="360.2" r="0.8" fill="#2040d0"/><circle cx="1440.5" cy="383.1" r="0.8" fill="#2040d0"/><circle cx="1476.8" cy="368.9" r="0.8" fill="#2040d0"/><circle cx="1441.0" cy="380.7" r="0.8" fill="#2040d0"/><circle cx="1475.8" cy="366.5" r="0.8" fill="#2040d0"/><circle cx="1462.8" cy="367.9" r="0.8" fill="#2040d0"/><circle cx="1458.5" cy="367.4" r="0.8" fill="#2040d0"/><circle cx="1443.4" cy="380.7" r="0.8" fill="#2040d0"/><circle cx="1455.1" cy="379.8" r="0.8" fill="#2040d0"/><circle cx="1454.1" cy="371.9" r="0.8" fill="#2040d0"/><circle cx="1470.4" cy="364.4" r="0.8" fill="#2040d0"/><circle cx="1479.1" cy="368.7" r="0.8" fill="#2040d0"/><circle cx="1446.6" cy="375.3" r="0.8" fill="#2040d0"/><circle cx="1472.8" cy="369.5" r="0.8" fill="#2040d0"/><circle cx="1446.4" cy="383.0" r="0.8" fill="#2040d0"/><circle cx="1473.5" cy="371.0" r="0.8" fill="#2040d0"/><circle cx="1447.0" cy="380.5" r="0.8" fill="#2040d0"/><circle cx="1467.1" cy="366.2" r="0.8" fill="#2040d0"/><circle cx="1447.2" cy="375.4" r="0.8" fill="#2040d0"/><circle cx="1465.5" cy="371.2" r="0.8" fill="#2040d0"/><circle cx="1465.4" cy="374.6" r="0.8" fill="#2040d0"/><circle cx="1470.6" cy="363.1" r="0.8" fill="#2040d0"/><circle cx="1457.5" cy="375.2" r="0.8" fill="#2040d0"/><circle cx="1447.4" cy="379.9" r="0.8" fill="#2040d0"/><circle cx="1444.0" cy="384.1" r="0.8" fill="#2040d0"/><circle cx="1460.4" cy="372.5" r="0.8" fill="#2040d0"/><circle cx="1473.9" cy="365.0" r="0.8" fill="#2040d0"/><circle cx="1457.0" cy="368.8" r="0.8" fill="#2040d0"/><circle cx="1452.7" cy="371.4" r="0.8" fill="#2040d0"/><circle cx="1462.5" cy="377.4" r="0.8" fill="#2040d0"/><circle cx="1476.6" cy="360.8" r="0.8" fill="#2040d0"/><circle cx="1462.6" cy="368.0" r="0.8" fill="#2040d0"/><circle cx="1451.3" cy="370.0" r="0.8" fill="#2040d0"/><circle cx="1446.6" cy="382.0" r="0.8" fill="#2040d0"/><circle cx="1448.7" cy="376.1" r="0.8" fill="#2040d0"/><circle cx="1468.9" cy="371.2" r="0.8" fill="#2040d0"/><circle cx="1459.6" cy="371.9" r="0.8" fill="#2040d0"/><circle cx="1466.7" cy="369.4" r="0.8" fill="#2040d0"/><circle cx="1453.6" cy="379.0" r="0.8" fill="#2040d0"/><circle cx="1444.0" cy="374.7" r="0.8" fill="#2040d0"/><circle cx="1512.0" cy="368.8" r="0.8" fill="#2040d0"/><circle cx="1522.7" cy="371.7" r="0.8" fill="#2040d0"/><circle cx="1508.0" cy="363.0" r="0.8" fill="#2040d0"/><circle cx="1513.1" cy="369.4" r="0.8" fill="#2040d0"/><circle cx="1539.1" cy="384.7" r="0.8" fill="#2040d0"/><circle cx="1534.8" cy="383.8" r="0.8" fill="#2040d0"/><circle cx="1538.7" cy="381.1" r="0.8" fill="#2040d0"/><circle cx="1532.6" cy="372.0" r="0.8" fill="#2040d0"/><circle cx="1527.3" cy="376.6" r="0.8" fill="#2040d0"/><circle cx="1512.1" cy="370.4" r="0.8" fill="#2040d0"/><circle cx="1538.3" cy="379.3" r="0.8" fill="#2040d0"/><circle cx="1526.1" cy="372.4" r="0.8" fill="#2040d0"/><circle cx="1513.9" cy="374.8" r="0.8" fill="#2040d0"/><circle cx="1501.3" cy="361.7" r="0.8" fill="#2040d0"/><circle cx="1527.3" cy="374.7" r="0.8" fill="#2040d0"/><circle cx="1503.6" cy="368.2" r="0.8" fill="#2040d0"/><circle cx="1515.1" cy="371.6" r="0.8" fill="#2040d0"/><circle cx="1516.9" cy="371.7" r="0.8" fill="#2040d0"/><circle cx="1522.8" cy="372.3" r="0.8" fill="#2040d0"/><circle cx="1504.8" cy="362.9" r="0.8" fill="#2040d0"/><circle cx="1535.8" cy="379.1" r="0.8" fill="#2040d0"/><circle cx="1504.7" cy="371.1" r="0.8" fill="#2040d0"/><circle cx="1510.3" cy="364.0" r="0.8" fill="#2040d0"/><circle cx="1521.4" cy="370.1" r="0.8" fill="#2040d0"/><circle cx="1519.8" cy="373.1" r="0.8" fill="#2040d0"/><circle cx="1509.3" cy="369.3" r="0.8" fill="#2040d0"/><circle cx="1504.7" cy="366.9" r="0.8" fill="#2040d0"/><circle cx="1523.7" cy="368.9" r="0.8" fill="#2040d0"/><circle cx="1516.5" cy="366.1" r="0.8" fill="#2040d0"/><circle cx="1517.8" cy="376.0" r="0.8" fill="#2040d0"/><circle cx="1522.2" cy="375.9" r="0.8" fill="#2040d0"/><circle cx="1530.5" cy="371.9" r="0.8" fill="#2040d0"/><circle cx="1539.8" cy="382.7" r="0.8" fill="#2040d0"/><circle cx="1504.3" cy="370.5" r="0.8" fill="#2040d0"/><circle cx="1515.9" cy="367.0" r="0.8" fill="#2040d0"/><circle cx="1538.6" cy="380.3" r="0.8" fill="#2040d0"/><circle cx="1531.2" cy="372.4" r="0.8" fill="#2040d0"/><circle cx="1531.2" cy="371.5" r="0.8" fill="#2040d0"/><circle cx="1509.7" cy="367.1" r="0.8" fill="#2040d0"/><circle cx="1500.8" cy="366.4" r="0.8" fill="#2040d0"/><circle cx="1475.7" cy="332.5" r="0.9" fill="#d41a1a"/><circle cx="1476.9" cy="331.4" r="0.9" fill="#d41a1a"/><circle cx="1477.6" cy="330.5" r="0.9" fill="#d41a1a"/><circle cx="1478.0" cy="329.1" r="0.9" fill="#d41a1a"/><circle cx="1478.7" cy="328.5" r="0.9" fill="#d41a1a"/><circle cx="1478.0" cy="327.2" r="0.9" fill="#d41a1a"/><circle cx="1479.2" cy="326.1" r="0.9" fill="#d41a1a"/><circle cx="1480.8" cy="325.3" r="0.9" fill="#d41a1a"/><circle cx="1480.8" cy="323.5" r="0.9" fill="#d41a1a"/><circle cx="1483.2" cy="323.9" r="0.9" fill="#d41a1a"/><circle cx="1484.4" cy="321.4" r="0.9" fill="#d41a1a"/><circle cx="1485.5" cy="321.0" r="0.9" fill="#d41a1a"/><circle cx="1486.8" cy="322.0" r="0.9" fill="#d41a1a"/><circle cx="1487.3" cy="322.0" r="0.9" fill="#d41a1a"/><circle cx="1489.8" cy="320.5" r="0.9" fill="#d41a1a"/><circle cx="1490.3" cy="320.9" r="0.9" fill="#d41a1a"/><circle cx="1493.0" cy="321.3" r="0.9" fill="#d41a1a"/><circle cx="1493.0" cy="320.5" r="0.9" fill="#d41a1a"/><circle cx="1494.3" cy="322.4" r="0.9" fill="#d41a1a"/><circle cx="1495.8" cy="322.5" r="0.9" fill="#d41a1a"/><circle cx="1497.2" cy="323.4" r="0.9" fill="#d41a1a"/><circle cx="1498.6" cy="323.1" r="0.9" fill="#d41a1a"/><circle cx="1500.7" cy="324.7" r="0.9" fill="#d41a1a"/><circle cx="1501.3" cy="326.2" r="0.9" fill="#d41a1a"/><circle cx="1502.7" cy="325.7" r="0.9" fill="#d41a1a"/><circle cx="1502.2" cy="327.1" r="0.9" fill="#d41a1a"/><circle cx="1503.1" cy="329.8" r="0.9" fill="#d41a1a"/><circle cx="1504.2" cy="329.3" r="0.9" fill="#d41a1a"/><circle cx="1503.3" cy="332.2" r="0.9" fill="#d41a1a"/><circle cx="1504.5" cy="332.7" r="0.9" fill="#d41a1a"/><circle cx="1466.9" cy="344.8" r="0.85" fill="#d41a1a"/><circle cx="1468.8" cy="343.1" r="0.85" fill="#d41a1a"/><circle cx="1469.9" cy="341.4" r="0.85" fill="#d41a1a"/><circle cx="1468.8" cy="338.4" r="0.85" fill="#d41a1a"/><circle cx="1470.7" cy="338.1" r="0.85" fill="#d41a1a"/><circle cx="1473.5" cy="333.7" r="0.85" fill="#d41a1a"/><circle cx="1474.1" cy="332.9" r="0.85" fill="#d41a1a"/><circle cx="1477.0" cy="332.1" r="0.85" fill="#d41a1a"/><circle cx="1479.0" cy="330.2" r="0.85" fill="#d41a1a"/><circle cx="1480.1" cy="329.8" r="0.85" fill="#d41a1a"/><circle cx="1483.5" cy="327.4" r="0.85" fill="#d41a1a"/><circle cx="1486.3" cy="329.8" r="0.85" fill="#d41a1a"/><circle cx="1487.6" cy="327.0" r="0.85" fill="#d41a1a"/><circle cx="1492.0" cy="327.4" r="0.85" fill="#d41a1a"/><circle cx="1493.3" cy="328.3" r="0.85" fill="#d41a1a"/><circle cx="1495.7" cy="329.0" r="0.85" fill="#d41a1a"/><circle cx="1498.9" cy="331.0" r="0.85" fill="#d41a1a"/><circle cx="1502.6" cy="329.2" r="0.85" fill="#d41a1a"/><circle cx="1503.5" cy="332.7" r="0.85" fill="#d41a1a"/><circle cx="1506.4" cy="334.2" r="0.85" fill="#d41a1a"/><circle cx="1507.6" cy="335.4" r="0.85" fill="#d41a1a"/><circle cx="1508.4" cy="336.2" r="0.85" fill="#d41a1a"/><circle cx="1511.2" cy="340.0" r="0.85" fill="#d41a1a"/><circle cx="1512.9" cy="341.6" r="0.85" fill="#d41a1a"/><circle cx="1512.0" cy="344.2" r="0.85" fill="#d41a1a"/><circle cx="1514.1" cy="345.8" r="0.85" fill="#d41a1a"/><circle cx="1457.0" cy="345.1" r="0.85" fill="#d41a1a"/><circle cx="1458.0" cy="342.6" r="0.85" fill="#d41a1a"/><circle cx="1457.5" cy="339.7" r="0.85" fill="#d41a1a"/><circle cx="1460.6" cy="340.2" r="0.85" fill="#d41a1a"/><circle cx="1463.5" cy="335.2" r="0.85" fill="#d41a1a"/><circle cx="1465.0" cy="332.5" r="0.85" fill="#d41a1a"/><circle cx="1468.2" cy="330.2" r="0.85" fill="#d41a1a"/><circle cx="1469.6" cy="331.9" r="0.85" fill="#d41a1a"/><circle cx="1474.7" cy="328.6" r="0.85" fill="#d41a1a"/><circle cx="1478.4" cy="326.9" r="0.85" fill="#d41a1a"/><circle cx="1480.0" cy="325.0" r="0.85" fill="#d41a1a"/><circle cx="1484.1" cy="325.5" r="0.85" fill="#d41a1a"/><circle cx="1489.4" cy="326.3" r="0.85" fill="#d41a1a"/><circle cx="1493.9" cy="325.3" r="0.85" fill="#d41a1a"/><circle cx="1497.3" cy="326.7" r="0.85" fill="#d41a1a"/><circle cx="1497.1" cy="325.5" r="0.85" fill="#d41a1a"/><circle cx="1502.6" cy="329.9" r="0.85" fill="#d41a1a"/><circle cx="1504.9" cy="330.1" r="0.85" fill="#d41a1a"/><circle cx="1508.3" cy="331.9" r="0.85" fill="#d41a1a"/><circle cx="1509.7" cy="331.8" r="0.85" fill="#d41a1a"/><circle cx="1516.0" cy="332.7" r="0.85" fill="#d41a1a"/><circle cx="1515.7" cy="333.7" r="0.85" fill="#d41a1a"/><circle cx="1517.6" cy="337.0" r="0.85" fill="#d41a1a"/><circle cx="1521.9" cy="339.2" r="0.85" fill="#d41a1a"/><circle cx="1522.2" cy="341.7" r="0.85" fill="#d41a1a"/><circle cx="1524.5" cy="347.3" r="0.85" fill="#d41a1a"/><circle cx="1484.7" cy="361.6" r="0.9" fill="#d41a1a"/><circle cx="1498.1" cy="366.4" r="0.9" fill="#d41a1a"/><circle cx="1482.3" cy="359.1" r="0.9" fill="#d41a1a"/><circle cx="1496.3" cy="370.5" r="0.9" fill="#d41a1a"/><circle cx="1482.3" cy="344.8" r="0.9" fill="#d41a1a"/><circle cx="1491.1" cy="336.3" r="0.9" fill="#d41a1a"/><circle cx="1492.4" cy="374.1" r="0.9" fill="#d41a1a"/><circle cx="1485.9" cy="376.8" r="0.9" fill="#d41a1a"/><circle cx="1495.7" cy="344.0" r="0.9" fill="#d41a1a"/><circle cx="1488.5" cy="361.7" r="0.9" fill="#d41a1a"/><circle cx="1487.3" cy="363.3" r="0.9" fill="#d41a1a"/><circle cx="1488.0" cy="329.2" r="0.9" fill="#d41a1a"/><circle cx="1493.4" cy="328.5" r="0.9" fill="#d41a1a"/><circle cx="1490.1" cy="344.4" r="0.9" fill="#d41a1a"/><circle cx="1485.6" cy="358.9" r="0.9" fill="#d41a1a"/><circle cx="1480.3" cy="351.5" r="0.9" fill="#d41a1a"/><circle cx="1491.1" cy="376.9" r="0.9" fill="#d41a1a"/><circle cx="1484.0" cy="380.3" r="0.9" fill="#d41a1a"/><circle cx="1494.4" cy="359.8" r="0.9" fill="#d41a1a"/><circle cx="1481.2" cy="344.1" r="0.9" fill="#d41a1a"/><circle cx="1481.6" cy="334.6" r="0.9" fill="#d41a1a"/><circle cx="1483.3" cy="368.2" r="0.9" fill="#d41a1a"/><circle cx="1489.0" cy="370.8" r="0.9" fill="#d41a1a"/><circle cx="1491.9" cy="355.6" r="0.9" fill="#d41a1a"/><circle cx="1493.2" cy="356.5" r="0.9" fill="#d41a1a"/><circle cx="1487.0" cy="359.1" r="0.9" fill="#d41a1a"/><circle cx="1486.1" cy="366.8" r="0.9" fill="#d41a1a"/><circle cx="1494.8" cy="365.1" r="0.9" fill="#d41a1a"/><circle cx="1487.0" cy="368.7" r="0.9" fill="#d41a1a"/><circle cx="1498.1" cy="368.5" r="0.9" fill="#d41a1a"/><circle cx="1485.7" cy="350.9" r="0.9" fill="#d41a1a"/><circle cx="1498.9" cy="354.8" r="0.9" fill="#d41a1a"/><circle cx="1478.2" cy="333.3" r="0.9" fill="#d41a1a"/><circle cx="1493.3" cy="352.2" r="0.9" fill="#d41a1a"/><circle cx="1487.9" cy="368.6" r="0.9" fill="#d41a1a"/><circle cx="1486.4" cy="380.4" r="0.9" fill="#d41a1a"/><circle cx="1483.3" cy="367.6" r="0.9" fill="#d41a1a"/><circle cx="1480.8" cy="327.5" r="0.9" fill="#d41a1a"/><circle cx="1490.2" cy="329.3" r="0.9" fill="#d41a1a"/><circle cx="1484.1" cy="356.5" r="0.9" fill="#d41a1a"/><circle cx="1488.2" cy="377.7" r="0.9" fill="#d41a1a"/><circle cx="1482.4" cy="334.2" r="0.9" fill="#d41a1a"/><circle cx="1497.4" cy="366.6" r="0.9" fill="#d41a1a"/><circle cx="1478.9" cy="334.9" r="0.9" fill="#d41a1a"/><circle cx="1485.9" cy="368.8" r="0.9" fill="#d41a1a"/><circle cx="1490.2" cy="380.0" r="0.9" fill="#d41a1a"/><circle cx="1487.3" cy="361.0" r="0.9" fill="#d41a1a"/><circle cx="1489.5" cy="370.0" r="0.9" fill="#d41a1a"/><circle cx="1499.1" cy="343.8" r="0.9" fill="#d41a1a"/><circle cx="1496.0" cy="331.9" r="0.9" fill="#d41a1a"/><circle cx="1493.9" cy="329.6" r="0.9" fill="#d41a1a"/><circle cx="1497.9" cy="348.1" r="0.9" fill="#d41a1a"/><circle cx="1491.8" cy="329.3" r="0.9" fill="#d41a1a"/><circle cx="1499.0" cy="348.5" r="0.9" fill="#d41a1a"/><circle cx="1492.1" cy="378.0" r="0.9" fill="#d41a1a"/><circle cx="1484.4" cy="338.3" r="0.9" fill="#d41a1a"/><circle cx="1488.7" cy="340.4" r="0.9" fill="#d41a1a"/><circle cx="1483.3" cy="338.7" r="0.9" fill="#d41a1a"/><circle cx="1492.6" cy="367.8" r="0.9" fill="#d41a1a"/><circle cx="1501.3" cy="342.4" r="0.9" fill="#d41a1a"/><circle cx="1491.8" cy="337.9" r="0.9" fill="#d41a1a"/><circle cx="1499.0" cy="334.6" r="0.9" fill="#d41a1a"/><circle cx="1486.6" cy="373.8" r="0.9" fill="#d41a1a"/><circle cx="1495.7" cy="367.3" r="0.9" fill="#d41a1a"/><circle cx="1486.4" cy="341.5" r="0.9" fill="#d41a1a"/><circle cx="1498.1" cy="352.7" r="0.9" fill="#d41a1a"/><circle cx="1494.6" cy="334.9" r="0.9" fill="#d41a1a"/><circle cx="1489.3" cy="358.9" r="0.9" fill="#d41a1a"/><circle cx="1497.5" cy="357.9" r="0.9" fill="#d41a1a"/><circle cx="1499.2" cy="337.5" r="0.9" fill="#d41a1a"/><circle cx="1496.3" cy="345.8" r="0.9" fill="#d41a1a"/><circle cx="1485.3" cy="373.5" r="0.9" fill="#d41a1a"/><circle cx="1497.9" cy="373.5" r="0.9" fill="#d41a1a"/><circle cx="1479.5" cy="342.4" r="0.9" fill="#d41a1a"/><circle cx="1501.9" cy="332.1" r="0.9" fill="#d41a1a"/><circle cx="1500.9" cy="326.5" r="0.9" fill="#d41a1a"/><circle cx="1495.9" cy="334.3" r="0.9" fill="#d41a1a"/><circle cx="1482.0" cy="331.4" r="0.9" fill="#d41a1a"/><circle cx="1482.9" cy="363.6" r="0.9" fill="#d41a1a"/><circle cx="1499.4" cy="344.7" r="0.9" fill="#d41a1a"/><circle cx="1496.8" cy="365.4" r="0.9" fill="#d41a1a"/><circle cx="1483.6" cy="379.9" r="0.9" fill="#d41a1a"/><circle cx="1497.0" cy="338.9" r="0.9" fill="#d41a1a"/><circle cx="1482.0" cy="363.9" r="0.9" fill="#d41a1a"/><circle cx="1484.9" cy="353.8" r="0.9" fill="#d41a1a"/><circle cx="1482.0" cy="349.7" r="0.9" fill="#d41a1a"/><circle cx="1502.8" cy="327.1" r="0.9" fill="#d41a1a"/><circle cx="1498.6" cy="343.4" r="0.9" fill="#d41a1a"/><circle cx="1489.9" cy="332.6" r="0.9" fill="#d41a1a"/><circle cx="1488.5" cy="333.5" r="0.9" fill="#d41a1a"/><circle cx="1494.6" cy="335.8" r="0.9" fill="#d41a1a"/><circle cx="1496.0" cy="334.1" r="0.9" fill="#d41a1a"/><circle cx="1482.5" cy="353.5" r="0.9" fill="#d41a1a"/><circle cx="1490.1" cy="345.4" r="0.9" fill="#d41a1a"/><circle cx="1488.0" cy="376.5" r="0.9" fill="#d41a1a"/><circle cx="1501.1" cy="337.8" r="0.9" fill="#d41a1a"/><circle cx="1493.7" cy="374.6" r="0.9" fill="#d41a1a"/><circle cx="1482.9" cy="341.0" r="0.9" fill="#d41a1a"/><circle cx="1480.4" cy="340.6" r="0.9" fill="#d41a1a"/><circle cx="1490.4" cy="328.4" r="0.9" fill="#d41a1a"/><circle cx="1491.4" cy="348.4" r="0.9" fill="#d41a1a"/><circle cx="1479.6" cy="345.9" r="0.9" fill="#d41a1a"/><circle cx="1492.9" cy="363.8" r="0.9" fill="#d41a1a"/><circle cx="1491.1" cy="355.9" r="0.9" fill="#d41a1a"/><circle cx="1498.7" cy="364.0" r="0.9" fill="#d41a1a"/><circle cx="1493.6" cy="374.1" r="0.9" fill="#d41a1a"/><circle cx="1486.4" cy="348.0" r="0.9" fill="#d41a1a"/><circle cx="1500.1" cy="349.1" r="0.9" fill="#d41a1a"/><circle cx="1487.8" cy="347.3" r="0.9" fill="#d41a1a"/><circle cx="1482.7" cy="348.5" r="0.9" fill="#d41a1a"/><circle cx="1483.3" cy="380.9" r="0.9" fill="#d41a1a"/><circle cx="1498.1" cy="359.4" r="0.9" fill="#d41a1a"/><circle cx="1492.7" cy="340.0" r="0.9" fill="#d41a1a"/><circle cx="1484.6" cy="346.7" r="0.9" fill="#d41a1a"/><circle cx="1481.1" cy="336.9" r="0.9" fill="#d41a1a"/><circle cx="1494.7" cy="372.4" r="0.9" fill="#d41a1a"/><circle cx="1483.4" cy="376.0" r="0.9" fill="#d41a1a"/><circle cx="1487.1" cy="364.2" r="0.9" fill="#d41a1a"/><circle cx="1491.1" cy="361.5" r="0.9" fill="#d41a1a"/><circle cx="1500.7" cy="343.4" r="0.9" fill="#d41a1a"/><circle cx="1496.6" cy="326.1" r="0.9" fill="#d41a1a"/><circle cx="1490.4" cy="372.9" r="0.9" fill="#d41a1a"/><circle cx="1499.5" cy="358.6" r="0.9" fill="#d41a1a"/><circle cx="1493.2" cy="338.9" r="0.9" fill="#d41a1a"/><circle cx="1488.1" cy="366.9" r="0.9" fill="#d41a1a"/><circle cx="1488.3" cy="365.2" r="0.9" fill="#d41a1a"/><circle cx="1492.4" cy="354.9" r="0.9" fill="#d41a1a"/><circle cx="1487.0" cy="363.2" r="0.9" fill="#d41a1a"/><circle cx="1491.0" cy="360.6" r="0.9" fill="#d41a1a"/><circle cx="1492.8" cy="338.3" r="0.9" fill="#d41a1a"/><circle cx="1499.5" cy="340.6" r="0.9" fill="#d41a1a"/><circle cx="1494.7" cy="352.0" r="0.9" fill="#d41a1a"/><circle cx="1489.7" cy="354.7" r="0.9" fill="#d41a1a"/><circle cx="1481.9" cy="338.2" r="0.9" fill="#d41a1a"/><circle cx="1490.6" cy="377.0" r="0.9" fill="#d41a1a"/><circle cx="1490.7" cy="354.8" r="0.9" fill="#d41a1a"/><circle cx="1486.0" cy="370.7" r="0.9" fill="#d41a1a"/><circle cx="1497.9" cy="335.5" r="0.9" fill="#d41a1a"/><circle cx="1493.1" cy="351.3" r="0.9" fill="#d41a1a"/><circle cx="1496.5" cy="371.5" r="0.9" fill="#d41a1a"/><circle cx="1483.1" cy="373.7" r="0.9" fill="#d41a1a"/><circle cx="1497.3" cy="347.0" r="0.9" fill="#d41a1a"/><circle cx="1484.1" cy="371.0" r="0.9" fill="#d41a1a"/><circle cx="1484.2" cy="334.5" r="0.9" fill="#d41a1a"/><circle cx="1486.7" cy="331.7" r="0.9" fill="#d41a1a"/><circle cx="1490.5" cy="370.2" r="0.9" fill="#d41a1a"/><circle cx="1481.7" cy="350.9" r="0.9" fill="#d41a1a"/><circle cx="1500.7" cy="347.8" r="0.9" fill="#d41a1a"/><circle cx="1489.3" cy="364.2" r="0.9" fill="#d41a1a"/><circle cx="1496.2" cy="352.3" r="0.9" fill="#d41a1a"/><circle cx="1484.3" cy="367.7" r="0.9" fill="#d41a1a"/><circle cx="1487.8" cy="363.4" r="0.9" fill="#d41a1a"/><circle cx="1485.0" cy="354.6" r="0.9" fill="#d41a1a"/><circle cx="1486.8" cy="346.4" r="0.9" fill="#d41a1a"/><circle cx="1479.9" cy="347.0" r="0.9" fill="#d41a1a"/><circle cx="1491.9" cy="337.0" r="0.9" fill="#d41a1a"/><circle cx="1482.1" cy="329.2" r="0.9" fill="#d41a1a"/><circle cx="1486.3" cy="365.5" r="0.9" fill="#d41a1a"/><circle cx="1484.5" cy="343.8" r="0.9" fill="#d41a1a"/><circle cx="1483.7" cy="371.9" r="0.9" fill="#d41a1a"/><circle cx="1496.8" cy="361.0" r="0.9" fill="#d41a1a"/><circle cx="1488.4" cy="337.1" r="0.9" fill="#d41a1a"/><circle cx="1492.1" cy="369.6" r="0.9" fill="#d41a1a"/><circle cx="1480.4" cy="346.4" r="0.9" fill="#d41a1a"/><circle cx="1487.5" cy="350.3" r="0.9" fill="#d41a1a"/><circle cx="1486.6" cy="365.2" r="0.9" fill="#d41a1a"/><circle cx="1493.3" cy="348.4" r="0.9" fill="#d41a1a"/><circle cx="1487.8" cy="370.6" r="0.9" fill="#d41a1a"/><circle cx="1491.9" cy="347.2" r="0.9" fill="#d41a1a"/><circle cx="1485.6" cy="376.9" r="0.9" fill="#d41a1a"/><circle cx="1336.1" cy="705.4" r="0.8" fill="#2040d0"/><circle cx="1336.9" cy="671.2" r="0.8" fill="#2040d0"/><circle cx="1328.5" cy="668.8" r="0.8" fill="#2040d0"/><circle cx="1333.5" cy="693.1" r="0.8" fill="#2040d0"/><circle cx="1334.6" cy="680.0" r="0.8" fill="#2040d0"/><circle cx="1336.6" cy="701.4" r="0.8" fill="#2040d0"/><circle cx="1336.2" cy="651.5" r="0.8" fill="#2040d0"/><circle cx="1334.1" cy="676.4" r="0.8" fill="#2040d0"/><circle cx="1333.9" cy="697.9" r="0.8" fill="#2040d0"/><circle cx="1339.5" cy="677.0" r="0.8" fill="#2040d0"/><circle cx="1334.5" cy="675.1" r="0.8" fill="#2040d0"/><circle cx="1338.5" cy="679.2" r="0.8" fill="#2040d0"/><circle cx="1337.1" cy="688.2" r="0.8" fill="#2040d0"/><circle cx="1328.4" cy="672.9" r="0.8" fill="#2040d0"/><circle cx="1335.2" cy="688.8" r="0.8" fill="#2040d0"/><circle cx="1337.1" cy="693.8" r="0.8" fill="#2040d0"/><circle cx="1329.9" cy="656.7" r="0.8" fill="#2040d0"/><circle cx="1340.0" cy="654.4" r="0.8" fill="#2040d0"/><circle cx="1327.7" cy="655.8" r="0.8" fill="#2040d0"/><circle cx="1335.2" cy="692.9" r="0.8" fill="#2040d0"/><circle cx="1337.7" cy="653.1" r="0.8" fill="#2040d0"/><circle cx="1334.4" cy="690.5" r="0.8" fill="#2040d0"/><circle cx="1337.9" cy="653.1" r="0.8" fill="#2040d0"/><circle cx="1335.7" cy="673.8" r="0.8" fill="#2040d0"/><circle cx="1336.7" cy="706.9" r="0.8" fill="#2040d0"/><circle cx="1331.7" cy="699.7" r="0.8" fill="#2040d0"/><circle cx="1334.9" cy="669.1" r="0.8" fill="#2040d0"/><circle cx="1343.4" cy="650.3" r="0.8" fill="#2040d0"/><circle cx="1331.1" cy="665.7" r="0.8" fill="#2040d0"/><circle cx="1331.1" cy="667.8" r="0.8" fill="#2040d0"/><circle cx="1335.1" cy="699.0" r="0.8" fill="#2040d0"/><circle cx="1333.6" cy="679.1" r="0.8" fill="#2040d0"/><circle cx="1331.2" cy="652.9" r="0.8" fill="#2040d0"/><circle cx="1337.1" cy="699.4" r="0.8" fill="#2040d0"/><circle cx="1332.6" cy="698.8" r="0.8" fill="#2040d0"/><circle cx="1327.6" cy="661.5" r="0.8" fill="#2040d0"/><circle cx="1333.1" cy="680.6" r="0.8" fill="#2040d0"/><circle cx="1334.5" cy="676.5" r="0.8" fill="#2040d0"/><circle cx="1333.1" cy="683.3" r="0.8" fill="#2040d0"/><circle cx="1331.9" cy="695.7" r="0.8" fill="#2040d0"/><circle cx="1335.0" cy="702.4" r="0.8" fill="#2040d0"/><circle cx="1331.4" cy="652.9" r="0.8" fill="#2040d0"/><circle cx="1333.5" cy="680.4" r="0.8" fill="#2040d0"/><circle cx="1332.6" cy="682.2" r="0.8" fill="#2040d0"/><circle cx="1339.0" cy="665.6" r="0.8" fill="#2040d0"/><circle cx="1337.7" cy="666.6" r="0.8" fill="#2040d0"/><circle cx="1335.4" cy="695.7" r="0.8" fill="#2040d0"/><circle cx="1340.2" cy="675.9" r="0.8" fill="#2040d0"/><circle cx="1339.5" cy="675.4" r="0.8" fill="#2040d0"/><circle cx="1333.5" cy="653.3" r="0.8" fill="#2040d0"/><circle cx="1329.8" cy="686.4" r="0.8" fill="#2040d0"/><circle cx="1331.1" cy="699.2" r="0.8" fill="#2040d0"/><circle cx="1331.0" cy="684.0" r="0.8" fill="#2040d0"/><circle cx="1335.1" cy="702.6" r="0.8" fill="#2040d0"/><circle cx="1334.6" cy="695.6" r="0.8" fill="#2040d0"/><circle cx="1336.4" cy="688.4" r="0.8" fill="#2040d0"/><circle cx="1330.4" cy="666.8" r="0.8" fill="#2040d0"/><circle cx="1331.6" cy="697.8" r="0.8" fill="#2040d0"/><circle cx="1332.4" cy="702.3" r="0.8" fill="#2040d0"/><circle cx="1327.8" cy="655.7" r="0.8" fill="#2040d0"/><circle cx="1338.7" cy="694.7" r="0.8" fill="#2040d0"/><circle cx="1336.7" cy="673.6" r="0.8" fill="#2040d0"/><circle cx="1340.7" cy="664.7" r="0.8" fill="#2040d0"/><circle cx="1331.1" cy="689.1" r="0.8" fill="#2040d0"/><circle cx="1338.0" cy="653.2" r="0.8" fill="#2040d0"/><circle cx="1340.5" cy="652.4" r="0.8" fill="#2040d0"/><circle cx="1330.7" cy="666.7" r="0.8" fill="#2040d0"/><circle cx="1332.5" cy="683.2" r="0.8" fill="#2040d0"/><circle cx="1330.6" cy="682.0" r="0.8" fill="#2040d0"/><circle cx="1333.3" cy="702.0" r="0.8" fill="#2040d0"/><circle cx="1331.7" cy="698.0" r="0.8" fill="#2040d0"/><circle cx="1338.9" cy="695.6" r="0.8" fill="#2040d0"/><circle cx="1328.3" cy="672.3" r="0.8" fill="#2040d0"/><circle cx="1336.5" cy="671.7" r="0.8" fill="#2040d0"/><circle cx="1335.3" cy="662.7" r="0.8" fill="#2040d0"/><circle cx="1334.0" cy="655.3" r="0.8" fill="#2040d0"/><circle cx="1333.9" cy="691.5" r="0.8" fill="#2040d0"/><circle cx="1330.6" cy="688.7" r="0.8" fill="#2040d0"/><circle cx="1331.4" cy="697.2" r="0.8" fill="#2040d0"/><circle cx="1338.3" cy="702.6" r="0.8" fill="#2040d0"/><circle cx="1334.8" cy="703.5" r="0.8" fill="#2040d0"/><circle cx="1332.4" cy="666.6" r="0.8" fill="#2040d0"/><circle cx="1334.6" cy="692.8" r="0.8" fill="#2040d0"/><circle cx="1331.6" cy="703.0" r="0.8" fill="#2040d0"/><circle cx="1339.1" cy="677.6" r="0.8" fill="#2040d0"/><circle cx="1335.1" cy="684.1" r="0.8" fill="#2040d0"/><circle cx="1328.5" cy="655.0" r="0.8" fill="#2040d0"/><circle cx="1340.5" cy="665.5" r="0.8" fill="#2040d0"/><circle cx="1332.3" cy="698.2" r="0.8" fill="#2040d0"/><circle cx="1331.1" cy="702.7" r="0.8" fill="#2040d0"/><circle cx="1241.2" cy="676.9" r="0.85" fill="#2040d0"/><circle cx="1256.2" cy="712.8" r="0.85" fill="#2040d0"/><circle cx="1269.0" cy="718.2" r="0.85" fill="#2040d0"/><circle cx="1287.3" cy="719.8" r="0.85" fill="#2040d0"/><circle cx="1283.6" cy="701.0" r="0.85" fill="#2040d0"/><circle cx="1275.9" cy="686.2" r="0.85" fill="#2040d0"/><circle cx="1300.4" cy="695.3" r="0.85" fill="#2040d0"/><circle cx="1304.4" cy="711.4" r="0.85" fill="#2040d0"/><circle cx="1294.4" cy="686.2" r="0.85" fill="#2040d0"/><circle cx="1309.2" cy="699.8" r="0.85" fill="#2040d0"/><circle cx="1316.5" cy="690.1" r="0.85" fill="#2040d0"/><circle cx="1266.2" cy="700.6" r="0.85" fill="#2040d0"/><circle cx="1251.1" cy="690.3" r="0.85" fill="#2040d0"/><circle cx="1290.2" cy="707.5" r="0.85" fill="#2040d0"/><circle cx="1276.9" cy="710.7" r="0.85" fill="#2040d0"/><circle cx="1235.9" cy="723.8" r="0.85" fill="#2040d0"/><circle cx="1313.3" cy="692.6" r="0.8" fill="#2040d0"/><circle cx="1298.1" cy="694.3" r="0.8" fill="#2040d0"/><circle cx="1318.4" cy="681.6" r="0.8" fill="#2040d0"/><circle cx="1298.0" cy="690.1" r="0.8" fill="#2040d0"/><circle cx="1308.7" cy="690.8" r="0.8" fill="#2040d0"/><circle cx="1319.3" cy="685.7" r="0.8" fill="#2040d0"/><circle cx="1318.0" cy="687.1" r="0.8" fill="#2040d0"/><circle cx="1308.4" cy="688.9" r="0.8" fill="#2040d0"/><circle cx="1317.1" cy="685.9" r="0.8" fill="#2040d0"/><circle cx="1316.9" cy="682.6" r="0.8" fill="#2040d0"/><circle cx="1315.9" cy="691.9" r="0.8" fill="#2040d0"/><circle cx="1308.5" cy="695.1" r="0.8" fill="#2040d0"/><circle cx="1425.7" cy="676.8" r="0.85" fill="#2040d0"/><circle cx="1413.6" cy="712.2" r="0.85" fill="#2040d0"/><circle cx="1399.9" cy="720.8" r="0.85" fill="#2040d0"/><circle cx="1381.5" cy="721.0" r="0.85" fill="#2040d0"/><circle cx="1385.2" cy="699.1" r="0.85" fill="#2040d0"/><circle cx="1392.7" cy="684.6" r="0.85" fill="#2040d0"/><circle cx="1369.7" cy="696.2" r="0.85" fill="#2040d0"/><circle cx="1366.2" cy="711.3" r="0.85" fill="#2040d0"/><circle cx="1374.9" cy="683.9" r="0.85" fill="#2040d0"/><circle cx="1360.0" cy="701.1" r="0.85" fill="#2040d0"/><circle cx="1355.4" cy="688.2" r="0.85" fill="#2040d0"/><circle cx="1403.6" cy="700.4" r="0.85" fill="#2040d0"/><circle cx="1421.5" cy="688.2" r="0.85" fill="#2040d0"/><circle cx="1380.1" cy="708.8" r="0.85" fill="#2040d0"/><circle cx="1392.9" cy="711.4" r="0.85" fill="#2040d0"/><circle cx="1435.8" cy="721.8" r="0.85" fill="#2040d0"/><circle cx="1372.4" cy="689.2" r="0.8" fill="#2040d0"/><circle cx="1372.9" cy="694.3" r="0.8" fill="#2040d0"/><circle cx="1358.0" cy="684.4" r="0.8" fill="#2040d0"/><circle cx="1353.5" cy="690.3" r="0.8" fill="#2040d0"/><circle cx="1365.6" cy="688.2" r="0.8" fill="#2040d0"/><circle cx="1356.2" cy="684.3" r="0.8" fill="#2040d0"/><circle cx="1352.1" cy="683.7" r="0.8" fill="#2040d0"/><circle cx="1355.9" cy="694.2" r="0.8" fill="#2040d0"/><circle cx="1374.5" cy="699.5" r="0.8" fill="#2040d0"/><circle cx="1360.0" cy="690.1" r="0.8" fill="#2040d0"/><circle cx="1368.4" cy="698.4" r="0.8" fill="#2040d0"/><circle cx="1367.6" cy="694.9" r="0.8" fill="#2040d0"/><circle cx="1332.8" cy="630.4" r="0.85" fill="#78f078"/><circle cx="1336.7" cy="631.5" r="0.85" fill="#78f078"/><circle cx="1332.2" cy="631.0" r="0.85" fill="#78f078"/><circle cx="1333.7" cy="627.1" r="0.85" fill="#78f078"/><circle cx="1337.4" cy="630.7" r="0.85" fill="#78f078"/><circle cx="1336.1" cy="626.9" r="0.85" fill="#78f078"/><circle cx="1336.6" cy="632.6" r="0.85" fill="#78f078"/><circle cx="1337.0" cy="631.2" r="0.85" fill="#78f078"/><circle cx="1336.6" cy="631.6" r="0.85" fill="#78f078"/><circle cx="1335.1" cy="629.0" r="0.85" fill="#78f078"/><circle cx="1337.9" cy="687.1" r="0.8" fill="#78f078"/><circle cx="1338.3" cy="657.9" r="0.8" fill="#78f078"/><circle cx="1339.2" cy="671.9" r="0.8" fill="#78f078"/><circle cx="1339.1" cy="647.0" r="0.8" fill="#78f078"/><circle cx="1339.3" cy="687.2" r="0.8" fill="#78f078"/><circle cx="1332.1" cy="690.3" r="0.8" fill="#78f078"/><circle cx="1331.9" cy="651.9" r="0.8" fill="#78f078"/><circle cx="1334.2" cy="654.2" r="0.8" fill="#78f078"/><circle cx="1334.5" cy="694.5" r="0.8" fill="#78f078"/><circle cx="1336.5" cy="682.6" r="0.8" fill="#78f078"/><circle cx="1333.5" cy="687.0" r="0.8" fill="#78f078"/><circle cx="1337.5" cy="681.0" r="0.8" fill="#78f078"/><circle cx="1339.0" cy="689.5" r="0.8" fill="#78f078"/><circle cx="1333.7" cy="645.2" r="0.8" fill="#78f078"/><circle cx="1336.1" cy="690.2" r="0.8" fill="#78f078"/><circle cx="1333.0" cy="675.7" r="0.8" fill="#78f078"/><circle cx="1338.0" cy="687.6" r="0.8" fill="#78f078"/><circle cx="1329.6" cy="669.3" r="0.8" fill="#78f078"/><circle cx="1329.8" cy="646.6" r="0.8" fill="#78f078"/><circle cx="1337.7" cy="665.1" r="0.8" fill="#78f078"/><circle cx="1335.6" cy="667.4" r="0.8" fill="#78f078"/><circle cx="1333.0" cy="652.8" r="0.8" fill="#78f078"/><circle cx="1333.1" cy="690.7" r="0.8" fill="#78f078"/><circle cx="1335.8" cy="657.5" r="0.8" fill="#78f078"/><circle cx="1330.5" cy="656.3" r="0.8" fill="#78f078"/><circle cx="1336.6" cy="666.5" r="0.8" fill="#78f078"/><circle cx="1336.2" cy="688.4" r="0.8" fill="#78f078"/><circle cx="1330.8" cy="681.0" r="0.8" fill="#78f078"/><circle cx="1330.0" cy="689.4" r="0.8" fill="#78f078"/><circle cx="1331.4" cy="656.3" r="0.8" fill="#78f078"/><circle cx="1339.2" cy="661.7" r="0.8" fill="#78f078"/><circle cx="1331.8" cy="693.4" r="0.8" fill="#78f078"/><circle cx="1335.7" cy="693.6" r="0.8" fill="#78f078"/><circle cx="1333.5" cy="670.0" r="0.8" fill="#78f078"/><circle cx="1339.2" cy="670.4" r="0.8" fill="#78f078"/><circle cx="1339.5" cy="651.4" r="0.8" fill="#78f078"/><circle cx="1337.9" cy="649.7" r="0.8" fill="#78f078"/><circle cx="1334.9" cy="640.0" r="0.8" fill="#78f078"/><circle cx="1331.4" cy="696.7" r="0.8" fill="#78f078"/><circle cx="1334.1" cy="688.6" r="0.8" fill="#78f078"/><circle cx="1325.6" cy="686.0" r="0.9" fill="#78f078"/><circle cx="1326.3" cy="688.1" r="0.9" fill="#78f078"/><circle cx="1327.0" cy="690.2" r="0.9" fill="#78f078"/><circle cx="1327.7" cy="692.2" r="0.9" fill="#78f078"/><circle cx="1328.4" cy="694.3" r="0.9" fill="#78f078"/><circle cx="1329.1" cy="696.4" r="0.9" fill="#78f078"/><circle cx="1329.8" cy="698.5" r="0.9" fill="#78f078"/><circle cx="1330.4" cy="700.5" r="0.9" fill="#78f078"/><circle cx="1331.1" cy="702.6" r="0.9" fill="#78f078"/><circle cx="1331.8" cy="704.7" r="0.9" fill="#78f078"/><circle cx="1332.5" cy="706.8" r="0.9" fill="#78f078"/><circle cx="1333.2" cy="708.8" r="0.9" fill="#78f078"/><circle cx="1333.9" cy="710.9" r="0.9" fill="#78f078"/><circle cx="1334.6" cy="713.0" r="0.9" fill="#78f078"/><circle cx="1343.6" cy="686.0" r="0.9" fill="#78f078"/><circle cx="1342.9" cy="688.1" r="0.9" fill="#78f078"/><circle cx="1342.2" cy="690.2" r="0.9" fill="#78f078"/><circle cx="1341.5" cy="692.2" r="0.9" fill="#78f078"/><circle cx="1340.8" cy="694.3" r="0.9" fill="#78f078"/><circle cx="1340.1" cy="696.4" r="0.9" fill="#78f078"/><circle cx="1339.4" cy="698.5" r="0.9" fill="#78f078"/><circle cx="1338.8" cy="700.5" r="0.9" fill="#78f078"/><circle cx="1338.1" cy="702.6" r="0.9" fill="#78f078"/><circle cx="1337.4" cy="704.7" r="0.9" fill="#78f078"/><circle cx="1336.7" cy="706.8" r="0.9" fill="#78f078"/><circle cx="1336.0" cy="708.8" r="0.9" fill="#78f078"/><circle cx="1335.3" cy="710.9" r="0.9" fill="#78f078"/><circle cx="1334.6" cy="713.0" r="0.9" fill="#78f078"/><circle cx="1371.7" cy="678.0" r="0.8" fill="#78f078"/><circle cx="1370.1" cy="680.7" r="0.8" fill="#78f078"/><circle cx="1370.1" cy="682.9" r="0.8" fill="#78f078"/><circle cx="1367.3" cy="685.8" r="0.8" fill="#78f078"/><circle cx="1366.3" cy="687.3" r="0.8" fill="#78f078"/><circle cx="1362.5" cy="689.1" r="0.8" fill="#78f078"/><circle cx="1360.7" cy="691.5" r="0.8" fill="#78f078"/><circle cx="1358.0" cy="692.5" r="0.8" fill="#78f078"/><circle cx="1355.7" cy="693.4" r="0.8" fill="#78f078"/><circle cx="1352.5" cy="695.2" r="0.8" fill="#78f078"/><circle cx="1350.2" cy="695.9" r="0.8" fill="#78f078"/><circle cx="1346.0" cy="697.7" r="0.8" fill="#78f078"/><circle cx="1342.1" cy="698.0" r="0.8" fill="#78f078"/><circle cx="1340.0" cy="697.9" r="0.8" fill="#78f078"/><circle cx="1336.2" cy="698.5" r="0.8" fill="#78f078"/><circle cx="1333.7" cy="698.4" r="0.8" fill="#78f078"/><circle cx="1330.1" cy="696.8" r="0.8" fill="#78f078"/><circle cx="1325.9" cy="696.6" r="0.8" fill="#78f078"/><circle cx="1323.9" cy="697.5" r="0.8" fill="#78f078"/><circle cx="1319.1" cy="696.0" r="0.8" fill="#78f078"/><circle cx="1316.9" cy="693.9" r="0.8" fill="#78f078"/><circle cx="1313.6" cy="694.1" r="0.8" fill="#78f078"/><circle cx="1311.3" cy="691.8" r="0.8" fill="#78f078"/><circle cx="1308.9" cy="690.2" r="0.8" fill="#78f078"/><circle cx="1306.0" cy="688.7" r="0.8" fill="#78f078"/><circle cx="1304.6" cy="687.3" r="0.8" fill="#78f078"/><circle cx="1302.2" cy="685.3" r="0.8" fill="#78f078"/><circle cx="1299.6" cy="683.8" r="0.8" fill="#78f078"/><circle cx="1298.7" cy="681.0" r="0.8" fill="#78f078"/><circle cx="1296.6" cy="677.6" r="0.8" fill="#78f078"/><circle cx="1317.7" cy="640.5" r="0.9" fill="#d41a1a"/><circle cx="1318.2" cy="637.3" r="0.9" fill="#d41a1a"/><circle cx="1317.9" cy="635.0" r="0.9" fill="#d41a1a"/><circle cx="1319.8" cy="632.2" r="0.9" fill="#d41a1a"/><circle cx="1320.9" cy="630.0" r="0.9" fill="#d41a1a"/><circle cx="1321.9" cy="627.8" r="0.9" fill="#d41a1a"/><circle cx="1323.7" cy="626.5" r="0.9" fill="#d41a1a"/><circle cx="1326.8" cy="625.9" r="0.9" fill="#d41a1a"/><circle cx="1328.0" cy="623.9" r="0.9" fill="#d41a1a"/><circle cx="1331.4" cy="623.0" r="0.9" fill="#d41a1a"/><circle cx="1333.1" cy="623.0" r="0.9" fill="#d41a1a"/><circle cx="1335.3" cy="622.7" r="0.9" fill="#d41a1a"/><circle cx="1338.2" cy="623.3" r="0.9" fill="#d41a1a"/><circle cx="1341.5" cy="623.8" r="0.9" fill="#d41a1a"/><circle cx="1342.7" cy="625.8" r="0.9" fill="#d41a1a"/><circle cx="1345.1" cy="627.2" r="0.9" fill="#d41a1a"/><circle cx="1347.3" cy="628.8" r="0.9" fill="#d41a1a"/><circle cx="1348.4" cy="629.9" r="0.9" fill="#d41a1a"/><circle cx="1350.3" cy="632.6" r="0.9" fill="#d41a1a"/><circle cx="1350.9" cy="635.2" r="0.9" fill="#d41a1a"/><circle cx="1351.8" cy="637.2" r="0.9" fill="#d41a1a"/><circle cx="1351.4" cy="640.6" r="0.9" fill="#d41a1a"/><circle cx="1307.1" cy="654.6" r="0.85" fill="#d41a1a"/><circle cx="1308.1" cy="651.3" r="0.85" fill="#d41a1a"/><circle cx="1309.7" cy="647.5" r="0.85" fill="#d41a1a"/><circle cx="1311.4" cy="645.8" r="0.85" fill="#d41a1a"/><circle cx="1312.1" cy="643.9" r="0.85" fill="#d41a1a"/><circle cx="1314.2" cy="639.7" r="0.85" fill="#d41a1a"/><circle cx="1316.2" cy="638.1" r="0.85" fill="#d41a1a"/><circle cx="1320.7" cy="636.5" r="0.85" fill="#d41a1a"/><circle cx="1322.8" cy="635.2" r="0.85" fill="#d41a1a"/><circle cx="1325.3" cy="632.8" r="0.85" fill="#d41a1a"/><circle cx="1329.9" cy="633.6" r="0.85" fill="#d41a1a"/><circle cx="1333.2" cy="632.5" r="0.85" fill="#d41a1a"/><circle cx="1337.0" cy="631.8" r="0.85" fill="#d41a1a"/><circle cx="1340.7" cy="633.0" r="0.85" fill="#d41a1a"/><circle cx="1342.6" cy="633.0" r="0.85" fill="#d41a1a"/><circle cx="1346.9" cy="634.1" r="0.85" fill="#d41a1a"/><circle cx="1348.4" cy="637.0" r="0.85" fill="#d41a1a"/><circle cx="1352.0" cy="638.1" r="0.85" fill="#d41a1a"/><circle cx="1354.9" cy="641.2" r="0.85" fill="#d41a1a"/><circle cx="1355.8" cy="642.4" r="0.85" fill="#d41a1a"/><circle cx="1357.6" cy="645.4" r="0.85" fill="#d41a1a"/><circle cx="1360.2" cy="649.5" r="0.85" fill="#d41a1a"/><circle cx="1361.8" cy="652.0" r="0.85" fill="#d41a1a"/><circle cx="1361.9" cy="655.3" r="0.85" fill="#d41a1a"/><circle cx="1282.1" cy="686.7" r="0.85" fill="#d41a1a"/><circle cx="1284.4" cy="681.6" r="0.85" fill="#d41a1a"/><circle cx="1283.8" cy="676.1" r="0.85" fill="#d41a1a"/><circle cx="1287.4" cy="670.8" r="0.85" fill="#d41a1a"/><circle cx="1290.1" cy="667.4" r="0.85" fill="#d41a1a"/><circle cx="1292.4" cy="662.8" r="0.85" fill="#d41a1a"/><circle cx="1295.3" cy="658.9" r="0.85" fill="#d41a1a"/><circle cx="1297.4" cy="654.6" r="0.85" fill="#d41a1a"/><circle cx="1303.1" cy="651.0" r="0.85" fill="#d41a1a"/><circle cx="1306.2" cy="646.4" r="0.85" fill="#d41a1a"/><circle cx="1311.8" cy="646.2" r="0.85" fill="#d41a1a"/><circle cx="1315.7" cy="642.3" r="0.85" fill="#d41a1a"/><circle cx="1320.6" cy="640.4" r="0.85" fill="#d41a1a"/><circle cx="1327.2" cy="642.0" r="0.85" fill="#d41a1a"/><circle cx="1332.8" cy="639.6" r="0.85" fill="#d41a1a"/><circle cx="1337.9" cy="638.8" r="0.85" fill="#d41a1a"/><circle cx="1343.6" cy="640.1" r="0.85" fill="#d41a1a"/><circle cx="1346.3" cy="642.0" r="0.85" fill="#d41a1a"/><circle cx="1351.7" cy="642.5" r="0.85" fill="#d41a1a"/><circle cx="1356.4" cy="645.0" r="0.85" fill="#d41a1a"/><circle cx="1362.5" cy="648.6" r="0.85" fill="#d41a1a"/><circle cx="1365.3" cy="651.6" r="0.85" fill="#d41a1a"/><circle cx="1369.5" cy="653.2" r="0.85" fill="#d41a1a"/><circle cx="1374.7" cy="657.3" r="0.85" fill="#d41a1a"/><circle cx="1377.0" cy="662.0" r="0.85" fill="#d41a1a"/><circle cx="1379.5" cy="667.1" r="0.85" fill="#d41a1a"/><circle cx="1381.7" cy="671.8" r="0.85" fill="#d41a1a"/><circle cx="1385.3" cy="675.7" r="0.85" fill="#d41a1a"/><circle cx="1384.3" cy="681.4" r="0.85" fill="#d41a1a"/><circle cx="1385.0" cy="685.7" r="0.85" fill="#d41a1a"/><circle cx="1312.9" cy="670.6" r="0.9" fill="#d41a1a"/><circle cx="1313.9" cy="669.3" r="0.9" fill="#d41a1a"/><circle cx="1315.3" cy="668.1" r="0.9" fill="#d41a1a"/><circle cx="1317.3" cy="667.0" r="0.9" fill="#d41a1a"/><circle cx="1319.8" cy="666.1" r="0.9" fill="#d41a1a"/><circle cx="1322.6" cy="665.3" r="0.9" fill="#d41a1a"/><circle cx="1325.8" cy="664.7" r="0.9" fill="#d41a1a"/><circle cx="1329.2" cy="664.2" r="0.9" fill="#d41a1a"/><circle cx="1332.8" cy="664.0" r="0.9" fill="#d41a1a"/><circle cx="1336.4" cy="664.0" r="0.9" fill="#d41a1a"/><circle cx="1340.0" cy="664.2" r="0.9" fill="#d41a1a"/><circle cx="1343.4" cy="664.7" r="0.9" fill="#d41a1a"/><circle cx="1346.6" cy="665.3" r="0.9" fill="#d41a1a"/><circle cx="1349.4" cy="666.1" r="0.9" fill="#d41a1a"/><circle cx="1351.9" cy="667.0" r="0.9" fill="#d41a1a"/><circle cx="1353.9" cy="668.1" r="0.9" fill="#d41a1a"/><circle cx="1355.3" cy="669.3" r="0.9" fill="#d41a1a"/><circle cx="1356.3" cy="670.6" r="0.9" fill="#d41a1a"/><circle cx="1309.0" cy="682.4" r="0.9" fill="#d41a1a"/><circle cx="1309.9" cy="681.2" r="0.9" fill="#d41a1a"/><circle cx="1311.4" cy="679.9" r="0.9" fill="#d41a1a"/><circle cx="1313.4" cy="678.8" r="0.9" fill="#d41a1a"/><circle cx="1315.8" cy="677.8" r="0.9" fill="#d41a1a"/><circle cx="1318.6" cy="676.9" r="0.9" fill="#d41a1a"/><circle cx="1321.8" cy="676.2" r="0.9" fill="#d41a1a"/><circle cx="1325.3" cy="675.6" r="0.9" fill="#d41a1a"/><circle cx="1328.9" cy="675.2" r="0.9" fill="#d41a1a"/><circle cx="1332.7" cy="675.0" r="0.9" fill="#d41a1a"/><circle cx="1336.5" cy="675.0" r="0.9" fill="#d41a1a"/><circle cx="1340.3" cy="675.2" r="0.9" fill="#d41a1a"/><circle cx="1343.9" cy="675.6" r="0.9" fill="#d41a1a"/><circle cx="1347.4" cy="676.2" r="0.9" fill="#d41a1a"/><circle cx="1350.6" cy="676.9" r="0.9" fill="#d41a1a"/><circle cx="1353.4" cy="677.8" r="0.9" fill="#d41a1a"/><circle cx="1355.8" cy="678.8" r="0.9" fill="#d41a1a"/><circle cx="1357.8" cy="679.9" r="0.9" fill="#d41a1a"/><circle cx="1359.3" cy="681.2" r="0.9" fill="#d41a1a"/><circle cx="1360.2" cy="682.4" r="0.9" fill="#d41a1a"/><circle cx="1347.6" cy="652.8" r="0.85" fill="#d41a1a"/><circle cx="1345.8" cy="680.4" r="0.85" fill="#d41a1a"/><circle cx="1333.2" cy="691.2" r="0.85" fill="#d41a1a"/><circle cx="1331.7" cy="681.3" r="0.85" fill="#d41a1a"/><circle cx="1342.9" cy="684.5" r="0.85" fill="#d41a1a"/><circle cx="1319.6" cy="657.4" r="0.85" fill="#d41a1a"/><circle cx="1337.2" cy="660.6" r="0.85" fill="#d41a1a"/><circle cx="1320.7" cy="667.2" r="0.85" fill="#d41a1a"/><circle cx="1341.5" cy="685.2" r="0.85" fill="#d41a1a"/><circle cx="1322.0" cy="670.5" r="0.85" fill="#d41a1a"/><circle cx="1335.4" cy="687.6" r="0.85" fill="#d41a1a"/><circle cx="1329.1" cy="654.8" r="0.85" fill="#d41a1a"/><circle cx="1344.6" cy="677.0" r="0.85" fill="#d41a1a"/><circle cx="1338.4" cy="671.4" r="0.85" fill="#d41a1a"/><circle cx="1326.9" cy="660.2" r="0.85" fill="#d41a1a"/><circle cx="1331.9" cy="688.2" r="0.85" fill="#d41a1a"/><circle cx="1337.4" cy="656.2" r="0.85" fill="#d41a1a"/><circle cx="1325.4" cy="657.0" r="0.85" fill="#d41a1a"/><circle cx="1337.0" cy="670.3" r="0.85" fill="#d41a1a"/><circle cx="1340.0" cy="677.5" r="0.85" fill="#d41a1a"/><circle cx="1322.6" cy="669.6" r="0.85" fill="#d41a1a"/><circle cx="1323.4" cy="681.0" r="0.85" fill="#d41a1a"/><circle cx="1331.9" cy="670.8" r="0.85" fill="#d41a1a"/><circle cx="1340.1" cy="678.9" r="0.85" fill="#d41a1a"/><circle cx="1339.0" cy="661.6" r="0.85" fill="#d41a1a"/><circle cx="1333.9" cy="679.7" r="0.85" fill="#d41a1a"/><circle cx="1347.1" cy="657.7" r="0.85" fill="#d41a1a"/><circle cx="1323.1" cy="676.0" r="0.85" fill="#d41a1a"/><circle cx="1349.1" cy="661.5" r="0.85" fill="#d41a1a"/><circle cx="1331.4" cy="661.1" r="0.85" fill="#d41a1a"/><circle cx="1342.5" cy="683.5" r="0.85" fill="#d41a1a"/><circle cx="1340.9" cy="677.4" r="0.85" fill="#d41a1a"/><circle cx="1321.8" cy="653.5" r="0.85" fill="#d41a1a"/><circle cx="1341.5" cy="691.0" r="0.85" fill="#d41a1a"/><circle cx="1320.3" cy="653.5" r="0.85" fill="#d41a1a"/><circle cx="1347.4" cy="661.6" r="0.85" fill="#d41a1a"/><circle cx="1339.7" cy="660.8" r="0.85" fill="#d41a1a"/><circle cx="1337.8" cy="689.2" r="0.85" fill="#d41a1a"/><circle cx="1329.1" cy="688.8" r="0.85" fill="#d41a1a"/><circle cx="1319.9" cy="658.1" r="0.85" fill="#d41a1a"/><circle cx="1324.8" cy="682.3" r="0.85" fill="#d41a1a"/><circle cx="1339.4" cy="690.9" r="0.85" fill="#d41a1a"/><circle cx="1343.9" cy="659.5" r="0.85" fill="#d41a1a"/><circle cx="1335.0" cy="658.5" r="0.85" fill="#d41a1a"/><circle cx="1343.5" cy="656.2" r="0.85" fill="#d41a1a"/><circle cx="1344.4" cy="687.6" r="0.85" fill="#d41a1a"/><circle cx="1345.8" cy="652.1" r="0.85" fill="#d41a1a"/><circle cx="1343.2" cy="674.2" r="0.85" fill="#d41a1a"/><circle cx="1337.9" cy="672.1" r="0.85" fill="#d41a1a"/><circle cx="1342.5" cy="675.8" r="0.85" fill="#d41a1a"/><circle cx="1320.7" cy="655.1" r="0.85" fill="#d41a1a"/><circle cx="1329.0" cy="673.8" r="0.85" fill="#d41a1a"/><circle cx="1320.7" cy="667.9" r="0.85" fill="#d41a1a"/><circle cx="1322.8" cy="681.8" r="0.85" fill="#d41a1a"/><circle cx="1342.1" cy="685.2" r="0.85" fill="#d41a1a"/><circle cx="1324.2" cy="670.3" r="0.85" fill="#d41a1a"/><circle cx="1327.1" cy="678.0" r="0.85" fill="#d41a1a"/><circle cx="1323.7" cy="669.2" r="0.85" fill="#d41a1a"/><circle cx="1335.6" cy="691.1" r="0.85" fill="#d41a1a"/><circle cx="1323.0" cy="666.1" r="0.85" fill="#d41a1a"/><circle cx="1343.3" cy="681.2" r="0.85" fill="#d41a1a"/><circle cx="1325.1" cy="685.9" r="0.85" fill="#d41a1a"/><circle cx="1329.0" cy="666.7" r="0.85" fill="#d41a1a"/><circle cx="1325.9" cy="682.5" r="0.85" fill="#d41a1a"/><circle cx="1347.1" cy="676.3" r="0.85" fill="#d41a1a"/><circle cx="1322.5" cy="682.8" r="0.85" fill="#d41a1a"/><circle cx="1322.5" cy="655.0" r="0.85" fill="#d41a1a"/><circle cx="1337.1" cy="679.7" r="0.85" fill="#d41a1a"/><circle cx="1333.4" cy="672.8" r="0.85" fill="#d41a1a"/><circle cx="1337.7" cy="668.3" r="0.85" fill="#d41a1a"/><circle cx="1282.6" cy="670.0" r="0.9" fill="#d41a1a"/><circle cx="1282.6" cy="672.5" r="0.9" fill="#d41a1a"/><circle cx="1282.6" cy="675.0" r="0.9" fill="#d41a1a"/><circle cx="1282.6" cy="677.5" r="0.9" fill="#d41a1a"/><circle cx="1282.6" cy="680.0" r="0.9" fill="#d41a1a"/><circle cx="1386.6" cy="670.0" r="0.9" fill="#d41a1a"/><circle cx="1386.6" cy="672.5" r="0.9" fill="#d41a1a"/><circle cx="1386.6" cy="675.0" r="0.9" fill="#d41a1a"/><circle cx="1386.6" cy="677.5" r="0.9" fill="#d41a1a"/><circle cx="1386.6" cy="680.0" r="0.9" fill="#d41a1a"/></svg>
<div style="left:868px;top:788px;width:1045px;height:258px;background:#fafbfe;border-radius:4px 4px 0 0"></div>
<div style="left:868px;top:821px;width:1045px;height:1px;background:#e3e4e8"></div>
<div class="t" style="left:880.74px;top:799.84px;font-size:12px;line-height:12px;color:#505050;transform:scaleX(1.0855);transform-origin:0.96px 0;">Messages</div>
<svg style="left:949px;top:802px;" width="10" height="10" viewBox="0 0 10 10"><path d="M1 1l8 8M9 1L1 9" stroke="#aaa" stroke-width="1"/></svg>
<div class="t" style="left:987.24px;top:799.84px;font-size:12px;line-height:12px;color:#505050;transform:scaleX(1.0982);transform-origin:0.96px 0;">Progress</div>
<div class="t" style="left:1065.14px;top:799.84px;font-size:12px;line-height:12px;color:#505050;transform:scaleX(1.1530);transform-origin:0.96px 0;">Log</div>
<div class="t" style="left:1113.96px;top:799.84px;font-size:12px;line-height:12px;color:#3d6ea8;transform:scaleX(1.0847);transform-origin:0.54px 0;">Objective Table 2</div>
<svg style="left:1222px;top:802px;" width="11" height="11" viewBox="0 0 11 11"><path d="M1 1l9 9M10 1L1 10" stroke="#999" stroke-width="1.1"/></svg>
<div style="left:1109px;top:818px;width:132px;height:2.4px;background:#3a78b4"></div>
<svg style="left:1860px;top:803px;" width="10" height="6" viewBox="0 0 10 6"><path d="M1 1l4 4 4-4" fill="none" stroke="#555" stroke-width="1.1"/></svg>
<svg style="left:1878px;top:801px;" width="10" height="10" viewBox="0 0 10 10"><rect x="0.5" y="0.5" width="9" height="9" fill="none" stroke="#555" stroke-width="1"/><rect x="0.5" y="0.5" width="9" height="2" fill="#555"/></svg>
<svg style="left:1896px;top:800px;" width="8" height="11" viewBox="0 0 8 11"><rect x="2" y="0.5" width="4" height="6" fill="none" stroke="#555" stroke-width="1"/><rect x="4.5" y="0.5" width="1.5" height="6" fill="#555"/><path d="M0.5 7h7M4 7v4" stroke="#555" stroke-width="1"/></svg>
<svg style="left:875px;top:826px;" width="17" height="16" viewBox="0 0 17 16"><text x="0" y="5.0" font-size="5" fill="#2a6db0" font-family="Liberation Sans">1</text><path d="M5 3.5h11" stroke="#2a6db0" stroke-width="1.3"/><text x="0" y="10.5" font-size="5" fill="#2a6db0" font-family="Liberation Sans">2</text><path d="M5 9.0h11" stroke="#2a6db0" stroke-width="1.3"/><text x="0" y="16.0" font-size="5" fill="#2a6db0" font-family="Liberation Sans">3</text><path d="M5 14.5h11" stroke="#2a6db0" stroke-width="1.3"/></svg>
<div style="left:898px;top:826px;width:1px;height:16px;background:#d6d6d8"></div>
<div class="t" style="left:905.26px;top:826.80px;font-size:8.5px;line-height:8.5px;color:#3a86cf;transform:scaleX(1.0598);transform-origin:0.34px 0;">8.85</div>
<div class="t" style="left:906.26px;top:834.80px;font-size:8.5px;line-height:8.5px;color:#3a86cf;transform:scaleX(0.8478);transform-origin:0.34px 0;">e-12</div>
<div style="left:927px;top:824px;width:20px;height:19px;background:#d4e6f7;border:1px solid #a8cdee;border-radius:2px;box-sizing:border-box"></div>
<div class="t" style="left:929.34px;top:831.50px;font-size:6.5px;line-height:6.5px;color:#3a86cf;font-weight:700;transform:scaleX(0.8392);transform-origin:0.16px 0;">AUTO</div>
<div class="t" style="left:953.26px;top:826.80px;font-size:8.5px;line-height:8.5px;color:#3a86cf;transform:scaleX(1.0687);transform-origin:0.34px 0;">8.5</div>
<div class="t" style="left:954.26px;top:834.80px;font-size:8.5px;line-height:8.5px;color:#3a86cf;transform:scaleX(0.7699);transform-origin:0.34px 0;">e-1</div>
<div class="t" style="left:974.96px;top:826.80px;font-size:8.5px;line-height:8.5px;color:#3a86cf;transform:scaleX(1.1469);transform-origin:0.34px 0;">850</div>
<div class="t" style="left:975.96px;top:834.80px;font-size:8.5px;line-height:8.5px;color:#3a86cf;transform:scaleX(1.0774);transform-origin:0.34px 0;">e-3</div>
<div class="t" style="left:996.87px;top:829.96px;font-size:9.5px;line-height:9.5px;color:#3a86cf;transform:scaleX(0.9851);transform-origin:0.33px 0;">0.85</div>
<div style="left:1021px;top:826px;width:1px;height:16px;background:#d6d6d8"></div>
<div style="left:1027px;top:824px;width:20px;height:19px;background:#d4e6f7;border:1px solid #a8cdee;border-radius:2px;box-sizing:border-box"></div>
<svg style="left:1030px;top:828px;" width="14" height="11" viewBox="0 0 14 11"><path d="M1 0v11" stroke="#2a6db0" stroke-width="0.9"/><path d="M4 0v11" stroke="#2a6db0" stroke-width="0.9"/><path d="M7 0v11" stroke="#2a6db0" stroke-width="0.9"/><path d="M10 0v11" stroke="#2a6db0" stroke-width="0.9"/><path d="M13 0v11" stroke="#2a6db0" stroke-width="0.9"/><rect x="0.5" y="0.5" width="13" height="10" fill="none" stroke="#2a6db0" stroke-width="1"/><rect x="0.5" y="0.5" width="13" height="2.5" fill="#2a6db0"/><path d="M0 3.0h14" stroke="#2a6db0" stroke-width="0.8"/><path d="M0 5.5h14" stroke="#2a6db0" stroke-width="0.8"/><path d="M0 8.0h14" stroke="#2a6db0" stroke-width="0.8"/></svg>
<svg style="left:1052px;top:826px;" width="16" height="16" viewBox="0 0 16 16"><circle cx="8" cy="8" r="7" fill="none" stroke="#2a6db0" stroke-width="1.2"/><circle cx="8" cy="8" r="3.5" fill="none" stroke="#2a6db0" stroke-width="1"/><path d="M1 8h14M8 1v14" stroke="#2a6db0" stroke-width="1"/></svg>
<div style="left:1075px;top:826px;width:1px;height:16px;background:#d6d6d8"></div>
<svg style="left:1085px;top:826px;" width="13" height="17" viewBox="0 0 13 17"><path d="M1 1l4 8" stroke="#555" stroke-width="1.4"/><path d="M3 8l3-1 4 9H5z" fill="#e6a84a"/></svg>
<svg style="left:1107px;top:826px;" width="13" height="17" viewBox="0 0 13 17"><path d="M0.5 3h12M4 3V1h5v2" fill="none" stroke="#2a6db0" stroke-width="1.3"/><path d="M2 4.5h9l-0.8 12H2.8z" fill="#2a6db0"/><path d="M4.5 6.5v8M6.5 6.5v8M8.5 6.5v8" stroke="#f9fafd" stroke-width="0.9"/></svg>
<div style="left:1129px;top:826px;width:1px;height:16px;background:#d6d6d8"></div>
<svg style="left:1138px;top:827px;" width="16" height="15" viewBox="0 0 16 15"><path d="M1 1h13" stroke="#b040a0" stroke-width="0.9"/><path d="M1 4h13" stroke="#b040a0" stroke-width="0.9"/><path d="M1 7h13" stroke="#b040a0" stroke-width="0.9"/><path d="M1 10h13" stroke="#b040a0" stroke-width="0.9"/><path d="M1 13h13" stroke="#b040a0" stroke-width="0.9"/><path d="M1 1v12" stroke="#b040a0" stroke-width="0.9"/><path d="M5 1v12" stroke="#b040a0" stroke-width="0.9"/><path d="M9 1v12" stroke="#b040a0" stroke-width="0.9"/><path d="M13 1v12" stroke="#b040a0" stroke-width="0.9"/></svg>
<div style="left:1161px;top:827px;width:15px;height:14px;background:#b84aa8"></div>
<svg style="left:1183px;top:826px;" width="16" height="16" viewBox="0 0 16 16"><path d="M8 2c-4 0-6 3-6 6s3 6 6 6 5-2 5-5-2-4-4-4-3 1-3 3 1 2 2 2" fill="none" stroke="#c04ab0" stroke-width="1.5"/></svg>
<svg style="left:1207px;top:827px;" width="15" height="15" viewBox="0 0 15 15"><rect x="0.5" y="0.5" width="14" height="14" fill="none" stroke="#bbb" stroke-width="1"/><circle cx="3" cy="11" r="0.6" fill="#b040a0"/><circle cx="10" cy="8" r="0.6" fill="#b040a0"/><circle cx="7" cy="5" r="0.6" fill="#b040a0"/><circle cx="4" cy="11" r="0.6" fill="#b040a0"/><circle cx="11" cy="8" r="0.6" fill="#b040a0"/><circle cx="8" cy="5" r="0.6" fill="#b040a0"/><circle cx="5" cy="11" r="0.6" fill="#b040a0"/><circle cx="12" cy="8" r="0.6" fill="#b040a0"/><circle cx="9" cy="5" r="0.6" fill="#b040a0"/><circle cx="6" cy="11" r="0.6" fill="#b040a0"/><circle cx="3" cy="8" r="0.6" fill="#b040a0"/><circle cx="10" cy="5" r="0.6" fill="#b040a0"/></svg>
<svg style="left:1228px;top:826px;" width="18" height="16" viewBox="0 0 18 16"><path d="M1 2h9M1 6h14M1 10h7M1 14h12" stroke="#b040a0" stroke-width="1.4"/><path d="M12 1l4 3-4 3z" fill="#b040a0"/></svg>
<div style="left:1252px;top:826px;width:1px;height:16px;background:#d6d6d8"></div>
<svg style="left:1260px;top:826px;" width="17" height="17" viewBox="0 0 17 17"><rect x="0.5" y="0.5" width="10" height="12" fill="none" stroke="#777" stroke-width="1"/><rect x="5" y="5" width="11" height="11" fill="#f9fafd" stroke="#2a6db0" stroke-width="1.1"/><path d="M5 8h11M5 11h11M9 5v11M12.5 5v11" stroke="#2a6db0" stroke-width="0.9"/></svg>
<svg style="left:1283px;top:827px;" width="16" height="15" viewBox="0 0 16 15"><path d="M10 1H1v12h10" fill="none" stroke="#777" stroke-width="1.1"/><path d="M5 7h9" stroke="#2a6db0" stroke-width="1.5"/><path d="M12 3.5l4 3.5-4 3.5z" fill="#2a6db0"/></svg>
<svg style="left:1306px;top:827px;" width="16" height="15" viewBox="0 0 16 15"><rect x="0.5" y="0.5" width="11" height="9" fill="none" stroke="#777" stroke-width="1"/><rect x="4" y="5" width="11" height="9" fill="#f9fafd" stroke="#2a6db0" stroke-width="1.1"/><path d="M6 9h7M6 11.5h7" stroke="#2a6db0" stroke-width="1"/></svg>
<div style="left:1329px;top:826px;width:1px;height:16px;background:#d6d6d8"></div>
<svg style="left:1338px;top:826px;" width="13" height="16" viewBox="0 0 13 16"><rect x="0.5" y="0.5" width="12" height="15" fill="none" stroke="#777" stroke-width="1"/><path d="M3 4h7M3 8h7M3 12h7" stroke="#777" stroke-width="1.2"/></svg>
<svg style="left:1361px;top:827px;" width="14" height="14" viewBox="0 0 14 14"><path d="M0 0.5h14" stroke="#b040a0" stroke-width="1.1"/><path d="M0 4.8h14" stroke="#b040a0" stroke-width="1.1"/><path d="M0 9.1h14" stroke="#b040a0" stroke-width="1.1"/><path d="M0 13.4h14" stroke="#b040a0" stroke-width="1.1"/><path d="M0.5 0v14" stroke="#b040a0" stroke-width="1.1"/><path d="M4.8 0v14" stroke="#b040a0" stroke-width="1.1"/><path d="M9.1 0v14" stroke="#b040a0" stroke-width="1.1"/><path d="M13.4 0v14" stroke="#b040a0" stroke-width="1.1"/></svg>
<svg style="left:1382px;top:832px;" width="8" height="5" viewBox="0 0 8 5"><path d="M0 0h8l-4 5z" fill="#111"/></svg>
<div style="left:872px;top:847px;width:1037px;height:195px;background:#fff;border:1px solid #cfcfcf;box-sizing:border-box"></div>
<div style="left:873px;top:848px;width:1018px;height:26px;background:#f0f0f0"></div>
<div style="left:936px;top:848px;width:1px;height:188px;background:#c4c4c4"></div>
<div style="left:1000px;top:848px;width:1px;height:188px;background:#c4c4c4"></div>
<div style="left:1064px;top:848px;width:1px;height:188px;background:#c4c4c4"></div>
<div style="left:1128px;top:848px;width:1px;height:188px;background:#c4c4c4"></div>
<div style="left:1192px;top:848px;width:1px;height:188px;background:#c4c4c4"></div>
<div style="left:1256px;top:848px;width:1px;height:188px;background:#c4c4c4"></div>
<div style="left:1320px;top:848px;width:1px;height:188px;background:#c4c4c4"></div>
<div style="left:1381px;top:848px;width:1px;height:188px;background:#c4c4c4"></div>
<div class="t" style="left:877.82px;top:857.84px;font-size:12px;line-height:12px;color:#1b1b1b;transform:scaleX(0.9477);transform-origin:0.48px 0;">dR1_1 (m)</div>
<div class="t" style="left:941.92px;top:857.84px;font-size:12px;line-height:12px;color:#1b1b1b;transform:scaleX(0.9477);transform-origin:0.48px 0;">dR2_1 (m)</div>
<div class="t" style="left:1005.72px;top:857.84px;font-size:12px;line-height:12px;color:#1b1b1b;transform:scaleX(0.9477);transform-origin:0.48px 0;">dR2_2 (m)</div>
<div class="t" style="left:1069.82px;top:857.84px;font-size:12px;line-height:12px;color:#1b1b1b;transform:scaleX(0.9477);transform-origin:0.48px 0;">dR1_4 (m)</div>
<div class="t" style="left:1133.72px;top:857.84px;font-size:12px;line-height:12px;color:#1b1b1b;transform:scaleX(0.9477);transform-origin:0.48px 0;">dR2_4 (m)</div>
<div class="t" style="left:1197.82px;top:857.84px;font-size:12px;line-height:12px;color:#1b1b1b;transform:scaleX(0.9477);transform-origin:0.48px 0;">dR2_5 (m)</div>
<div class="t" style="left:1261.62px;top:857.84px;font-size:12px;line-height:12px;color:#1b1b1b;transform:scaleX(0.9477);transform-origin:0.48px 0;">dR1_6 (m)</div>
<div class="t" style="left:1325.76px;top:857.84px;font-size:12px;line-height:12px;color:#1b1b1b;transform:scaleX(1.0151);transform-origin:0.54px 0;">Objective</div>
<div style="left:872px;top:891px;width:1019px;height:1px;background:#bcbcbc"></div>
<div class="t" style="left:873.76px;top:877.24px;font-size:12px;line-height:12px;color:#1b1b1b;transform:scaleX(0.9108);transform-origin:0.24px 0;">4.3724E-4</div>
<div class="t" style="left:937.78px;top:877.24px;font-size:12px;line-height:12px;color:#1b1b1b;transform:scaleX(0.8961);transform-origin:0.42px 0;">0.0059282</div>
<div class="t" style="left:1001.52px;top:877.24px;font-size:12px;line-height:12px;color:#1b1b1b;transform:scaleX(0.9396);transform-origin:0.48px 0;">-0.022440</div>
<div class="t" style="left:1065.20px;top:877.24px;font-size:12px;line-height:12px;color:#1b1b1b;transform:scaleX(0.9169);transform-origin:0.60px 0;">2.6178E-4</div>
<div class="t" style="left:1130.02px;top:877.24px;font-size:12px;line-height:12px;color:#1b1b1b;transform:scaleX(0.9477);transform-origin:0.48px 0;">-3.7737E-4</div>
<div class="t" style="left:1193.68px;top:877.24px;font-size:12px;line-height:12px;color:#1b1b1b;transform:scaleX(0.8961);transform-origin:0.42px 0;">0.0067037</div>
<div class="t" style="left:1257.42px;top:877.24px;font-size:12px;line-height:12px;color:#1b1b1b;transform:scaleX(0.9477);transform-origin:0.48px 0;">-1.6807E-4</div>
<div class="t" style="left:1321.10px;top:877.24px;font-size:12px;line-height:12px;color:#1b1b1b;transform:scaleX(0.9140);transform-origin:0.90px 0;">1.2479E-10</div>
<div style="left:872px;top:909px;width:1019px;height:1px;background:#bcbcbc"></div>
<div class="t" style="left:873.76px;top:895.21px;font-size:12px;line-height:12px;color:#1b1b1b;transform:scaleX(0.9260);transform-origin:0.24px 0;">4.7115E-4</div>
<div class="t" style="left:937.78px;top:895.21px;font-size:12px;line-height:12px;color:#1b1b1b;transform:scaleX(0.8961);transform-origin:0.42px 0;">0.0056617</div>
<div class="t" style="left:1001.52px;top:895.21px;font-size:12px;line-height:12px;color:#1b1b1b;transform:scaleX(0.9375);transform-origin:0.48px 0;">-0.020504</div>
<div class="t" style="left:1065.38px;top:895.21px;font-size:12px;line-height:12px;color:#1b1b1b;transform:scaleX(0.9138);transform-origin:0.42px 0;">3.0191E-4</div>
<div class="t" style="left:1130.02px;top:895.21px;font-size:12px;line-height:12px;color:#1b1b1b;transform:scaleX(0.9477);transform-origin:0.48px 0;">-7.1219E-4</div>
<div class="t" style="left:1193.50px;top:895.21px;font-size:12px;line-height:12px;color:#1b1b1b;transform:scaleX(0.9169);transform-origin:0.60px 0;">2.7412E-4</div>
<div class="t" style="left:1257.42px;top:895.21px;font-size:12px;line-height:12px;color:#1b1b1b;transform:scaleX(0.9507);transform-origin:0.48px 0;">-6.7088E-5</div>
<div class="t" style="left:1321.10px;top:895.21px;font-size:12px;line-height:12px;color:#1b1b1b;transform:scaleX(0.9140);transform-origin:0.90px 0;">1.2138E-10</div>
<div style="left:872px;top:927px;width:1019px;height:1px;background:#bcbcbc"></div>
<div class="t" style="left:873.76px;top:913.18px;font-size:12px;line-height:12px;color:#1b1b1b;transform:scaleX(0.9108);transform-origin:0.24px 0;">4.5159E-4</div>
<div class="t" style="left:937.78px;top:913.18px;font-size:12px;line-height:12px;color:#1b1b1b;transform:scaleX(0.8952);transform-origin:0.42px 0;">0.0058255</div>
<div class="t" style="left:1001.52px;top:913.18px;font-size:12px;line-height:12px;color:#1b1b1b;transform:scaleX(0.9569);transform-origin:0.48px 0;">-0.011588</div>
<div class="t" style="left:1065.20px;top:913.18px;font-size:12px;line-height:12px;color:#1b1b1b;transform:scaleX(0.9169);transform-origin:0.60px 0;">2.4780E-4</div>
<div class="t" style="left:1130.02px;top:913.18px;font-size:12px;line-height:12px;color:#1b1b1b;transform:scaleX(0.9477);transform-origin:0.48px 0;">-7.3930E-4</div>
<div class="t" style="left:1193.62px;top:913.18px;font-size:12px;line-height:12px;color:#1b1b1b;transform:scaleX(0.9703);transform-origin:0.48px 0;">-0.011124</div>
<div class="t" style="left:1257.42px;top:913.18px;font-size:12px;line-height:12px;color:#1b1b1b;transform:scaleX(0.9477);transform-origin:0.48px 0;">-3.2355E-4</div>
<div class="t" style="left:1321.10px;top:913.18px;font-size:12px;line-height:12px;color:#1b1b1b;transform:scaleX(0.9140);transform-origin:0.90px 0;">1.3316E-10</div>
<div style="left:872px;top:945px;width:1019px;height:1px;background:#bcbcbc"></div>
<div class="t" style="left:873.58px;top:931.15px;font-size:12px;line-height:12px;color:#1b1b1b;transform:scaleX(0.9138);transform-origin:0.42px 0;">3.2012E-4</div>
<div class="t" style="left:937.78px;top:931.15px;font-size:12px;line-height:12px;color:#1b1b1b;transform:scaleX(0.8961);transform-origin:0.42px 0;">0.0062372</div>
<div class="t" style="left:1001.52px;top:931.15px;font-size:12px;line-height:12px;color:#1b1b1b;transform:scaleX(0.9407);transform-origin:0.48px 0;">-0.023415</div>
<div class="t" style="left:1065.20px;top:931.15px;font-size:12px;line-height:12px;color:#1b1b1b;transform:scaleX(0.9169);transform-origin:0.60px 0;">2.4825E-4</div>
<div class="t" style="left:1130.02px;top:931.15px;font-size:12px;line-height:12px;color:#1b1b1b;transform:scaleX(0.9477);transform-origin:0.48px 0;">-5.6613E-4</div>
<div class="t" style="left:1193.68px;top:931.15px;font-size:12px;line-height:12px;color:#1b1b1b;transform:scaleX(0.9024);transform-origin:0.42px 0;">0.010720</div>
<div class="t" style="left:1257.42px;top:931.15px;font-size:12px;line-height:12px;color:#1b1b1b;transform:scaleX(0.9507);transform-origin:0.48px 0;">-5.1333E-5</div>
<div class="t" style="left:1321.10px;top:931.15px;font-size:12px;line-height:12px;color:#1b1b1b;transform:scaleX(0.9140);transform-origin:0.90px 0;">1.8480E-10</div>
<div style="left:872px;top:962px;width:1019px;height:1px;background:#bcbcbc"></div>
<div class="t" style="left:873.76px;top:949.12px;font-size:12px;line-height:12px;color:#1b1b1b;transform:scaleX(0.9108);transform-origin:0.24px 0;">4.3056E-4</div>
<div class="t" style="left:937.78px;top:949.12px;font-size:12px;line-height:12px;color:#1b1b1b;transform:scaleX(0.8942);transform-origin:0.42px 0;">0.0051740</div>
<div class="t" style="left:1001.52px;top:949.12px;font-size:12px;line-height:12px;color:#1b1b1b;transform:scaleX(0.9417);transform-origin:0.48px 0;">-0.035967</div>
<div class="t" style="left:1065.20px;top:949.12px;font-size:12px;line-height:12px;color:#1b1b1b;transform:scaleX(0.9169);transform-origin:0.60px 0;">2.7590E-4</div>
<div class="t" style="left:1130.02px;top:949.12px;font-size:12px;line-height:12px;color:#1b1b1b;transform:scaleX(0.9477);transform-origin:0.48px 0;">-6.5084E-4</div>
<div class="t" style="left:1193.50px;top:949.12px;font-size:12px;line-height:12px;color:#1b1b1b;transform:scaleX(0.9169);transform-origin:0.60px 0;">2.5050E-4</div>
<div class="t" style="left:1257.42px;top:949.12px;font-size:12px;line-height:12px;color:#1b1b1b;transform:scaleX(0.9507);transform-origin:0.48px 0;">-6.1309E-5</div>
<div class="t" style="left:1321.52px;top:949.12px;font-size:12px;line-height:12px;color:#1b1b1b;transform:scaleX(0.9078);transform-origin:0.48px 0;">5.3612E-10</div>
<div style="left:872px;top:980px;width:1019px;height:1px;background:#bcbcbc"></div>
<div class="t" style="left:873.76px;top:967.09px;font-size:12px;line-height:12px;color:#1b1b1b;transform:scaleX(0.9108);transform-origin:0.24px 0;">4.1781E-4</div>
<div class="t" style="left:937.78px;top:967.09px;font-size:12px;line-height:12px;color:#1b1b1b;transform:scaleX(0.8952);transform-origin:0.42px 0;">0.0061485</div>
<div class="t" style="left:1001.52px;top:967.09px;font-size:12px;line-height:12px;color:#1b1b1b;transform:scaleX(0.9748);transform-origin:0.48px 0;">-0.011132</div>
<div class="t" style="left:1065.20px;top:967.09px;font-size:12px;line-height:12px;color:#1b1b1b;transform:scaleX(0.9169);transform-origin:0.60px 0;">2.1335E-4</div>
<div class="t" style="left:1130.02px;top:967.09px;font-size:12px;line-height:12px;color:#1b1b1b;transform:scaleX(0.9477);transform-origin:0.48px 0;">-4.8462E-4</div>
<div class="t" style="left:1193.62px;top:967.09px;font-size:12px;line-height:12px;color:#1b1b1b;transform:scaleX(0.9296);transform-origin:0.48px 0;">-0.0033612</div>
<div class="t" style="left:1257.42px;top:967.09px;font-size:12px;line-height:12px;color:#1b1b1b;transform:scaleX(0.9507);transform-origin:0.48px 0;">-6.7739E-5</div>
<div class="t" style="left:1321.10px;top:967.09px;font-size:12px;line-height:12px;color:#1b1b1b;transform:scaleX(0.9140);transform-origin:0.90px 0;">1.3543E-10</div>
<div style="left:872px;top:998px;width:1019px;height:1px;background:#bcbcbc"></div>
<div class="t" style="left:873.40px;top:985.06px;font-size:12px;line-height:12px;color:#1b1b1b;transform:scaleX(0.9169);transform-origin:0.60px 0;">7.7129E-4</div>
<div class="t" style="left:937.78px;top:985.06px;font-size:12px;line-height:12px;color:#1b1b1b;transform:scaleX(0.8923);transform-origin:0.42px 0;">0.0059784</div>
<div class="t" style="left:1001.52px;top:985.06px;font-size:12px;line-height:12px;color:#1b1b1b;transform:scaleX(0.9407);transform-origin:0.48px 0;">-0.027326</div>
<div class="t" style="left:1065.56px;top:985.06px;font-size:12px;line-height:12px;color:#1b1b1b;transform:scaleX(0.9108);transform-origin:0.24px 0;">4.5959E-4</div>
<div class="t" style="left:1130.02px;top:985.06px;font-size:12px;line-height:12px;color:#1b1b1b;transform:scaleX(0.9477);transform-origin:0.48px 0;">-5.7350E-4</div>
<div class="t" style="left:1193.62px;top:985.06px;font-size:12px;line-height:12px;color:#1b1b1b;transform:scaleX(0.9407);transform-origin:0.48px 0;">-0.010808</div>
<div class="t" style="left:1257.42px;top:985.06px;font-size:12px;line-height:12px;color:#1b1b1b;transform:scaleX(0.9507);transform-origin:0.48px 0;">-4.3376E-5</div>
<div class="t" style="left:1321.10px;top:985.06px;font-size:12px;line-height:12px;color:#1b1b1b;transform:scaleX(0.9250);transform-origin:0.90px 0;">1.1442E-8</div>
<div style="left:872px;top:1016px;width:1019px;height:1px;background:#bcbcbc"></div>
<div class="t" style="left:873.58px;top:1003.03px;font-size:12px;line-height:12px;color:#1b1b1b;transform:scaleX(0.9138);transform-origin:0.42px 0;">3.4503E-4</div>
<div class="t" style="left:937.78px;top:1003.03px;font-size:12px;line-height:12px;color:#1b1b1b;transform:scaleX(0.8952);transform-origin:0.42px 0;">0.0057723</div>
<div class="t" style="left:1001.52px;top:1003.03px;font-size:12px;line-height:12px;color:#1b1b1b;transform:scaleX(0.9407);transform-origin:0.48px 0;">-0.022426</div>
<div class="t" style="left:1065.38px;top:1003.03px;font-size:12px;line-height:12px;color:#1b1b1b;transform:scaleX(0.9138);transform-origin:0.42px 0;">3.3355E-4</div>
<div class="t" style="left:1130.02px;top:1003.03px;font-size:12px;line-height:12px;color:#1b1b1b;transform:scaleX(0.9287);transform-origin:0.48px 0;">-0.0010145</div>
<div class="t" style="left:1193.20px;top:1003.03px;font-size:12px;line-height:12px;color:#1b1b1b;transform:scaleX(0.9219);transform-origin:0.90px 0;">1.9502E-4</div>
<div class="t" style="left:1257.42px;top:1003.03px;font-size:12px;line-height:12px;color:#1b1b1b;transform:scaleX(0.9477);transform-origin:0.48px 0;">-3.1021E-4</div>
<div class="t" style="left:1321.40px;top:1003.03px;font-size:12px;line-height:12px;color:#1b1b1b;transform:scaleX(0.9095);transform-origin:0.60px 0;">2.4773E-10</div>
<div style="left:872px;top:1034px;width:1019px;height:1px;background:#bcbcbc"></div>
<div class="t" style="left:873.76px;top:1021.00px;font-size:12px;line-height:12px;color:#1b1b1b;transform:scaleX(0.9260);transform-origin:0.24px 0;">4.7115E-4</div>
<div class="t" style="left:937.78px;top:1021.00px;font-size:12px;line-height:12px;color:#1b1b1b;transform:scaleX(0.8961);transform-origin:0.42px 0;">0.0056617</div>
<div class="t" style="left:1001.52px;top:1021.00px;font-size:12px;line-height:12px;color:#1b1b1b;transform:scaleX(0.9375);transform-origin:0.48px 0;">-0.020504</div>
<div class="t" style="left:1065.38px;top:1021.00px;font-size:12px;line-height:12px;color:#1b1b1b;transform:scaleX(0.9138);transform-origin:0.42px 0;">3.0191E-4</div>
<div class="t" style="left:1130.02px;top:1021.00px;font-size:12px;line-height:12px;color:#1b1b1b;transform:scaleX(0.9477);transform-origin:0.48px 0;">-7.1219E-4</div>
<div class="t" style="left:1193.50px;top:1021.00px;font-size:12px;line-height:12px;color:#1b1b1b;transform:scaleX(0.9169);transform-origin:0.60px 0;">2.7412E-4</div>
<div class="t" style="left:1257.42px;top:1021.00px;font-size:12px;line-height:12px;color:#1b1b1b;transform:scaleX(0.9507);transform-origin:0.48px 0;">-6.7088E-5</div>
<div class="t" style="left:1321.10px;top:1021.00px;font-size:12px;line-height:12px;color:#1b1b1b;transform:scaleX(0.9140);transform-origin:0.90px 0;">1.2138E-10</div>
<div style="left:872px;top:1041px;width:1019px;height:1px;background:#cfcfcf"></div>
<div style="left:1891px;top:874px;width:17px;height:162px;background:#fff"></div>
<svg style="left:1894px;top:880px;" width="10" height="6" viewBox="0 0 10 6"><path d="M1 5l4-4 4 4" fill="none" stroke="#bbb" stroke-width="1.1"/></svg>
<div style="left:1891px;top:997px;width:17px;height:27px;background:#e3e3e5"></div>
<svg style="left:1894px;top:1030px;" width="10" height="6" viewBox="0 0 10 6"><path d="M1 1l4 4 4-4" fill="none" stroke="#bbb" stroke-width="1.1"/></svg>
<div class="t" style="left:1240.58px;top:1058.64px;font-size:12px;line-height:12px;color:#1b1b1b;transform:scaleX(0.8958);transform-origin:0.42px 0;">3.59 GB | 3.84 GB</div>
</body></html>
